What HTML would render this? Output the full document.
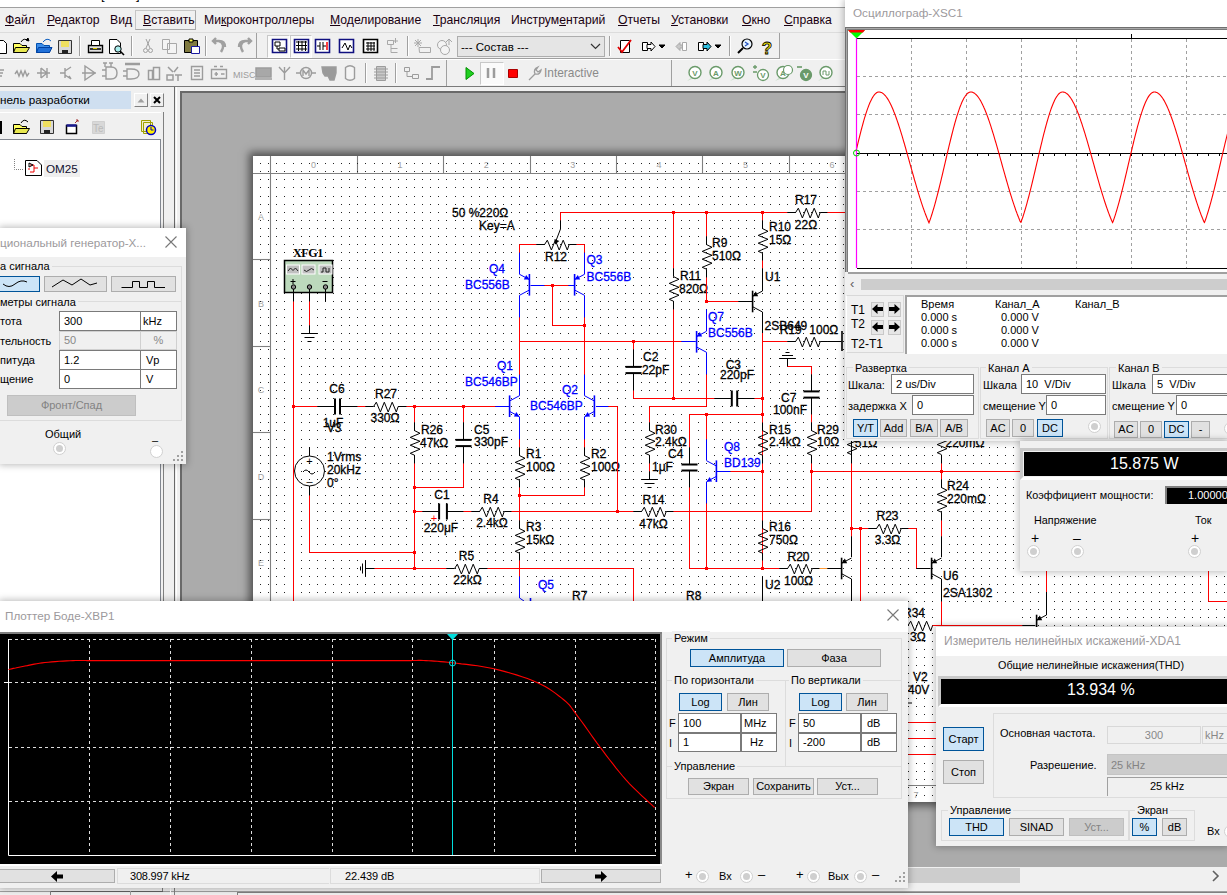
<!DOCTYPE html><html><head><meta charset="utf-8"><style>
*{margin:0;padding:0;box-sizing:border-box}
html,body{width:1227px;height:895px;overflow:hidden;background:#f0f0f0;position:relative;font-family:"Liberation Sans",sans-serif;font-size:12px;color:#000}
.t{position:absolute;white-space:nowrap;line-height:14px;font-size:11px}
.b{position:absolute}
svg{position:absolute;left:0;top:0;overflow:visible}
.btn{position:absolute;background:#e1e1e1;border:1px solid #adadad;text-align:center;white-space:nowrap;line-height:15px;font-size:11px}
.sel{background:#cce4f7;border-color:#005499}
.dis{background:#cccccc;border-color:#bfbfbf;color:#838383}
.inp{position:absolute;background:#fff;border:1px solid #7a7a7a;white-space:nowrap;line-height:16px;padding-left:4px;font-size:11px}
.grp{position:absolute;border:1px solid #dcdcdc}
.gl{position:absolute;background:#f0f0f0;padding:0 2px;line-height:13px;white-space:nowrap}
</style></head><body><div class="b" style="left:0px;top:0px;width:1227px;height:7px;background:#fff"></div>
<div class="t" style="left:101px;top:-12px;font-size:13px;color:#000">[</div><div class="t" style="left:136px;top:-12px;font-size:13px;color:#000">]</div>
<div class="b" style="left:0px;top:7px;width:1227px;height:1px;background:#a0a0a0"></div>
<div class="b" style="left:135px;top:10px;width:61px;height:20px;border:1px solid #c6c6c6;border-right-color:#a8a8a8;border-bottom-color:#a8a8a8;background:#f0f0f0"></div>
<div class="t" style="left:5px;top:13px;font-size:12.2px;line-height:15px;color:#1a0010;text-decoration-thickness:1px"><u>Ф</u>айл</div>
<div class="t" style="left:47px;top:13px;font-size:12.2px;line-height:15px;color:#1a0010;text-decoration-thickness:1px"><u>Р</u>едактор</div>
<div class="t" style="left:110px;top:13px;font-size:12.2px;line-height:15px;color:#1a0010;text-decoration-thickness:1px">Вид</div>
<div class="t" style="left:143px;top:13px;font-size:12.2px;line-height:15px;color:#1a0010;text-decoration-thickness:1px"><u>В</u>ставить</div>
<div class="t" style="left:204px;top:13px;font-size:12.2px;line-height:15px;color:#1a0010;text-decoration-thickness:1px">Ми<u>к</u>роконтроллеры</div>
<div class="t" style="left:330px;top:13px;font-size:12.2px;line-height:15px;color:#1a0010;text-decoration-thickness:1px"><u>М</u>оделирование</div>
<div class="t" style="left:433px;top:13px;font-size:12.2px;line-height:15px;color:#1a0010;text-decoration-thickness:1px"><u>Т</u>рансляция</div>
<div class="t" style="left:511px;top:13px;font-size:12.2px;line-height:15px;color:#1a0010;text-decoration-thickness:1px">Инструм<u>е</u>нтарий</div>
<div class="t" style="left:618px;top:13px;font-size:12.2px;line-height:15px;color:#1a0010;text-decoration-thickness:1px"><u>О</u>тчеты</div>
<div class="t" style="left:671px;top:13px;font-size:12.2px;line-height:15px;color:#1a0010;text-decoration-thickness:1px"><u>У</u>становки</div>
<div class="t" style="left:742px;top:13px;font-size:12.2px;line-height:15px;color:#1a0010;text-decoration-thickness:1px"><u>О</u>кно</div>
<div class="t" style="left:784px;top:13px;font-size:12.2px;line-height:15px;color:#1a0010;text-decoration-thickness:1px"><u>С</u>правка</div>
<div class="b" style="left:0px;top:32px;width:845px;height:1px;background:#dcdcdc"></div>
<div class="b" style="left:0px;top:33px;width:780px;height:26px;background:#f0f0f0;border-bottom:1px solid #a0a0a0;border-right:1px solid #a0a0a0"></div>
<div class="b" style="left:0px;top:59px;width:845px;height:1px;background:#fff"></div>
<div class="b" style="left:0px;top:60px;width:845px;height:27px;background:#f0f0f0;border-bottom:1px solid #7a7a7a"></div>
<div class="b" style="left:671px;top:60px;width:1px;height:26px;background:#a0a0a0"></div>
<div class="b" style="left:267px;top:35px;width:23px;height:23px;background:#fafafa;border:1px solid #c8c8c8;border-right-color:#fff;border-bottom-color:#fff"></div>
<div class="b" style="left:290px;top:35px;width:22px;height:23px;background:#fafafa;border:1px solid #c8c8c8;border-right-color:#fff;border-bottom-color:#fff"></div>
<div class="b" style="left:457px;top:36px;width:148px;height:21px;background:#e5e5e5;border:1px solid #adadad"></div>
<div class="t" style="left:461px;top:40px;font-size:11.5px;line-height:15px">--- Состав ---</div>
<div class="b" style="left:446px;top:60px;width:1px;height:26px;background:#a0a0a0"></div>
<div class="b" style="left:480px;top:62px;width:24px;height:23px;background:#fafafa;border:1px solid #c8c8c8;border-right-color:#fff;border-bottom-color:#fff"></div>
<div class="t" style="left:544px;top:66px;font-size:11.9px;line-height:15px;color:#8a8a8a">Interactive</div>
<svg width="1227" height="100"><path d="M79.5 36V56" stroke="#a0a0a0" fill="none" stroke-width="1"/><path d="M80.5 36V56" stroke="#fff" fill="none" stroke-width="1"/><path d="M131.5 36V56" stroke="#a0a0a0" fill="none" stroke-width="1"/><path d="M132.5 36V56" stroke="#fff" fill="none" stroke-width="1"/><path d="M205.5 36V56" stroke="#a0a0a0" fill="none" stroke-width="1"/><path d="M206.5 36V56" stroke="#fff" fill="none" stroke-width="1"/><path d="M407.5 36V56" stroke="#a0a0a0" fill="none" stroke-width="1"/><path d="M408.5 36V56" stroke="#fff" fill="none" stroke-width="1"/><path d="M609.5 36V56" stroke="#a0a0a0" fill="none" stroke-width="1"/><path d="M610.5 36V56" stroke="#fff" fill="none" stroke-width="1"/><path d="M729.5 36V56" stroke="#a0a0a0" fill="none" stroke-width="1"/><path d="M730.5 36V56" stroke="#fff" fill="none" stroke-width="1"/><path d="M256.5 33V59" stroke="#a0a0a0" fill="none" stroke-width="1"/><path d="M-2 40.5H3.5L6.5 43.5V53.5H-2" stroke="#000" fill="#fff" stroke-width="1"/><path d="M13.5 43.5H20L22 45.5H26.5V52.5H13.5Z" stroke="#000" fill="#ffff60" stroke-width="1"/><path d="M15.5 47.5H29.5L26.5 52.5H13.5Z" stroke="#000" fill="#e8e850" stroke-width="1"/><path d="M21 42Q24 37 28 41" stroke="#000" fill="none" stroke-width="1"/><path d="M26 40L29 41L28 38Z" stroke="#000" fill="#000" stroke-width="1"/><path d="M36.5 43.5H42L44 45.5H49.5V52.5H36.5Z" stroke="#0050b0" fill="#3c8ce8" stroke-width="1"/><path d="M38.5 47.5H52L49.5 52.5H36.5Z" stroke="#0040a0" fill="#2070d8" stroke-width="1"/><path d="M43 42Q47 37 51 41" stroke="#1060c0" fill="none" stroke-width="1"/><path d="M58.5 40.5H71.5V53.5H58.5Z" stroke="#333" fill="#d8d8d8" stroke-width="1"/><path d="M61 41H69V47H61Z" stroke="none" fill="#f0e060" stroke-width="1"/><path d="M62 50H68V53.5H62Z" stroke="none" fill="#222" stroke-width="1"/><path d="M88.5 45.5H102.5V52.5H88.5Z" stroke="#000" fill="#e0e0e0" stroke-width="1.4"/><path d="M91.5 40.5H99.5V45.5H91.5Z" stroke="#000" fill="#fff" stroke-width="1"/><path d="M90 49H101" stroke="#000" fill="none" stroke-width="1.5"/><path d="M93 48.5H97" stroke="#e0d000" fill="none" stroke-width="1"/><path d="M109.5 39.5H117L120.5 43V53.5H109.5Z" stroke="#000" fill="#fff" stroke-width="1"/><circle cx="118" cy="49" r="3.2" stroke="#000" fill="#aee" /><path d="M120 51L124 55" stroke="#000" fill="none" stroke-width="1.6"/><path d="M146 39L150 48M150 39L146 48" stroke="#a0a0a0" fill="none" stroke-width="1"/><circle cx="145.5" cy="50.5" r="2" stroke="#a0a0a0" fill="none"/><circle cx="150.5" cy="50.5" r="2" stroke="#a0a0a0" fill="none"/><path d="M162.5 39.5H169.5V49.5H162.5ZM167.5 43.5H176.5V53.5H167.5Z" stroke="#a8a8a8" fill="#f4f4f4" stroke-width="1"/><path d="M184.5 40.5H197.5V52.5H184.5Z" stroke="#000" fill="#807a40" stroke-width="1"/><path d="M189 39H193V42H189Z" stroke="#000" fill="#ffff50" stroke-width="1"/><path d="M191.5 46.5H199.5V53.5H191.5Z" stroke="#1a1aa0" fill="#fff" stroke-width="1"/><path d="M225 47Q225 41 219 41H214M216 38L213 41L216 44" stroke="#a0a0a0" fill="none" stroke-width="2.4"/><path d="M219 41Q226 44 221 52" stroke="#a0a0a0" fill="none" stroke-width="2.4"/><path d="M239 47Q239 41 245 41H250M248 38L251 41L248 44" stroke="#a0a0a0" fill="none" stroke-width="2.4"/><path d="M245 41Q238 44 243 52" stroke="#a0a0a0" fill="none" stroke-width="2.4"/><path d="M272.5 39.5H286.5V52.5H272.5Z" stroke="#101080" fill="#fff" stroke-width="1.6"/><path d="M294.5 39.5H308.5V52.5H294.5Z" stroke="#101080" fill="#fff" stroke-width="1.6"/><path d="M315.5 39.5H329.5V52.5H315.5Z" stroke="#101080" fill="#fff" stroke-width="1.6"/><path d="M339.5 39.5H353.5V52.5H339.5Z" stroke="#101080" fill="#fff" stroke-width="1.6"/><path d="M275 42H280V46H275ZM279 48H285V51H279ZM277 46V49H279" stroke="#000" fill="none" stroke-width="1"/><path d="M296 42H307M296 45.5H307M296 49H307M298.5 41V51M302 41V51M305.5 41V51" stroke="#000" fill="none" stroke-width="1"/><path d="M320 42V50M323 42V50M317 46H320M323 46H326" stroke="#000" fill="none" stroke-width="1"/><path d="M327 42V50" stroke="#f00" fill="none" stroke-width="1.5"/><path d="M342 48L345 43L348 50L350 45L352 48" stroke="#000" fill="none" stroke-width="1"/><path d="M363.5 39.5H377.5V52.5H363.5Z" stroke="#000" fill="#fff" stroke-width="1.6"/><path d="M366 43H375M366 46H375M366 49H375M368 42V51M371 42V51M374 42V51" stroke="#000" fill="none" stroke-width="1"/><path d="M387.5 40.5H393.5V44.5H387.5ZM391 44.5V52.5H397.5M391 48.5H397.5M395.5 38V43M393 41H398" stroke="#a8a8a8" fill="none" stroke-width="1"/><path d="M415 40L421 46M421 40L415 46M418 39V47M414 43H422M419 47.5H430.5V52.5H419.5Z" stroke="#a8a8a8" fill="none" stroke-width="1"/><circle cx="442" cy="45" r="4.5" stroke="#a8a8a8" fill="#f4f4f4"/><circle cx="445" cy="50" r="4.5" stroke="#a8a8a8" fill="#f4f4f4"/><path d="M449 39V45M446 42L449 39L452 42" stroke="#a8a8a8" fill="none" stroke-width="1"/><path d="M591 44L595.5 48.5L600 44" stroke="#333" fill="none" stroke-width="1.2"/><path d="M620.5 40.5H629.5V52.5H620.5Z" stroke="#000" fill="#fff" stroke-width="1"/><path d="M618 47L622 52L631 40" stroke="#e00000" fill="none" stroke-width="1.8"/><path d="M642.5 42.5H647.5V50.5H642.5Z" stroke="#000" fill="#fff" stroke-width="1"/><path d="M647 44.5H651V42L655 46.5L651 51V48.5H647Z" stroke="#000" fill="#fff" stroke-width="1"/><path d="M659 45H665L662 48Z" stroke="#000" fill="#000" stroke-width="1"/><path d="M698.5 42.5H703.5V50.5H698.5Z" stroke="#000" fill="#fff" stroke-width="1"/><path d="M703 44.5H707V42L711 46.5L707 51V48.5H703Z" stroke="#000" fill="#30c0e0" stroke-width="1"/><path d="M715 45H721L718 48Z" stroke="#000" fill="#000" stroke-width="1"/><path d="M676 46.5L680 42.5V45H685V48H680V50.5Z" stroke="#a8a8a8" fill="#c8c8c8" stroke-width="1"/><path d="M682.5 42.5H686.5V50.5H682.5Z" stroke="#a8a8a8" fill="#fff" stroke-width="1"/><circle cx="747" cy="44" r="5" stroke="#000" fill="#e8f4ff" stroke-width="1.2"/><path d="M743 48L738 53" stroke="#000" fill="none" stroke-width="2"/><path d="M745 42L748 44L745 46" stroke="#2050c0" fill="none" stroke-width="1.3"/><text x="767" y="54" font-size="17" font-weight="bold" fill="#f0e000" stroke="#000" stroke-width="0.8" text-anchor="middle" font-family="Liberation Sans">?</text><g stroke-width="1.4"><path d="M0 70H4M0 73H3M0 76H2" stroke="#9c9c9c" fill="none" stroke-width="1.4"/><path d="M15 74L17 71L19 76L21 71L23 76L25 71L27 76L29 73" stroke="#9c9c9c" fill="none" stroke-width="1.4"/><path d="M37 73H50M41 68V78M41 68L47 73L41 78M47 68V78" stroke="#9c9c9c" fill="none" stroke-width="1.4"/><path d="M60 73H65M65 68V78M65 71L71 67M65 75L71 79M68 77L71 79L69 76" stroke="#9c9c9c" fill="none" stroke-width="1.4"/><path d="M82 73H96M85 66V80L95 73Z" stroke="#9c9c9c" fill="#f0f0f0" stroke-width="1.4"/><path d="M102 70H106M102 76H106M106 67H111Q117 67 117 73Q117 79 111 79H106Z" stroke="#9c9c9c" fill="#f0f0f0" stroke-width="1.4"/><path d="M103 63H107M105 63V67M109 63H113M111 63V67" stroke="#9c9c9c" fill="none" stroke-width="1.4"/><path d="M123 71H127M123 76H127M127 69H131Q139 69 139 74Q139 79 131 79H127Z" stroke="#9c9c9c" fill="#f0f0f0" stroke-width="1.4"/><path d="M125 64H140" stroke="#9c9c9c" fill="none" stroke-width="2.5"/><path d="M148.5 70.5H152.5V79.5H148.5ZM153.5 67.5H159.5V79.5H153.5Z" stroke="#9c9c9c" fill="#f0f0f0" stroke-width="1.5"/><path d="M168 67L173 72M174 72L178 67M167 75H173V80H167ZM175 75H182M178 75V81" stroke="#9c9c9c" fill="#f0f0f0" stroke-width="1.5"/><path d="M191.5 66.5H202.5V79.5H191.5ZM194 70H200M194 73H200M194 76H200" stroke="#9c9c9c" fill="#f0f0f0" stroke-width="1.4"/><path d="M211.5 69.5H226.5V78.5H211.5ZM214 66.5H217M220 66.5H223M214.5 74H218M216.2 72V76M221 74H224.5" stroke="#9c9c9c" fill="#f0f0f0" stroke-width="1.4"/><text x="233" y="78" font-size="9" fill="#9c9c9c" font-family="Liberation Sans">MISC</text><path d="M256 68H271V77H256ZM255 79H272" stroke="#9c9c9c" fill="#a8a8a8" stroke-width="1.5"/><path d="M279 67L284.5 73L290 67M284.5 67V80" stroke="#9c9c9c" fill="none" stroke-width="1.4"/><circle cx="306" cy="73" r="5.5" stroke="#9c9c9c" fill="none"/><path d="M296 73H300.5M311.5 73H316M303 76V70L306 74L309 70V76" stroke="#9c9c9c" fill="none" stroke-width="1.4"/><path d="M322 67H336V73L334 80H330L328 76H325L323 73Z" stroke="#9c9c9c" fill="#9a9a9a" stroke-width="1.4"/><path d="M345.5 67.5Q350 64 354.5 67.5V78.5Q350 82 345.5 78.5Z" stroke="#9c9c9c" fill="#f4f4f4" stroke-width="1.4"/></g><path d="M365.5 63V83" stroke="#a0a0a0" fill="none" stroke-width="1"/><path d="M366.5 63V83" stroke="#fff" fill="none" stroke-width="1"/><path d="M376.5 66.5H385.5V80.5H376.5ZM374 69H388M374 72H388M374 75H388M374 78H388" stroke="#9c9c9c" fill="#c8c8c8" stroke-width="1"/><path d="M395.5 63V83" stroke="#a0a0a0" fill="none" stroke-width="1"/><path d="M396.5 63V83" stroke="#fff" fill="none" stroke-width="1"/><path d="M404.5 67.5H409.5V71.5H404.5ZM412.5 74.5H418.5V78.5H412.5ZM407 71.5V76.5H412.5" stroke="#9c9c9c" fill="none" stroke-width="1"/><path d="M426 79H432V67H440" stroke="#9c9c9c" fill="none" stroke-width="1.8"/><path d="M466 67.5V79.5L474 73.5Z" stroke="#009000" fill="#20d020" stroke-width="1"/><path d="M488 68V78M494 68V78" stroke="#9c9c9c" fill="none" stroke-width="2.5"/><path d="M508.5 69.5H517.5V77.5H508.5Z" stroke="#a00" fill="#f00" stroke-width="1"/><path d="M529 80L535 74M535 74Q533 69 538 67L536 70L538 72L541 70Q540 75 535 74" stroke="#9c9c9c" fill="#f0f0f0" stroke-width="1.3"/><path d="M687 81L692 77H697Z" fill="#c8e0c8"/><circle cx="695" cy="72.5" r="6" stroke="#6a9a6a" fill="#fff" stroke-width="1.4"/><text x="695" y="75.5" font-size="8" font-weight="bold" fill="#6a9a6a" text-anchor="middle" font-family="Liberation Sans">V</text><path d="M708 81L713 77H718Z" fill="#c8e0c8"/><circle cx="716" cy="72.5" r="6" stroke="#6a9a6a" fill="#fff" stroke-width="1.4"/><text x="716" y="75.5" font-size="8" font-weight="bold" fill="#6a9a6a" text-anchor="middle" font-family="Liberation Sans">A</text><path d="M730 81L735 77H740Z" fill="#c8e0c8"/><circle cx="738" cy="72.5" r="6" stroke="#6a9a6a" fill="#fff" stroke-width="1.4"/><text x="738" y="75.5" font-size="8" font-weight="bold" fill="#6a9a6a" text-anchor="middle" font-family="Liberation Sans">W</text><path d="M775 81L780 77H785Z" fill="#c8e0c8"/><circle cx="783" cy="72.5" r="6" stroke="#6a9a6a" fill="#fff" stroke-width="1.4"/><text x="783" y="75.5" font-size="8" font-weight="bold" fill="#6a9a6a" text-anchor="middle" font-family="Liberation Sans">A</text><path d="M818 81L823 77H828Z" fill="#c8e0c8"/><circle cx="826" cy="72.5" r="6" stroke="#6a9a6a" fill="#fff" stroke-width="1.4"/><path d="M823 75V71H826V75H829V71" stroke="#6a9a6a" fill="none" stroke-width="1"/><circle cx="763" cy="75" r="5.5" stroke="#6a9a6a" fill="#fff" stroke-width="1.3"/><text x="763" y="78" font-size="8" font-weight="bold" fill="#6a9a6a" text-anchor="middle" font-family="Liberation Sans">V</text><path d="M753 67H757M755 65V69M753 72H757" stroke="#6a9a6a" fill="none" stroke-width="1.3"/><circle cx="788" cy="70" r="4.5" stroke="#6a9a6a" fill="#fff" stroke-width="1.2"/><circle cx="806" cy="75" r="5.5" stroke="#6a9a6a" fill="#6a9a6a" stroke-width="1.3"/><text x="806" y="78" font-size="8" font-weight="bold" fill="#fff" text-anchor="middle" font-family="Liberation Sans">V</text><path d="M797 67H802" stroke="#6a9a6a" fill="none" stroke-width="1.6"/></svg>
<div class="b" style="left:0px;top:87px;width:180px;height:514px;background:#f0f0f0"></div>
<div class="b" style="left:0px;top:91px;width:131px;height:18px;background:#cfdff0"></div>
<div class="t" style="left:0px;top:92px;font-size:11.7px;line-height:15px">нель разработки</div>
<div class="b" style="left:134px;top:93px;width:14px;height:14px;background:#f0f0f0;border:1px solid #fff;border-right-color:#808080;border-bottom-color:#808080"></div>
<div class="b" style="left:150px;top:93px;width:14px;height:14px;background:#f0f0f0;border:1px solid #fff;border-right-color:#808080;border-bottom-color:#808080"></div>
<div class="b" style="left:0px;top:112px;width:164px;height:489px;border-right:1px solid #a0a0a0;border-top:1px solid #fff"></div>
<div class="b" style="left:161px;top:112px;width:3px;height:489px;background:#f0f0f0;border-right:1px solid #808080"></div>
<div class="b" style="left:0px;top:139px;width:161px;height:462px;background:#fff;border-top:1px solid #828790;border-right:1px solid #828790"></div>
<svg width="300" height="200"><path d="M137.5 102.5L141 98.5L144.5 102.5Z" fill="#a0a0a0"/><path d="M154 97L160 103M160 97L154 103" stroke="#000" stroke-width="2"/><path d="M0 121H2V134H0Z" fill="#000"/><path d="M13.5 124.5H20L22 126.5H26.5V133.5H13.5Z" stroke="#000" fill="#ffff60"/><path d="M15.5 128.5H29.5L26.5 133.5H13.5Z" stroke="#000" fill="#e8e850"/><path d="M21 123Q24 118 28 122" stroke="#000" fill="none"/><path d="M40.5 120.5H53.5V133.5H40.5Z" stroke="#333" fill="#d8d8d8"/><path d="M43 121H51V127H43Z" fill="#f0e060"/><path d="M44 130H50V133.5H44Z" fill="#222"/><path d="M66.5 125.5H76.5V133.5H66.5Z" stroke="#000" fill="#fff" stroke-width="1.5"/><path d="M66.5 125.5H76.5" stroke="#1a1a90" stroke-width="2.5"/><path d="M75 123L78 120M76 120H78V122" stroke="#a03030" fill="none"/><path d="M92.5 121.5H104.5V133.5H92.5Z" fill="#d8d8d8" stroke="#d0d0d0"/><text x="93" y="132" font-size="10" fill="#bbb" font-family="Liberation Sans">Te</text><path d="M141.5 120.5H150.5V131.5H141.5ZM143.5 122.5H152.5V133.5H143.5Z" stroke="#a0a000" fill="#f0f0d0"/><circle cx="151" cy="130" r="4.5" fill="#ffee00" stroke="#0000c0" stroke-width="1.5"/><path d="M151 127V130H153.5" stroke="#0000c0" fill="none"/><path d="M14.5 159V169.5H24" stroke="#808080" stroke-dasharray="1 1" fill="none"/><path d="M25.5 160.5H37L41.5 165V175.5H25.5Z" stroke="#000" fill="#fff"/><path d="M30 165H34V172H30M34 168H38M28 169H30" stroke="#e00" fill="none"/><path d="M29 163L33 165L29 167Z" stroke="#000" fill="none"/></svg>
<div class="b" style="left:44px;top:160px;width:36px;height:17px;background:#efefef"></div>
<div class="t" style="left:46px;top:161px;font-size:11.7px;line-height:15px;color:#101030">OM25</div>
<div class="b" style="left:164px;top:87px;width:16px;height:514px;background:#f0f0f0"></div>
<div class="b" style="left:174px;top:87px;width:1px;height:514px;background:#696969"></div>
<div class="b" style="left:176px;top:87px;width:1px;height:514px;background:#fff"></div>
<div class="b" style="left:0px;top:885px;width:1227px;height:10px;background:#f0f0f0"></div>
<div class="b" style="left:0px;top:891px;width:1227px;height:1px;background:#a0a0a0"></div>
<div class="b" style="left:0px;top:887px;width:163px;height:1px;background:#808080"></div>
<div class="b" style="left:162px;top:887px;width:1px;height:5px;background:#808080"></div>
<div class="b" style="left:50px;top:891px;width:113px;height:1px;background:#606060"></div>
<div class="b" style="left:50px;top:891px;width:1px;height:4px;background:#808080"></div>
<div class="b" style="left:130px;top:891px;width:1px;height:4px;background:#a0a0a0"></div>
<div class="b" style="left:170px;top:887px;width:1px;height:8px;background:#fff"></div>
<div class="b" style="left:174px;top:887px;width:1px;height:8px;background:#808080"></div>
<div class="b" style="left:237px;top:892px;width:990px;height:1px;background:#808080"></div>
<div class="b" style="left:237px;top:892px;width:1px;height:3px;background:#808080"></div>
<div class="b" style="left:180px;top:91px;width:1047px;height:777px;background:#ababab;border-left:2px solid #696969;border-top:2px solid #696969"></div>
<div class="b" style="left:253px;top:156px;width:974px;height:646px;background:#fff;box-shadow:0 0 8px 4px rgba(0,0,0,.52)"></div>
<div class="b" style="left:180px;top:867px;width:1047px;height:18px;background:#f0f0f0"></div>
<div class="b" style="left:180px;top:868px;width:840px;height:15px;background:#cdcdcd"></div>
<svg width="1227" height="895"><path d="M1213 871L1218 876L1213 881" stroke="#606060" stroke-width="1.6" fill="none"/></svg>
<svg width="1227" height="895" style="font-family:'Liberation Sans',sans-serif"><path d="M253 173.5H845M270.5 156V601M908 785.5H936" stroke="#808080" stroke-width="1.1"/><path d="M357.5 156V173" stroke="#808080" stroke-width="1.1"/><path d="M443.5 156V173" stroke="#808080" stroke-width="1.1"/><path d="M530.5 156V173" stroke="#808080" stroke-width="1.1"/><path d="M616.5 156V173" stroke="#808080" stroke-width="1.1"/><path d="M702.5 156V173" stroke="#808080" stroke-width="1.1"/><path d="M789.5 156V173" stroke="#808080" stroke-width="1.1"/><path d="M253 259.5H270" stroke="#808080" stroke-width="1.1"/><path d="M253 346.5H270" stroke="#808080" stroke-width="1.1"/><path d="M253 432.5H270" stroke="#808080" stroke-width="1.1"/><path d="M253 519.5H270" stroke="#808080" stroke-width="1.1"/><path d="M253 605.5H270" stroke="#808080" stroke-width="1.1"/><text x="313.5" y="167.5" font-size="9" fill="#a0a0a0" text-anchor="middle">0</text><text x="399.9" y="167.5" font-size="9" fill="#a0a0a0" text-anchor="middle">1</text><text x="486.3" y="167.5" font-size="9" fill="#a0a0a0" text-anchor="middle">2</text><text x="572.7" y="167.5" font-size="9" fill="#a0a0a0" text-anchor="middle">3</text><text x="659.1" y="167.5" font-size="9" fill="#a0a0a0" text-anchor="middle">4</text><text x="745.5" y="167.5" font-size="9" fill="#a0a0a0" text-anchor="middle">5</text><text x="831.9" y="167.5" font-size="9" fill="#a0a0a0" text-anchor="middle">6</text><text x="261" y="220.2" font-size="9" fill="#a0a0a0" text-anchor="middle">A</text><text x="261" y="306.6" font-size="9" fill="#a0a0a0" text-anchor="middle">B</text><text x="261" y="393.1" font-size="9" fill="#a0a0a0" text-anchor="middle">C</text><text x="261" y="479.6" font-size="9" fill="#a0a0a0" text-anchor="middle">D</text><text x="261" y="566.0" font-size="9" fill="#a0a0a0" text-anchor="middle">E</text><text x="916" y="797.5" font-size="9" fill="#a0a0a0" text-anchor="middle">7</text><path fill="#222" d="M260 163h1v1h-1zM268 163h1v1h-1zM276 163h1v1h-1zM284 163h1v1h-1zM293 163h1v1h-1zM301 163h1v1h-1zM309 163h1v1h-1zM317 163h1v1h-1zM325 163h1v1h-1zM333 163h1v1h-1zM341 163h1v1h-1zM349 163h1v1h-1zM357 163h1v1h-1zM365 163h1v1h-1zM374 163h1v1h-1zM382 163h1v1h-1zM390 163h1v1h-1zM398 163h1v1h-1zM406 163h1v1h-1zM414 163h1v1h-1zM422 163h1v1h-1zM430 163h1v1h-1zM438 163h1v1h-1zM446 163h1v1h-1zM455 163h1v1h-1zM463 163h1v1h-1zM471 163h1v1h-1zM479 163h1v1h-1zM487 163h1v1h-1zM495 163h1v1h-1zM503 163h1v1h-1zM511 163h1v1h-1zM519 163h1v1h-1zM527 163h1v1h-1zM536 163h1v1h-1zM544 163h1v1h-1zM552 163h1v1h-1zM560 163h1v1h-1zM568 163h1v1h-1zM576 163h1v1h-1zM584 163h1v1h-1zM592 163h1v1h-1zM600 163h1v1h-1zM608 163h1v1h-1zM617 163h1v1h-1zM625 163h1v1h-1zM633 163h1v1h-1zM641 163h1v1h-1zM649 163h1v1h-1zM657 163h1v1h-1zM665 163h1v1h-1zM673 163h1v1h-1zM681 163h1v1h-1zM689 163h1v1h-1zM698 163h1v1h-1zM706 163h1v1h-1zM714 163h1v1h-1zM722 163h1v1h-1zM730 163h1v1h-1zM738 163h1v1h-1zM746 163h1v1h-1zM754 163h1v1h-1zM762 163h1v1h-1zM770 163h1v1h-1zM779 163h1v1h-1zM787 163h1v1h-1zM795 163h1v1h-1zM803 163h1v1h-1zM811 163h1v1h-1zM819 163h1v1h-1zM827 163h1v1h-1zM835 163h1v1h-1zM843 163h1v1h-1zM260 171h1v1h-1zM268 171h1v1h-1zM276 171h1v1h-1zM284 171h1v1h-1zM293 171h1v1h-1zM301 171h1v1h-1zM309 171h1v1h-1zM317 171h1v1h-1zM325 171h1v1h-1zM333 171h1v1h-1zM341 171h1v1h-1zM349 171h1v1h-1zM357 171h1v1h-1zM365 171h1v1h-1zM374 171h1v1h-1zM382 171h1v1h-1zM390 171h1v1h-1zM398 171h1v1h-1zM406 171h1v1h-1zM414 171h1v1h-1zM422 171h1v1h-1zM430 171h1v1h-1zM438 171h1v1h-1zM446 171h1v1h-1zM455 171h1v1h-1zM463 171h1v1h-1zM471 171h1v1h-1zM479 171h1v1h-1zM487 171h1v1h-1zM495 171h1v1h-1zM503 171h1v1h-1zM511 171h1v1h-1zM519 171h1v1h-1zM527 171h1v1h-1zM536 171h1v1h-1zM544 171h1v1h-1zM552 171h1v1h-1zM560 171h1v1h-1zM568 171h1v1h-1zM576 171h1v1h-1zM584 171h1v1h-1zM592 171h1v1h-1zM600 171h1v1h-1zM608 171h1v1h-1zM617 171h1v1h-1zM625 171h1v1h-1zM633 171h1v1h-1zM641 171h1v1h-1zM649 171h1v1h-1zM657 171h1v1h-1zM665 171h1v1h-1zM673 171h1v1h-1zM681 171h1v1h-1zM689 171h1v1h-1zM698 171h1v1h-1zM706 171h1v1h-1zM714 171h1v1h-1zM722 171h1v1h-1zM730 171h1v1h-1zM738 171h1v1h-1zM746 171h1v1h-1zM754 171h1v1h-1zM762 171h1v1h-1zM770 171h1v1h-1zM779 171h1v1h-1zM787 171h1v1h-1zM795 171h1v1h-1zM803 171h1v1h-1zM811 171h1v1h-1zM819 171h1v1h-1zM827 171h1v1h-1zM835 171h1v1h-1zM843 171h1v1h-1zM260 179h1v1h-1zM268 179h1v1h-1zM276 179h1v1h-1zM284 179h1v1h-1zM293 179h1v1h-1zM301 179h1v1h-1zM309 179h1v1h-1zM317 179h1v1h-1zM325 179h1v1h-1zM333 179h1v1h-1zM341 179h1v1h-1zM349 179h1v1h-1zM357 179h1v1h-1zM365 179h1v1h-1zM374 179h1v1h-1zM382 179h1v1h-1zM390 179h1v1h-1zM398 179h1v1h-1zM406 179h1v1h-1zM414 179h1v1h-1zM422 179h1v1h-1zM430 179h1v1h-1zM438 179h1v1h-1zM446 179h1v1h-1zM455 179h1v1h-1zM463 179h1v1h-1zM471 179h1v1h-1zM479 179h1v1h-1zM487 179h1v1h-1zM495 179h1v1h-1zM503 179h1v1h-1zM511 179h1v1h-1zM519 179h1v1h-1zM527 179h1v1h-1zM536 179h1v1h-1zM544 179h1v1h-1zM552 179h1v1h-1zM560 179h1v1h-1zM568 179h1v1h-1zM576 179h1v1h-1zM584 179h1v1h-1zM592 179h1v1h-1zM600 179h1v1h-1zM608 179h1v1h-1zM617 179h1v1h-1zM625 179h1v1h-1zM633 179h1v1h-1zM641 179h1v1h-1zM649 179h1v1h-1zM657 179h1v1h-1zM665 179h1v1h-1zM673 179h1v1h-1zM681 179h1v1h-1zM689 179h1v1h-1zM698 179h1v1h-1zM706 179h1v1h-1zM714 179h1v1h-1zM722 179h1v1h-1zM730 179h1v1h-1zM738 179h1v1h-1zM746 179h1v1h-1zM754 179h1v1h-1zM762 179h1v1h-1zM770 179h1v1h-1zM779 179h1v1h-1zM787 179h1v1h-1zM795 179h1v1h-1zM803 179h1v1h-1zM811 179h1v1h-1zM819 179h1v1h-1zM827 179h1v1h-1zM835 179h1v1h-1zM843 179h1v1h-1zM260 187h1v1h-1zM268 187h1v1h-1zM276 187h1v1h-1zM284 187h1v1h-1zM293 187h1v1h-1zM301 187h1v1h-1zM309 187h1v1h-1zM317 187h1v1h-1zM325 187h1v1h-1zM333 187h1v1h-1zM341 187h1v1h-1zM349 187h1v1h-1zM357 187h1v1h-1zM365 187h1v1h-1zM374 187h1v1h-1zM382 187h1v1h-1zM390 187h1v1h-1zM398 187h1v1h-1zM406 187h1v1h-1zM414 187h1v1h-1zM422 187h1v1h-1zM430 187h1v1h-1zM438 187h1v1h-1zM446 187h1v1h-1zM455 187h1v1h-1zM463 187h1v1h-1zM471 187h1v1h-1zM479 187h1v1h-1zM487 187h1v1h-1zM495 187h1v1h-1zM503 187h1v1h-1zM511 187h1v1h-1zM519 187h1v1h-1zM527 187h1v1h-1zM536 187h1v1h-1zM544 187h1v1h-1zM552 187h1v1h-1zM560 187h1v1h-1zM568 187h1v1h-1zM576 187h1v1h-1zM584 187h1v1h-1zM592 187h1v1h-1zM600 187h1v1h-1zM608 187h1v1h-1zM617 187h1v1h-1zM625 187h1v1h-1zM633 187h1v1h-1zM641 187h1v1h-1zM649 187h1v1h-1zM657 187h1v1h-1zM665 187h1v1h-1zM673 187h1v1h-1zM681 187h1v1h-1zM689 187h1v1h-1zM698 187h1v1h-1zM706 187h1v1h-1zM714 187h1v1h-1zM722 187h1v1h-1zM730 187h1v1h-1zM738 187h1v1h-1zM746 187h1v1h-1zM754 187h1v1h-1zM762 187h1v1h-1zM770 187h1v1h-1zM779 187h1v1h-1zM787 187h1v1h-1zM795 187h1v1h-1zM803 187h1v1h-1zM811 187h1v1h-1zM819 187h1v1h-1zM827 187h1v1h-1zM835 187h1v1h-1zM843 187h1v1h-1zM260 196h1v1h-1zM268 196h1v1h-1zM276 196h1v1h-1zM284 196h1v1h-1zM293 196h1v1h-1zM301 196h1v1h-1zM309 196h1v1h-1zM317 196h1v1h-1zM325 196h1v1h-1zM333 196h1v1h-1zM341 196h1v1h-1zM349 196h1v1h-1zM357 196h1v1h-1zM365 196h1v1h-1zM374 196h1v1h-1zM382 196h1v1h-1zM390 196h1v1h-1zM398 196h1v1h-1zM406 196h1v1h-1zM414 196h1v1h-1zM422 196h1v1h-1zM430 196h1v1h-1zM438 196h1v1h-1zM446 196h1v1h-1zM455 196h1v1h-1zM463 196h1v1h-1zM471 196h1v1h-1zM479 196h1v1h-1zM487 196h1v1h-1zM495 196h1v1h-1zM503 196h1v1h-1zM511 196h1v1h-1zM519 196h1v1h-1zM527 196h1v1h-1zM536 196h1v1h-1zM544 196h1v1h-1zM552 196h1v1h-1zM560 196h1v1h-1zM568 196h1v1h-1zM576 196h1v1h-1zM584 196h1v1h-1zM592 196h1v1h-1zM600 196h1v1h-1zM608 196h1v1h-1zM617 196h1v1h-1zM625 196h1v1h-1zM633 196h1v1h-1zM641 196h1v1h-1zM649 196h1v1h-1zM657 196h1v1h-1zM665 196h1v1h-1zM673 196h1v1h-1zM681 196h1v1h-1zM689 196h1v1h-1zM698 196h1v1h-1zM706 196h1v1h-1zM714 196h1v1h-1zM722 196h1v1h-1zM730 196h1v1h-1zM738 196h1v1h-1zM746 196h1v1h-1zM754 196h1v1h-1zM762 196h1v1h-1zM770 196h1v1h-1zM779 196h1v1h-1zM787 196h1v1h-1zM795 196h1v1h-1zM803 196h1v1h-1zM811 196h1v1h-1zM819 196h1v1h-1zM827 196h1v1h-1zM835 196h1v1h-1zM843 196h1v1h-1zM260 204h1v1h-1zM268 204h1v1h-1zM276 204h1v1h-1zM284 204h1v1h-1zM293 204h1v1h-1zM301 204h1v1h-1zM309 204h1v1h-1zM317 204h1v1h-1zM325 204h1v1h-1zM333 204h1v1h-1zM341 204h1v1h-1zM349 204h1v1h-1zM357 204h1v1h-1zM365 204h1v1h-1zM374 204h1v1h-1zM382 204h1v1h-1zM390 204h1v1h-1zM398 204h1v1h-1zM406 204h1v1h-1zM414 204h1v1h-1zM422 204h1v1h-1zM430 204h1v1h-1zM438 204h1v1h-1zM446 204h1v1h-1zM455 204h1v1h-1zM463 204h1v1h-1zM471 204h1v1h-1zM479 204h1v1h-1zM487 204h1v1h-1zM495 204h1v1h-1zM503 204h1v1h-1zM511 204h1v1h-1zM519 204h1v1h-1zM527 204h1v1h-1zM536 204h1v1h-1zM544 204h1v1h-1zM552 204h1v1h-1zM560 204h1v1h-1zM568 204h1v1h-1zM576 204h1v1h-1zM584 204h1v1h-1zM592 204h1v1h-1zM600 204h1v1h-1zM608 204h1v1h-1zM617 204h1v1h-1zM625 204h1v1h-1zM633 204h1v1h-1zM641 204h1v1h-1zM649 204h1v1h-1zM657 204h1v1h-1zM665 204h1v1h-1zM673 204h1v1h-1zM681 204h1v1h-1zM689 204h1v1h-1zM698 204h1v1h-1zM706 204h1v1h-1zM714 204h1v1h-1zM722 204h1v1h-1zM730 204h1v1h-1zM738 204h1v1h-1zM746 204h1v1h-1zM754 204h1v1h-1zM762 204h1v1h-1zM770 204h1v1h-1zM779 204h1v1h-1zM787 204h1v1h-1zM795 204h1v1h-1zM803 204h1v1h-1zM811 204h1v1h-1zM819 204h1v1h-1zM827 204h1v1h-1zM835 204h1v1h-1zM843 204h1v1h-1zM260 212h1v1h-1zM268 212h1v1h-1zM276 212h1v1h-1zM284 212h1v1h-1zM293 212h1v1h-1zM301 212h1v1h-1zM309 212h1v1h-1zM317 212h1v1h-1zM325 212h1v1h-1zM333 212h1v1h-1zM341 212h1v1h-1zM349 212h1v1h-1zM357 212h1v1h-1zM365 212h1v1h-1zM374 212h1v1h-1zM382 212h1v1h-1zM390 212h1v1h-1zM398 212h1v1h-1zM406 212h1v1h-1zM414 212h1v1h-1zM422 212h1v1h-1zM430 212h1v1h-1zM438 212h1v1h-1zM446 212h1v1h-1zM455 212h1v1h-1zM463 212h1v1h-1zM471 212h1v1h-1zM479 212h1v1h-1zM487 212h1v1h-1zM495 212h1v1h-1zM503 212h1v1h-1zM511 212h1v1h-1zM519 212h1v1h-1zM527 212h1v1h-1zM536 212h1v1h-1zM544 212h1v1h-1zM552 212h1v1h-1zM560 212h1v1h-1zM568 212h1v1h-1zM576 212h1v1h-1zM584 212h1v1h-1zM592 212h1v1h-1zM600 212h1v1h-1zM608 212h1v1h-1zM617 212h1v1h-1zM625 212h1v1h-1zM633 212h1v1h-1zM641 212h1v1h-1zM649 212h1v1h-1zM657 212h1v1h-1zM665 212h1v1h-1zM673 212h1v1h-1zM681 212h1v1h-1zM689 212h1v1h-1zM698 212h1v1h-1zM706 212h1v1h-1zM714 212h1v1h-1zM722 212h1v1h-1zM730 212h1v1h-1zM738 212h1v1h-1zM746 212h1v1h-1zM754 212h1v1h-1zM762 212h1v1h-1zM770 212h1v1h-1zM779 212h1v1h-1zM787 212h1v1h-1zM795 212h1v1h-1zM803 212h1v1h-1zM811 212h1v1h-1zM819 212h1v1h-1zM827 212h1v1h-1zM835 212h1v1h-1zM843 212h1v1h-1zM260 220h1v1h-1zM268 220h1v1h-1zM276 220h1v1h-1zM284 220h1v1h-1zM293 220h1v1h-1zM301 220h1v1h-1zM309 220h1v1h-1zM317 220h1v1h-1zM325 220h1v1h-1zM333 220h1v1h-1zM341 220h1v1h-1zM349 220h1v1h-1zM357 220h1v1h-1zM365 220h1v1h-1zM374 220h1v1h-1zM382 220h1v1h-1zM390 220h1v1h-1zM398 220h1v1h-1zM406 220h1v1h-1zM414 220h1v1h-1zM422 220h1v1h-1zM430 220h1v1h-1zM438 220h1v1h-1zM446 220h1v1h-1zM455 220h1v1h-1zM463 220h1v1h-1zM471 220h1v1h-1zM479 220h1v1h-1zM487 220h1v1h-1zM495 220h1v1h-1zM503 220h1v1h-1zM511 220h1v1h-1zM519 220h1v1h-1zM527 220h1v1h-1zM536 220h1v1h-1zM544 220h1v1h-1zM552 220h1v1h-1zM560 220h1v1h-1zM568 220h1v1h-1zM576 220h1v1h-1zM584 220h1v1h-1zM592 220h1v1h-1zM600 220h1v1h-1zM608 220h1v1h-1zM617 220h1v1h-1zM625 220h1v1h-1zM633 220h1v1h-1zM641 220h1v1h-1zM649 220h1v1h-1zM657 220h1v1h-1zM665 220h1v1h-1zM673 220h1v1h-1zM681 220h1v1h-1zM689 220h1v1h-1zM698 220h1v1h-1zM706 220h1v1h-1zM714 220h1v1h-1zM722 220h1v1h-1zM730 220h1v1h-1zM738 220h1v1h-1zM746 220h1v1h-1zM754 220h1v1h-1zM762 220h1v1h-1zM770 220h1v1h-1zM779 220h1v1h-1zM787 220h1v1h-1zM795 220h1v1h-1zM803 220h1v1h-1zM811 220h1v1h-1zM819 220h1v1h-1zM827 220h1v1h-1zM835 220h1v1h-1zM843 220h1v1h-1zM260 228h1v1h-1zM268 228h1v1h-1zM276 228h1v1h-1zM284 228h1v1h-1zM293 228h1v1h-1zM301 228h1v1h-1zM309 228h1v1h-1zM317 228h1v1h-1zM325 228h1v1h-1zM333 228h1v1h-1zM341 228h1v1h-1zM349 228h1v1h-1zM357 228h1v1h-1zM365 228h1v1h-1zM374 228h1v1h-1zM382 228h1v1h-1zM390 228h1v1h-1zM398 228h1v1h-1zM406 228h1v1h-1zM414 228h1v1h-1zM422 228h1v1h-1zM430 228h1v1h-1zM438 228h1v1h-1zM446 228h1v1h-1zM455 228h1v1h-1zM463 228h1v1h-1zM471 228h1v1h-1zM479 228h1v1h-1zM487 228h1v1h-1zM495 228h1v1h-1zM503 228h1v1h-1zM511 228h1v1h-1zM519 228h1v1h-1zM527 228h1v1h-1zM536 228h1v1h-1zM544 228h1v1h-1zM552 228h1v1h-1zM560 228h1v1h-1zM568 228h1v1h-1zM576 228h1v1h-1zM584 228h1v1h-1zM592 228h1v1h-1zM600 228h1v1h-1zM608 228h1v1h-1zM617 228h1v1h-1zM625 228h1v1h-1zM633 228h1v1h-1zM641 228h1v1h-1zM649 228h1v1h-1zM657 228h1v1h-1zM665 228h1v1h-1zM673 228h1v1h-1zM681 228h1v1h-1zM689 228h1v1h-1zM698 228h1v1h-1zM706 228h1v1h-1zM714 228h1v1h-1zM722 228h1v1h-1zM730 228h1v1h-1zM738 228h1v1h-1zM746 228h1v1h-1zM754 228h1v1h-1zM762 228h1v1h-1zM770 228h1v1h-1zM779 228h1v1h-1zM787 228h1v1h-1zM795 228h1v1h-1zM803 228h1v1h-1zM811 228h1v1h-1zM819 228h1v1h-1zM827 228h1v1h-1zM835 228h1v1h-1zM843 228h1v1h-1zM260 236h1v1h-1zM268 236h1v1h-1zM276 236h1v1h-1zM284 236h1v1h-1zM293 236h1v1h-1zM301 236h1v1h-1zM309 236h1v1h-1zM317 236h1v1h-1zM325 236h1v1h-1zM333 236h1v1h-1zM341 236h1v1h-1zM349 236h1v1h-1zM357 236h1v1h-1zM365 236h1v1h-1zM374 236h1v1h-1zM382 236h1v1h-1zM390 236h1v1h-1zM398 236h1v1h-1zM406 236h1v1h-1zM414 236h1v1h-1zM422 236h1v1h-1zM430 236h1v1h-1zM438 236h1v1h-1zM446 236h1v1h-1zM455 236h1v1h-1zM463 236h1v1h-1zM471 236h1v1h-1zM479 236h1v1h-1zM487 236h1v1h-1zM495 236h1v1h-1zM503 236h1v1h-1zM511 236h1v1h-1zM519 236h1v1h-1zM527 236h1v1h-1zM536 236h1v1h-1zM544 236h1v1h-1zM552 236h1v1h-1zM560 236h1v1h-1zM568 236h1v1h-1zM576 236h1v1h-1zM584 236h1v1h-1zM592 236h1v1h-1zM600 236h1v1h-1zM608 236h1v1h-1zM617 236h1v1h-1zM625 236h1v1h-1zM633 236h1v1h-1zM641 236h1v1h-1zM649 236h1v1h-1zM657 236h1v1h-1zM665 236h1v1h-1zM673 236h1v1h-1zM681 236h1v1h-1zM689 236h1v1h-1zM698 236h1v1h-1zM706 236h1v1h-1zM714 236h1v1h-1zM722 236h1v1h-1zM730 236h1v1h-1zM738 236h1v1h-1zM746 236h1v1h-1zM754 236h1v1h-1zM762 236h1v1h-1zM770 236h1v1h-1zM779 236h1v1h-1zM787 236h1v1h-1zM795 236h1v1h-1zM803 236h1v1h-1zM811 236h1v1h-1zM819 236h1v1h-1zM827 236h1v1h-1zM835 236h1v1h-1zM843 236h1v1h-1zM260 244h1v1h-1zM268 244h1v1h-1zM276 244h1v1h-1zM284 244h1v1h-1zM293 244h1v1h-1zM301 244h1v1h-1zM309 244h1v1h-1zM317 244h1v1h-1zM325 244h1v1h-1zM333 244h1v1h-1zM341 244h1v1h-1zM349 244h1v1h-1zM357 244h1v1h-1zM365 244h1v1h-1zM374 244h1v1h-1zM382 244h1v1h-1zM390 244h1v1h-1zM398 244h1v1h-1zM406 244h1v1h-1zM414 244h1v1h-1zM422 244h1v1h-1zM430 244h1v1h-1zM438 244h1v1h-1zM446 244h1v1h-1zM455 244h1v1h-1zM463 244h1v1h-1zM471 244h1v1h-1zM479 244h1v1h-1zM487 244h1v1h-1zM495 244h1v1h-1zM503 244h1v1h-1zM511 244h1v1h-1zM519 244h1v1h-1zM527 244h1v1h-1zM536 244h1v1h-1zM544 244h1v1h-1zM552 244h1v1h-1zM560 244h1v1h-1zM568 244h1v1h-1zM576 244h1v1h-1zM584 244h1v1h-1zM592 244h1v1h-1zM600 244h1v1h-1zM608 244h1v1h-1zM617 244h1v1h-1zM625 244h1v1h-1zM633 244h1v1h-1zM641 244h1v1h-1zM649 244h1v1h-1zM657 244h1v1h-1zM665 244h1v1h-1zM673 244h1v1h-1zM681 244h1v1h-1zM689 244h1v1h-1zM698 244h1v1h-1zM706 244h1v1h-1zM714 244h1v1h-1zM722 244h1v1h-1zM730 244h1v1h-1zM738 244h1v1h-1zM746 244h1v1h-1zM754 244h1v1h-1zM762 244h1v1h-1zM770 244h1v1h-1zM779 244h1v1h-1zM787 244h1v1h-1zM795 244h1v1h-1zM803 244h1v1h-1zM811 244h1v1h-1zM819 244h1v1h-1zM827 244h1v1h-1zM835 244h1v1h-1zM843 244h1v1h-1zM260 252h1v1h-1zM268 252h1v1h-1zM276 252h1v1h-1zM284 252h1v1h-1zM293 252h1v1h-1zM301 252h1v1h-1zM309 252h1v1h-1zM317 252h1v1h-1zM325 252h1v1h-1zM333 252h1v1h-1zM341 252h1v1h-1zM349 252h1v1h-1zM357 252h1v1h-1zM365 252h1v1h-1zM374 252h1v1h-1zM382 252h1v1h-1zM390 252h1v1h-1zM398 252h1v1h-1zM406 252h1v1h-1zM414 252h1v1h-1zM422 252h1v1h-1zM430 252h1v1h-1zM438 252h1v1h-1zM446 252h1v1h-1zM455 252h1v1h-1zM463 252h1v1h-1zM471 252h1v1h-1zM479 252h1v1h-1zM487 252h1v1h-1zM495 252h1v1h-1zM503 252h1v1h-1zM511 252h1v1h-1zM519 252h1v1h-1zM527 252h1v1h-1zM536 252h1v1h-1zM544 252h1v1h-1zM552 252h1v1h-1zM560 252h1v1h-1zM568 252h1v1h-1zM576 252h1v1h-1zM584 252h1v1h-1zM592 252h1v1h-1zM600 252h1v1h-1zM608 252h1v1h-1zM617 252h1v1h-1zM625 252h1v1h-1zM633 252h1v1h-1zM641 252h1v1h-1zM649 252h1v1h-1zM657 252h1v1h-1zM665 252h1v1h-1zM673 252h1v1h-1zM681 252h1v1h-1zM689 252h1v1h-1zM698 252h1v1h-1zM706 252h1v1h-1zM714 252h1v1h-1zM722 252h1v1h-1zM730 252h1v1h-1zM738 252h1v1h-1zM746 252h1v1h-1zM754 252h1v1h-1zM762 252h1v1h-1zM770 252h1v1h-1zM779 252h1v1h-1zM787 252h1v1h-1zM795 252h1v1h-1zM803 252h1v1h-1zM811 252h1v1h-1zM819 252h1v1h-1zM827 252h1v1h-1zM835 252h1v1h-1zM843 252h1v1h-1zM260 260h1v1h-1zM268 260h1v1h-1zM276 260h1v1h-1zM284 260h1v1h-1zM293 260h1v1h-1zM301 260h1v1h-1zM309 260h1v1h-1zM317 260h1v1h-1zM325 260h1v1h-1zM333 260h1v1h-1zM341 260h1v1h-1zM349 260h1v1h-1zM357 260h1v1h-1zM365 260h1v1h-1zM374 260h1v1h-1zM382 260h1v1h-1zM390 260h1v1h-1zM398 260h1v1h-1zM406 260h1v1h-1zM414 260h1v1h-1zM422 260h1v1h-1zM430 260h1v1h-1zM438 260h1v1h-1zM446 260h1v1h-1zM455 260h1v1h-1zM463 260h1v1h-1zM471 260h1v1h-1zM479 260h1v1h-1zM487 260h1v1h-1zM495 260h1v1h-1zM503 260h1v1h-1zM511 260h1v1h-1zM519 260h1v1h-1zM527 260h1v1h-1zM536 260h1v1h-1zM544 260h1v1h-1zM552 260h1v1h-1zM560 260h1v1h-1zM568 260h1v1h-1zM576 260h1v1h-1zM584 260h1v1h-1zM592 260h1v1h-1zM600 260h1v1h-1zM608 260h1v1h-1zM617 260h1v1h-1zM625 260h1v1h-1zM633 260h1v1h-1zM641 260h1v1h-1zM649 260h1v1h-1zM657 260h1v1h-1zM665 260h1v1h-1zM673 260h1v1h-1zM681 260h1v1h-1zM689 260h1v1h-1zM698 260h1v1h-1zM706 260h1v1h-1zM714 260h1v1h-1zM722 260h1v1h-1zM730 260h1v1h-1zM738 260h1v1h-1zM746 260h1v1h-1zM754 260h1v1h-1zM762 260h1v1h-1zM770 260h1v1h-1zM779 260h1v1h-1zM787 260h1v1h-1zM795 260h1v1h-1zM803 260h1v1h-1zM811 260h1v1h-1zM819 260h1v1h-1zM827 260h1v1h-1zM835 260h1v1h-1zM843 260h1v1h-1zM260 268h1v1h-1zM268 268h1v1h-1zM276 268h1v1h-1zM284 268h1v1h-1zM293 268h1v1h-1zM301 268h1v1h-1zM309 268h1v1h-1zM317 268h1v1h-1zM325 268h1v1h-1zM333 268h1v1h-1zM341 268h1v1h-1zM349 268h1v1h-1zM357 268h1v1h-1zM365 268h1v1h-1zM374 268h1v1h-1zM382 268h1v1h-1zM390 268h1v1h-1zM398 268h1v1h-1zM406 268h1v1h-1zM414 268h1v1h-1zM422 268h1v1h-1zM430 268h1v1h-1zM438 268h1v1h-1zM446 268h1v1h-1zM455 268h1v1h-1zM463 268h1v1h-1zM471 268h1v1h-1zM479 268h1v1h-1zM487 268h1v1h-1zM495 268h1v1h-1zM503 268h1v1h-1zM511 268h1v1h-1zM519 268h1v1h-1zM527 268h1v1h-1zM536 268h1v1h-1zM544 268h1v1h-1zM552 268h1v1h-1zM560 268h1v1h-1zM568 268h1v1h-1zM576 268h1v1h-1zM584 268h1v1h-1zM592 268h1v1h-1zM600 268h1v1h-1zM608 268h1v1h-1zM617 268h1v1h-1zM625 268h1v1h-1zM633 268h1v1h-1zM641 268h1v1h-1zM649 268h1v1h-1zM657 268h1v1h-1zM665 268h1v1h-1zM673 268h1v1h-1zM681 268h1v1h-1zM689 268h1v1h-1zM698 268h1v1h-1zM706 268h1v1h-1zM714 268h1v1h-1zM722 268h1v1h-1zM730 268h1v1h-1zM738 268h1v1h-1zM746 268h1v1h-1zM754 268h1v1h-1zM762 268h1v1h-1zM770 268h1v1h-1zM779 268h1v1h-1zM787 268h1v1h-1zM795 268h1v1h-1zM803 268h1v1h-1zM811 268h1v1h-1zM819 268h1v1h-1zM827 268h1v1h-1zM835 268h1v1h-1zM843 268h1v1h-1zM260 277h1v1h-1zM268 277h1v1h-1zM276 277h1v1h-1zM284 277h1v1h-1zM293 277h1v1h-1zM301 277h1v1h-1zM309 277h1v1h-1zM317 277h1v1h-1zM325 277h1v1h-1zM333 277h1v1h-1zM341 277h1v1h-1zM349 277h1v1h-1zM357 277h1v1h-1zM365 277h1v1h-1zM374 277h1v1h-1zM382 277h1v1h-1zM390 277h1v1h-1zM398 277h1v1h-1zM406 277h1v1h-1zM414 277h1v1h-1zM422 277h1v1h-1zM430 277h1v1h-1zM438 277h1v1h-1zM446 277h1v1h-1zM455 277h1v1h-1zM463 277h1v1h-1zM471 277h1v1h-1zM479 277h1v1h-1zM487 277h1v1h-1zM495 277h1v1h-1zM503 277h1v1h-1zM511 277h1v1h-1zM519 277h1v1h-1zM527 277h1v1h-1zM536 277h1v1h-1zM544 277h1v1h-1zM552 277h1v1h-1zM560 277h1v1h-1zM568 277h1v1h-1zM576 277h1v1h-1zM584 277h1v1h-1zM592 277h1v1h-1zM600 277h1v1h-1zM608 277h1v1h-1zM617 277h1v1h-1zM625 277h1v1h-1zM633 277h1v1h-1zM641 277h1v1h-1zM649 277h1v1h-1zM657 277h1v1h-1zM665 277h1v1h-1zM673 277h1v1h-1zM681 277h1v1h-1zM689 277h1v1h-1zM698 277h1v1h-1zM706 277h1v1h-1zM714 277h1v1h-1zM722 277h1v1h-1zM730 277h1v1h-1zM738 277h1v1h-1zM746 277h1v1h-1zM754 277h1v1h-1zM762 277h1v1h-1zM770 277h1v1h-1zM779 277h1v1h-1zM787 277h1v1h-1zM795 277h1v1h-1zM803 277h1v1h-1zM811 277h1v1h-1zM819 277h1v1h-1zM827 277h1v1h-1zM835 277h1v1h-1zM843 277h1v1h-1zM260 285h1v1h-1zM268 285h1v1h-1zM276 285h1v1h-1zM284 285h1v1h-1zM293 285h1v1h-1zM301 285h1v1h-1zM309 285h1v1h-1zM317 285h1v1h-1zM325 285h1v1h-1zM333 285h1v1h-1zM341 285h1v1h-1zM349 285h1v1h-1zM357 285h1v1h-1zM365 285h1v1h-1zM374 285h1v1h-1zM382 285h1v1h-1zM390 285h1v1h-1zM398 285h1v1h-1zM406 285h1v1h-1zM414 285h1v1h-1zM422 285h1v1h-1zM430 285h1v1h-1zM438 285h1v1h-1zM446 285h1v1h-1zM455 285h1v1h-1zM463 285h1v1h-1zM471 285h1v1h-1zM479 285h1v1h-1zM487 285h1v1h-1zM495 285h1v1h-1zM503 285h1v1h-1zM511 285h1v1h-1zM519 285h1v1h-1zM527 285h1v1h-1zM536 285h1v1h-1zM544 285h1v1h-1zM552 285h1v1h-1zM560 285h1v1h-1zM568 285h1v1h-1zM576 285h1v1h-1zM584 285h1v1h-1zM592 285h1v1h-1zM600 285h1v1h-1zM608 285h1v1h-1zM617 285h1v1h-1zM625 285h1v1h-1zM633 285h1v1h-1zM641 285h1v1h-1zM649 285h1v1h-1zM657 285h1v1h-1zM665 285h1v1h-1zM673 285h1v1h-1zM681 285h1v1h-1zM689 285h1v1h-1zM698 285h1v1h-1zM706 285h1v1h-1zM714 285h1v1h-1zM722 285h1v1h-1zM730 285h1v1h-1zM738 285h1v1h-1zM746 285h1v1h-1zM754 285h1v1h-1zM762 285h1v1h-1zM770 285h1v1h-1zM779 285h1v1h-1zM787 285h1v1h-1zM795 285h1v1h-1zM803 285h1v1h-1zM811 285h1v1h-1zM819 285h1v1h-1zM827 285h1v1h-1zM835 285h1v1h-1zM843 285h1v1h-1zM260 293h1v1h-1zM268 293h1v1h-1zM276 293h1v1h-1zM284 293h1v1h-1zM293 293h1v1h-1zM301 293h1v1h-1zM309 293h1v1h-1zM317 293h1v1h-1zM325 293h1v1h-1zM333 293h1v1h-1zM341 293h1v1h-1zM349 293h1v1h-1zM357 293h1v1h-1zM365 293h1v1h-1zM374 293h1v1h-1zM382 293h1v1h-1zM390 293h1v1h-1zM398 293h1v1h-1zM406 293h1v1h-1zM414 293h1v1h-1zM422 293h1v1h-1zM430 293h1v1h-1zM438 293h1v1h-1zM446 293h1v1h-1zM455 293h1v1h-1zM463 293h1v1h-1zM471 293h1v1h-1zM479 293h1v1h-1zM487 293h1v1h-1zM495 293h1v1h-1zM503 293h1v1h-1zM511 293h1v1h-1zM519 293h1v1h-1zM527 293h1v1h-1zM536 293h1v1h-1zM544 293h1v1h-1zM552 293h1v1h-1zM560 293h1v1h-1zM568 293h1v1h-1zM576 293h1v1h-1zM584 293h1v1h-1zM592 293h1v1h-1zM600 293h1v1h-1zM608 293h1v1h-1zM617 293h1v1h-1zM625 293h1v1h-1zM633 293h1v1h-1zM641 293h1v1h-1zM649 293h1v1h-1zM657 293h1v1h-1zM665 293h1v1h-1zM673 293h1v1h-1zM681 293h1v1h-1zM689 293h1v1h-1zM698 293h1v1h-1zM706 293h1v1h-1zM714 293h1v1h-1zM722 293h1v1h-1zM730 293h1v1h-1zM738 293h1v1h-1zM746 293h1v1h-1zM754 293h1v1h-1zM762 293h1v1h-1zM770 293h1v1h-1zM779 293h1v1h-1zM787 293h1v1h-1zM795 293h1v1h-1zM803 293h1v1h-1zM811 293h1v1h-1zM819 293h1v1h-1zM827 293h1v1h-1zM835 293h1v1h-1zM843 293h1v1h-1zM260 301h1v1h-1zM268 301h1v1h-1zM276 301h1v1h-1zM284 301h1v1h-1zM293 301h1v1h-1zM301 301h1v1h-1zM309 301h1v1h-1zM317 301h1v1h-1zM325 301h1v1h-1zM333 301h1v1h-1zM341 301h1v1h-1zM349 301h1v1h-1zM357 301h1v1h-1zM365 301h1v1h-1zM374 301h1v1h-1zM382 301h1v1h-1zM390 301h1v1h-1zM398 301h1v1h-1zM406 301h1v1h-1zM414 301h1v1h-1zM422 301h1v1h-1zM430 301h1v1h-1zM438 301h1v1h-1zM446 301h1v1h-1zM455 301h1v1h-1zM463 301h1v1h-1zM471 301h1v1h-1zM479 301h1v1h-1zM487 301h1v1h-1zM495 301h1v1h-1zM503 301h1v1h-1zM511 301h1v1h-1zM519 301h1v1h-1zM527 301h1v1h-1zM536 301h1v1h-1zM544 301h1v1h-1zM552 301h1v1h-1zM560 301h1v1h-1zM568 301h1v1h-1zM576 301h1v1h-1zM584 301h1v1h-1zM592 301h1v1h-1zM600 301h1v1h-1zM608 301h1v1h-1zM617 301h1v1h-1zM625 301h1v1h-1zM633 301h1v1h-1zM641 301h1v1h-1zM649 301h1v1h-1zM657 301h1v1h-1zM665 301h1v1h-1zM673 301h1v1h-1zM681 301h1v1h-1zM689 301h1v1h-1zM698 301h1v1h-1zM706 301h1v1h-1zM714 301h1v1h-1zM722 301h1v1h-1zM730 301h1v1h-1zM738 301h1v1h-1zM746 301h1v1h-1zM754 301h1v1h-1zM762 301h1v1h-1zM770 301h1v1h-1zM779 301h1v1h-1zM787 301h1v1h-1zM795 301h1v1h-1zM803 301h1v1h-1zM811 301h1v1h-1zM819 301h1v1h-1zM827 301h1v1h-1zM835 301h1v1h-1zM843 301h1v1h-1zM260 309h1v1h-1zM268 309h1v1h-1zM276 309h1v1h-1zM284 309h1v1h-1zM293 309h1v1h-1zM301 309h1v1h-1zM309 309h1v1h-1zM317 309h1v1h-1zM325 309h1v1h-1zM333 309h1v1h-1zM341 309h1v1h-1zM349 309h1v1h-1zM357 309h1v1h-1zM365 309h1v1h-1zM374 309h1v1h-1zM382 309h1v1h-1zM390 309h1v1h-1zM398 309h1v1h-1zM406 309h1v1h-1zM414 309h1v1h-1zM422 309h1v1h-1zM430 309h1v1h-1zM438 309h1v1h-1zM446 309h1v1h-1zM455 309h1v1h-1zM463 309h1v1h-1zM471 309h1v1h-1zM479 309h1v1h-1zM487 309h1v1h-1zM495 309h1v1h-1zM503 309h1v1h-1zM511 309h1v1h-1zM519 309h1v1h-1zM527 309h1v1h-1zM536 309h1v1h-1zM544 309h1v1h-1zM552 309h1v1h-1zM560 309h1v1h-1zM568 309h1v1h-1zM576 309h1v1h-1zM584 309h1v1h-1zM592 309h1v1h-1zM600 309h1v1h-1zM608 309h1v1h-1zM617 309h1v1h-1zM625 309h1v1h-1zM633 309h1v1h-1zM641 309h1v1h-1zM649 309h1v1h-1zM657 309h1v1h-1zM665 309h1v1h-1zM673 309h1v1h-1zM681 309h1v1h-1zM689 309h1v1h-1zM698 309h1v1h-1zM706 309h1v1h-1zM714 309h1v1h-1zM722 309h1v1h-1zM730 309h1v1h-1zM738 309h1v1h-1zM746 309h1v1h-1zM754 309h1v1h-1zM762 309h1v1h-1zM770 309h1v1h-1zM779 309h1v1h-1zM787 309h1v1h-1zM795 309h1v1h-1zM803 309h1v1h-1zM811 309h1v1h-1zM819 309h1v1h-1zM827 309h1v1h-1zM835 309h1v1h-1zM843 309h1v1h-1zM260 317h1v1h-1zM268 317h1v1h-1zM276 317h1v1h-1zM284 317h1v1h-1zM293 317h1v1h-1zM301 317h1v1h-1zM309 317h1v1h-1zM317 317h1v1h-1zM325 317h1v1h-1zM333 317h1v1h-1zM341 317h1v1h-1zM349 317h1v1h-1zM357 317h1v1h-1zM365 317h1v1h-1zM374 317h1v1h-1zM382 317h1v1h-1zM390 317h1v1h-1zM398 317h1v1h-1zM406 317h1v1h-1zM414 317h1v1h-1zM422 317h1v1h-1zM430 317h1v1h-1zM438 317h1v1h-1zM446 317h1v1h-1zM455 317h1v1h-1zM463 317h1v1h-1zM471 317h1v1h-1zM479 317h1v1h-1zM487 317h1v1h-1zM495 317h1v1h-1zM503 317h1v1h-1zM511 317h1v1h-1zM519 317h1v1h-1zM527 317h1v1h-1zM536 317h1v1h-1zM544 317h1v1h-1zM552 317h1v1h-1zM560 317h1v1h-1zM568 317h1v1h-1zM576 317h1v1h-1zM584 317h1v1h-1zM592 317h1v1h-1zM600 317h1v1h-1zM608 317h1v1h-1zM617 317h1v1h-1zM625 317h1v1h-1zM633 317h1v1h-1zM641 317h1v1h-1zM649 317h1v1h-1zM657 317h1v1h-1zM665 317h1v1h-1zM673 317h1v1h-1zM681 317h1v1h-1zM689 317h1v1h-1zM698 317h1v1h-1zM706 317h1v1h-1zM714 317h1v1h-1zM722 317h1v1h-1zM730 317h1v1h-1zM738 317h1v1h-1zM746 317h1v1h-1zM754 317h1v1h-1zM762 317h1v1h-1zM770 317h1v1h-1zM779 317h1v1h-1zM787 317h1v1h-1zM795 317h1v1h-1zM803 317h1v1h-1zM811 317h1v1h-1zM819 317h1v1h-1zM827 317h1v1h-1zM835 317h1v1h-1zM843 317h1v1h-1zM260 325h1v1h-1zM268 325h1v1h-1zM276 325h1v1h-1zM284 325h1v1h-1zM293 325h1v1h-1zM301 325h1v1h-1zM309 325h1v1h-1zM317 325h1v1h-1zM325 325h1v1h-1zM333 325h1v1h-1zM341 325h1v1h-1zM349 325h1v1h-1zM357 325h1v1h-1zM365 325h1v1h-1zM374 325h1v1h-1zM382 325h1v1h-1zM390 325h1v1h-1zM398 325h1v1h-1zM406 325h1v1h-1zM414 325h1v1h-1zM422 325h1v1h-1zM430 325h1v1h-1zM438 325h1v1h-1zM446 325h1v1h-1zM455 325h1v1h-1zM463 325h1v1h-1zM471 325h1v1h-1zM479 325h1v1h-1zM487 325h1v1h-1zM495 325h1v1h-1zM503 325h1v1h-1zM511 325h1v1h-1zM519 325h1v1h-1zM527 325h1v1h-1zM536 325h1v1h-1zM544 325h1v1h-1zM552 325h1v1h-1zM560 325h1v1h-1zM568 325h1v1h-1zM576 325h1v1h-1zM584 325h1v1h-1zM592 325h1v1h-1zM600 325h1v1h-1zM608 325h1v1h-1zM617 325h1v1h-1zM625 325h1v1h-1zM633 325h1v1h-1zM641 325h1v1h-1zM649 325h1v1h-1zM657 325h1v1h-1zM665 325h1v1h-1zM673 325h1v1h-1zM681 325h1v1h-1zM689 325h1v1h-1zM698 325h1v1h-1zM706 325h1v1h-1zM714 325h1v1h-1zM722 325h1v1h-1zM730 325h1v1h-1zM738 325h1v1h-1zM746 325h1v1h-1zM754 325h1v1h-1zM762 325h1v1h-1zM770 325h1v1h-1zM779 325h1v1h-1zM787 325h1v1h-1zM795 325h1v1h-1zM803 325h1v1h-1zM811 325h1v1h-1zM819 325h1v1h-1zM827 325h1v1h-1zM835 325h1v1h-1zM843 325h1v1h-1zM260 333h1v1h-1zM268 333h1v1h-1zM276 333h1v1h-1zM284 333h1v1h-1zM293 333h1v1h-1zM301 333h1v1h-1zM309 333h1v1h-1zM317 333h1v1h-1zM325 333h1v1h-1zM333 333h1v1h-1zM341 333h1v1h-1zM349 333h1v1h-1zM357 333h1v1h-1zM365 333h1v1h-1zM374 333h1v1h-1zM382 333h1v1h-1zM390 333h1v1h-1zM398 333h1v1h-1zM406 333h1v1h-1zM414 333h1v1h-1zM422 333h1v1h-1zM430 333h1v1h-1zM438 333h1v1h-1zM446 333h1v1h-1zM455 333h1v1h-1zM463 333h1v1h-1zM471 333h1v1h-1zM479 333h1v1h-1zM487 333h1v1h-1zM495 333h1v1h-1zM503 333h1v1h-1zM511 333h1v1h-1zM519 333h1v1h-1zM527 333h1v1h-1zM536 333h1v1h-1zM544 333h1v1h-1zM552 333h1v1h-1zM560 333h1v1h-1zM568 333h1v1h-1zM576 333h1v1h-1zM584 333h1v1h-1zM592 333h1v1h-1zM600 333h1v1h-1zM608 333h1v1h-1zM617 333h1v1h-1zM625 333h1v1h-1zM633 333h1v1h-1zM641 333h1v1h-1zM649 333h1v1h-1zM657 333h1v1h-1zM665 333h1v1h-1zM673 333h1v1h-1zM681 333h1v1h-1zM689 333h1v1h-1zM698 333h1v1h-1zM706 333h1v1h-1zM714 333h1v1h-1zM722 333h1v1h-1zM730 333h1v1h-1zM738 333h1v1h-1zM746 333h1v1h-1zM754 333h1v1h-1zM762 333h1v1h-1zM770 333h1v1h-1zM779 333h1v1h-1zM787 333h1v1h-1zM795 333h1v1h-1zM803 333h1v1h-1zM811 333h1v1h-1zM819 333h1v1h-1zM827 333h1v1h-1zM835 333h1v1h-1zM843 333h1v1h-1zM260 341h1v1h-1zM268 341h1v1h-1zM276 341h1v1h-1zM284 341h1v1h-1zM293 341h1v1h-1zM301 341h1v1h-1zM309 341h1v1h-1zM317 341h1v1h-1zM325 341h1v1h-1zM333 341h1v1h-1zM341 341h1v1h-1zM349 341h1v1h-1zM357 341h1v1h-1zM365 341h1v1h-1zM374 341h1v1h-1zM382 341h1v1h-1zM390 341h1v1h-1zM398 341h1v1h-1zM406 341h1v1h-1zM414 341h1v1h-1zM422 341h1v1h-1zM430 341h1v1h-1zM438 341h1v1h-1zM446 341h1v1h-1zM455 341h1v1h-1zM463 341h1v1h-1zM471 341h1v1h-1zM479 341h1v1h-1zM487 341h1v1h-1zM495 341h1v1h-1zM503 341h1v1h-1zM511 341h1v1h-1zM519 341h1v1h-1zM527 341h1v1h-1zM536 341h1v1h-1zM544 341h1v1h-1zM552 341h1v1h-1zM560 341h1v1h-1zM568 341h1v1h-1zM576 341h1v1h-1zM584 341h1v1h-1zM592 341h1v1h-1zM600 341h1v1h-1zM608 341h1v1h-1zM617 341h1v1h-1zM625 341h1v1h-1zM633 341h1v1h-1zM641 341h1v1h-1zM649 341h1v1h-1zM657 341h1v1h-1zM665 341h1v1h-1zM673 341h1v1h-1zM681 341h1v1h-1zM689 341h1v1h-1zM698 341h1v1h-1zM706 341h1v1h-1zM714 341h1v1h-1zM722 341h1v1h-1zM730 341h1v1h-1zM738 341h1v1h-1zM746 341h1v1h-1zM754 341h1v1h-1zM762 341h1v1h-1zM770 341h1v1h-1zM779 341h1v1h-1zM787 341h1v1h-1zM795 341h1v1h-1zM803 341h1v1h-1zM811 341h1v1h-1zM819 341h1v1h-1zM827 341h1v1h-1zM835 341h1v1h-1zM843 341h1v1h-1zM260 349h1v1h-1zM268 349h1v1h-1zM276 349h1v1h-1zM284 349h1v1h-1zM293 349h1v1h-1zM301 349h1v1h-1zM309 349h1v1h-1zM317 349h1v1h-1zM325 349h1v1h-1zM333 349h1v1h-1zM341 349h1v1h-1zM349 349h1v1h-1zM357 349h1v1h-1zM365 349h1v1h-1zM374 349h1v1h-1zM382 349h1v1h-1zM390 349h1v1h-1zM398 349h1v1h-1zM406 349h1v1h-1zM414 349h1v1h-1zM422 349h1v1h-1zM430 349h1v1h-1zM438 349h1v1h-1zM446 349h1v1h-1zM455 349h1v1h-1zM463 349h1v1h-1zM471 349h1v1h-1zM479 349h1v1h-1zM487 349h1v1h-1zM495 349h1v1h-1zM503 349h1v1h-1zM511 349h1v1h-1zM519 349h1v1h-1zM527 349h1v1h-1zM536 349h1v1h-1zM544 349h1v1h-1zM552 349h1v1h-1zM560 349h1v1h-1zM568 349h1v1h-1zM576 349h1v1h-1zM584 349h1v1h-1zM592 349h1v1h-1zM600 349h1v1h-1zM608 349h1v1h-1zM617 349h1v1h-1zM625 349h1v1h-1zM633 349h1v1h-1zM641 349h1v1h-1zM649 349h1v1h-1zM657 349h1v1h-1zM665 349h1v1h-1zM673 349h1v1h-1zM681 349h1v1h-1zM689 349h1v1h-1zM698 349h1v1h-1zM706 349h1v1h-1zM714 349h1v1h-1zM722 349h1v1h-1zM730 349h1v1h-1zM738 349h1v1h-1zM746 349h1v1h-1zM754 349h1v1h-1zM762 349h1v1h-1zM770 349h1v1h-1zM779 349h1v1h-1zM787 349h1v1h-1zM795 349h1v1h-1zM803 349h1v1h-1zM811 349h1v1h-1zM819 349h1v1h-1zM827 349h1v1h-1zM835 349h1v1h-1zM843 349h1v1h-1zM260 358h1v1h-1zM268 358h1v1h-1zM276 358h1v1h-1zM284 358h1v1h-1zM293 358h1v1h-1zM301 358h1v1h-1zM309 358h1v1h-1zM317 358h1v1h-1zM325 358h1v1h-1zM333 358h1v1h-1zM341 358h1v1h-1zM349 358h1v1h-1zM357 358h1v1h-1zM365 358h1v1h-1zM374 358h1v1h-1zM382 358h1v1h-1zM390 358h1v1h-1zM398 358h1v1h-1zM406 358h1v1h-1zM414 358h1v1h-1zM422 358h1v1h-1zM430 358h1v1h-1zM438 358h1v1h-1zM446 358h1v1h-1zM455 358h1v1h-1zM463 358h1v1h-1zM471 358h1v1h-1zM479 358h1v1h-1zM487 358h1v1h-1zM495 358h1v1h-1zM503 358h1v1h-1zM511 358h1v1h-1zM519 358h1v1h-1zM527 358h1v1h-1zM536 358h1v1h-1zM544 358h1v1h-1zM552 358h1v1h-1zM560 358h1v1h-1zM568 358h1v1h-1zM576 358h1v1h-1zM584 358h1v1h-1zM592 358h1v1h-1zM600 358h1v1h-1zM608 358h1v1h-1zM617 358h1v1h-1zM625 358h1v1h-1zM633 358h1v1h-1zM641 358h1v1h-1zM649 358h1v1h-1zM657 358h1v1h-1zM665 358h1v1h-1zM673 358h1v1h-1zM681 358h1v1h-1zM689 358h1v1h-1zM698 358h1v1h-1zM706 358h1v1h-1zM714 358h1v1h-1zM722 358h1v1h-1zM730 358h1v1h-1zM738 358h1v1h-1zM746 358h1v1h-1zM754 358h1v1h-1zM762 358h1v1h-1zM770 358h1v1h-1zM779 358h1v1h-1zM787 358h1v1h-1zM795 358h1v1h-1zM803 358h1v1h-1zM811 358h1v1h-1zM819 358h1v1h-1zM827 358h1v1h-1zM835 358h1v1h-1zM843 358h1v1h-1zM260 366h1v1h-1zM268 366h1v1h-1zM276 366h1v1h-1zM284 366h1v1h-1zM293 366h1v1h-1zM301 366h1v1h-1zM309 366h1v1h-1zM317 366h1v1h-1zM325 366h1v1h-1zM333 366h1v1h-1zM341 366h1v1h-1zM349 366h1v1h-1zM357 366h1v1h-1zM365 366h1v1h-1zM374 366h1v1h-1zM382 366h1v1h-1zM390 366h1v1h-1zM398 366h1v1h-1zM406 366h1v1h-1zM414 366h1v1h-1zM422 366h1v1h-1zM430 366h1v1h-1zM438 366h1v1h-1zM446 366h1v1h-1zM455 366h1v1h-1zM463 366h1v1h-1zM471 366h1v1h-1zM479 366h1v1h-1zM487 366h1v1h-1zM495 366h1v1h-1zM503 366h1v1h-1zM511 366h1v1h-1zM519 366h1v1h-1zM527 366h1v1h-1zM536 366h1v1h-1zM544 366h1v1h-1zM552 366h1v1h-1zM560 366h1v1h-1zM568 366h1v1h-1zM576 366h1v1h-1zM584 366h1v1h-1zM592 366h1v1h-1zM600 366h1v1h-1zM608 366h1v1h-1zM617 366h1v1h-1zM625 366h1v1h-1zM633 366h1v1h-1zM641 366h1v1h-1zM649 366h1v1h-1zM657 366h1v1h-1zM665 366h1v1h-1zM673 366h1v1h-1zM681 366h1v1h-1zM689 366h1v1h-1zM698 366h1v1h-1zM706 366h1v1h-1zM714 366h1v1h-1zM722 366h1v1h-1zM730 366h1v1h-1zM738 366h1v1h-1zM746 366h1v1h-1zM754 366h1v1h-1zM762 366h1v1h-1zM770 366h1v1h-1zM779 366h1v1h-1zM787 366h1v1h-1zM795 366h1v1h-1zM803 366h1v1h-1zM811 366h1v1h-1zM819 366h1v1h-1zM827 366h1v1h-1zM835 366h1v1h-1zM843 366h1v1h-1zM260 374h1v1h-1zM268 374h1v1h-1zM276 374h1v1h-1zM284 374h1v1h-1zM293 374h1v1h-1zM301 374h1v1h-1zM309 374h1v1h-1zM317 374h1v1h-1zM325 374h1v1h-1zM333 374h1v1h-1zM341 374h1v1h-1zM349 374h1v1h-1zM357 374h1v1h-1zM365 374h1v1h-1zM374 374h1v1h-1zM382 374h1v1h-1zM390 374h1v1h-1zM398 374h1v1h-1zM406 374h1v1h-1zM414 374h1v1h-1zM422 374h1v1h-1zM430 374h1v1h-1zM438 374h1v1h-1zM446 374h1v1h-1zM455 374h1v1h-1zM463 374h1v1h-1zM471 374h1v1h-1zM479 374h1v1h-1zM487 374h1v1h-1zM495 374h1v1h-1zM503 374h1v1h-1zM511 374h1v1h-1zM519 374h1v1h-1zM527 374h1v1h-1zM536 374h1v1h-1zM544 374h1v1h-1zM552 374h1v1h-1zM560 374h1v1h-1zM568 374h1v1h-1zM576 374h1v1h-1zM584 374h1v1h-1zM592 374h1v1h-1zM600 374h1v1h-1zM608 374h1v1h-1zM617 374h1v1h-1zM625 374h1v1h-1zM633 374h1v1h-1zM641 374h1v1h-1zM649 374h1v1h-1zM657 374h1v1h-1zM665 374h1v1h-1zM673 374h1v1h-1zM681 374h1v1h-1zM689 374h1v1h-1zM698 374h1v1h-1zM706 374h1v1h-1zM714 374h1v1h-1zM722 374h1v1h-1zM730 374h1v1h-1zM738 374h1v1h-1zM746 374h1v1h-1zM754 374h1v1h-1zM762 374h1v1h-1zM770 374h1v1h-1zM779 374h1v1h-1zM787 374h1v1h-1zM795 374h1v1h-1zM803 374h1v1h-1zM811 374h1v1h-1zM819 374h1v1h-1zM827 374h1v1h-1zM835 374h1v1h-1zM843 374h1v1h-1zM260 382h1v1h-1zM268 382h1v1h-1zM276 382h1v1h-1zM284 382h1v1h-1zM293 382h1v1h-1zM301 382h1v1h-1zM309 382h1v1h-1zM317 382h1v1h-1zM325 382h1v1h-1zM333 382h1v1h-1zM341 382h1v1h-1zM349 382h1v1h-1zM357 382h1v1h-1zM365 382h1v1h-1zM374 382h1v1h-1zM382 382h1v1h-1zM390 382h1v1h-1zM398 382h1v1h-1zM406 382h1v1h-1zM414 382h1v1h-1zM422 382h1v1h-1zM430 382h1v1h-1zM438 382h1v1h-1zM446 382h1v1h-1zM455 382h1v1h-1zM463 382h1v1h-1zM471 382h1v1h-1zM479 382h1v1h-1zM487 382h1v1h-1zM495 382h1v1h-1zM503 382h1v1h-1zM511 382h1v1h-1zM519 382h1v1h-1zM527 382h1v1h-1zM536 382h1v1h-1zM544 382h1v1h-1zM552 382h1v1h-1zM560 382h1v1h-1zM568 382h1v1h-1zM576 382h1v1h-1zM584 382h1v1h-1zM592 382h1v1h-1zM600 382h1v1h-1zM608 382h1v1h-1zM617 382h1v1h-1zM625 382h1v1h-1zM633 382h1v1h-1zM641 382h1v1h-1zM649 382h1v1h-1zM657 382h1v1h-1zM665 382h1v1h-1zM673 382h1v1h-1zM681 382h1v1h-1zM689 382h1v1h-1zM698 382h1v1h-1zM706 382h1v1h-1zM714 382h1v1h-1zM722 382h1v1h-1zM730 382h1v1h-1zM738 382h1v1h-1zM746 382h1v1h-1zM754 382h1v1h-1zM762 382h1v1h-1zM770 382h1v1h-1zM779 382h1v1h-1zM787 382h1v1h-1zM795 382h1v1h-1zM803 382h1v1h-1zM811 382h1v1h-1zM819 382h1v1h-1zM827 382h1v1h-1zM835 382h1v1h-1zM843 382h1v1h-1zM260 390h1v1h-1zM268 390h1v1h-1zM276 390h1v1h-1zM284 390h1v1h-1zM293 390h1v1h-1zM301 390h1v1h-1zM309 390h1v1h-1zM317 390h1v1h-1zM325 390h1v1h-1zM333 390h1v1h-1zM341 390h1v1h-1zM349 390h1v1h-1zM357 390h1v1h-1zM365 390h1v1h-1zM374 390h1v1h-1zM382 390h1v1h-1zM390 390h1v1h-1zM398 390h1v1h-1zM406 390h1v1h-1zM414 390h1v1h-1zM422 390h1v1h-1zM430 390h1v1h-1zM438 390h1v1h-1zM446 390h1v1h-1zM455 390h1v1h-1zM463 390h1v1h-1zM471 390h1v1h-1zM479 390h1v1h-1zM487 390h1v1h-1zM495 390h1v1h-1zM503 390h1v1h-1zM511 390h1v1h-1zM519 390h1v1h-1zM527 390h1v1h-1zM536 390h1v1h-1zM544 390h1v1h-1zM552 390h1v1h-1zM560 390h1v1h-1zM568 390h1v1h-1zM576 390h1v1h-1zM584 390h1v1h-1zM592 390h1v1h-1zM600 390h1v1h-1zM608 390h1v1h-1zM617 390h1v1h-1zM625 390h1v1h-1zM633 390h1v1h-1zM641 390h1v1h-1zM649 390h1v1h-1zM657 390h1v1h-1zM665 390h1v1h-1zM673 390h1v1h-1zM681 390h1v1h-1zM689 390h1v1h-1zM698 390h1v1h-1zM706 390h1v1h-1zM714 390h1v1h-1zM722 390h1v1h-1zM730 390h1v1h-1zM738 390h1v1h-1zM746 390h1v1h-1zM754 390h1v1h-1zM762 390h1v1h-1zM770 390h1v1h-1zM779 390h1v1h-1zM787 390h1v1h-1zM795 390h1v1h-1zM803 390h1v1h-1zM811 390h1v1h-1zM819 390h1v1h-1zM827 390h1v1h-1zM835 390h1v1h-1zM843 390h1v1h-1zM260 398h1v1h-1zM268 398h1v1h-1zM276 398h1v1h-1zM284 398h1v1h-1zM293 398h1v1h-1zM301 398h1v1h-1zM309 398h1v1h-1zM317 398h1v1h-1zM325 398h1v1h-1zM333 398h1v1h-1zM341 398h1v1h-1zM349 398h1v1h-1zM357 398h1v1h-1zM365 398h1v1h-1zM374 398h1v1h-1zM382 398h1v1h-1zM390 398h1v1h-1zM398 398h1v1h-1zM406 398h1v1h-1zM414 398h1v1h-1zM422 398h1v1h-1zM430 398h1v1h-1zM438 398h1v1h-1zM446 398h1v1h-1zM455 398h1v1h-1zM463 398h1v1h-1zM471 398h1v1h-1zM479 398h1v1h-1zM487 398h1v1h-1zM495 398h1v1h-1zM503 398h1v1h-1zM511 398h1v1h-1zM519 398h1v1h-1zM527 398h1v1h-1zM536 398h1v1h-1zM544 398h1v1h-1zM552 398h1v1h-1zM560 398h1v1h-1zM568 398h1v1h-1zM576 398h1v1h-1zM584 398h1v1h-1zM592 398h1v1h-1zM600 398h1v1h-1zM608 398h1v1h-1zM617 398h1v1h-1zM625 398h1v1h-1zM633 398h1v1h-1zM641 398h1v1h-1zM649 398h1v1h-1zM657 398h1v1h-1zM665 398h1v1h-1zM673 398h1v1h-1zM681 398h1v1h-1zM689 398h1v1h-1zM698 398h1v1h-1zM706 398h1v1h-1zM714 398h1v1h-1zM722 398h1v1h-1zM730 398h1v1h-1zM738 398h1v1h-1zM746 398h1v1h-1zM754 398h1v1h-1zM762 398h1v1h-1zM770 398h1v1h-1zM779 398h1v1h-1zM787 398h1v1h-1zM795 398h1v1h-1zM803 398h1v1h-1zM811 398h1v1h-1zM819 398h1v1h-1zM827 398h1v1h-1zM835 398h1v1h-1zM843 398h1v1h-1zM260 406h1v1h-1zM268 406h1v1h-1zM276 406h1v1h-1zM284 406h1v1h-1zM293 406h1v1h-1zM301 406h1v1h-1zM309 406h1v1h-1zM317 406h1v1h-1zM325 406h1v1h-1zM333 406h1v1h-1zM341 406h1v1h-1zM349 406h1v1h-1zM357 406h1v1h-1zM365 406h1v1h-1zM374 406h1v1h-1zM382 406h1v1h-1zM390 406h1v1h-1zM398 406h1v1h-1zM406 406h1v1h-1zM414 406h1v1h-1zM422 406h1v1h-1zM430 406h1v1h-1zM438 406h1v1h-1zM446 406h1v1h-1zM455 406h1v1h-1zM463 406h1v1h-1zM471 406h1v1h-1zM479 406h1v1h-1zM487 406h1v1h-1zM495 406h1v1h-1zM503 406h1v1h-1zM511 406h1v1h-1zM519 406h1v1h-1zM527 406h1v1h-1zM536 406h1v1h-1zM544 406h1v1h-1zM552 406h1v1h-1zM560 406h1v1h-1zM568 406h1v1h-1zM576 406h1v1h-1zM584 406h1v1h-1zM592 406h1v1h-1zM600 406h1v1h-1zM608 406h1v1h-1zM617 406h1v1h-1zM625 406h1v1h-1zM633 406h1v1h-1zM641 406h1v1h-1zM649 406h1v1h-1zM657 406h1v1h-1zM665 406h1v1h-1zM673 406h1v1h-1zM681 406h1v1h-1zM689 406h1v1h-1zM698 406h1v1h-1zM706 406h1v1h-1zM714 406h1v1h-1zM722 406h1v1h-1zM730 406h1v1h-1zM738 406h1v1h-1zM746 406h1v1h-1zM754 406h1v1h-1zM762 406h1v1h-1zM770 406h1v1h-1zM779 406h1v1h-1zM787 406h1v1h-1zM795 406h1v1h-1zM803 406h1v1h-1zM811 406h1v1h-1zM819 406h1v1h-1zM827 406h1v1h-1zM835 406h1v1h-1zM843 406h1v1h-1zM260 414h1v1h-1zM268 414h1v1h-1zM276 414h1v1h-1zM284 414h1v1h-1zM293 414h1v1h-1zM301 414h1v1h-1zM309 414h1v1h-1zM317 414h1v1h-1zM325 414h1v1h-1zM333 414h1v1h-1zM341 414h1v1h-1zM349 414h1v1h-1zM357 414h1v1h-1zM365 414h1v1h-1zM374 414h1v1h-1zM382 414h1v1h-1zM390 414h1v1h-1zM398 414h1v1h-1zM406 414h1v1h-1zM414 414h1v1h-1zM422 414h1v1h-1zM430 414h1v1h-1zM438 414h1v1h-1zM446 414h1v1h-1zM455 414h1v1h-1zM463 414h1v1h-1zM471 414h1v1h-1zM479 414h1v1h-1zM487 414h1v1h-1zM495 414h1v1h-1zM503 414h1v1h-1zM511 414h1v1h-1zM519 414h1v1h-1zM527 414h1v1h-1zM536 414h1v1h-1zM544 414h1v1h-1zM552 414h1v1h-1zM560 414h1v1h-1zM568 414h1v1h-1zM576 414h1v1h-1zM584 414h1v1h-1zM592 414h1v1h-1zM600 414h1v1h-1zM608 414h1v1h-1zM617 414h1v1h-1zM625 414h1v1h-1zM633 414h1v1h-1zM641 414h1v1h-1zM649 414h1v1h-1zM657 414h1v1h-1zM665 414h1v1h-1zM673 414h1v1h-1zM681 414h1v1h-1zM689 414h1v1h-1zM698 414h1v1h-1zM706 414h1v1h-1zM714 414h1v1h-1zM722 414h1v1h-1zM730 414h1v1h-1zM738 414h1v1h-1zM746 414h1v1h-1zM754 414h1v1h-1zM762 414h1v1h-1zM770 414h1v1h-1zM779 414h1v1h-1zM787 414h1v1h-1zM795 414h1v1h-1zM803 414h1v1h-1zM811 414h1v1h-1zM819 414h1v1h-1zM827 414h1v1h-1zM835 414h1v1h-1zM843 414h1v1h-1zM260 422h1v1h-1zM268 422h1v1h-1zM276 422h1v1h-1zM284 422h1v1h-1zM293 422h1v1h-1zM301 422h1v1h-1zM309 422h1v1h-1zM317 422h1v1h-1zM325 422h1v1h-1zM333 422h1v1h-1zM341 422h1v1h-1zM349 422h1v1h-1zM357 422h1v1h-1zM365 422h1v1h-1zM374 422h1v1h-1zM382 422h1v1h-1zM390 422h1v1h-1zM398 422h1v1h-1zM406 422h1v1h-1zM414 422h1v1h-1zM422 422h1v1h-1zM430 422h1v1h-1zM438 422h1v1h-1zM446 422h1v1h-1zM455 422h1v1h-1zM463 422h1v1h-1zM471 422h1v1h-1zM479 422h1v1h-1zM487 422h1v1h-1zM495 422h1v1h-1zM503 422h1v1h-1zM511 422h1v1h-1zM519 422h1v1h-1zM527 422h1v1h-1zM536 422h1v1h-1zM544 422h1v1h-1zM552 422h1v1h-1zM560 422h1v1h-1zM568 422h1v1h-1zM576 422h1v1h-1zM584 422h1v1h-1zM592 422h1v1h-1zM600 422h1v1h-1zM608 422h1v1h-1zM617 422h1v1h-1zM625 422h1v1h-1zM633 422h1v1h-1zM641 422h1v1h-1zM649 422h1v1h-1zM657 422h1v1h-1zM665 422h1v1h-1zM673 422h1v1h-1zM681 422h1v1h-1zM689 422h1v1h-1zM698 422h1v1h-1zM706 422h1v1h-1zM714 422h1v1h-1zM722 422h1v1h-1zM730 422h1v1h-1zM738 422h1v1h-1zM746 422h1v1h-1zM754 422h1v1h-1zM762 422h1v1h-1zM770 422h1v1h-1zM779 422h1v1h-1zM787 422h1v1h-1zM795 422h1v1h-1zM803 422h1v1h-1zM811 422h1v1h-1zM819 422h1v1h-1zM827 422h1v1h-1zM835 422h1v1h-1zM843 422h1v1h-1zM260 430h1v1h-1zM268 430h1v1h-1zM276 430h1v1h-1zM284 430h1v1h-1zM293 430h1v1h-1zM301 430h1v1h-1zM309 430h1v1h-1zM317 430h1v1h-1zM325 430h1v1h-1zM333 430h1v1h-1zM341 430h1v1h-1zM349 430h1v1h-1zM357 430h1v1h-1zM365 430h1v1h-1zM374 430h1v1h-1zM382 430h1v1h-1zM390 430h1v1h-1zM398 430h1v1h-1zM406 430h1v1h-1zM414 430h1v1h-1zM422 430h1v1h-1zM430 430h1v1h-1zM438 430h1v1h-1zM446 430h1v1h-1zM455 430h1v1h-1zM463 430h1v1h-1zM471 430h1v1h-1zM479 430h1v1h-1zM487 430h1v1h-1zM495 430h1v1h-1zM503 430h1v1h-1zM511 430h1v1h-1zM519 430h1v1h-1zM527 430h1v1h-1zM536 430h1v1h-1zM544 430h1v1h-1zM552 430h1v1h-1zM560 430h1v1h-1zM568 430h1v1h-1zM576 430h1v1h-1zM584 430h1v1h-1zM592 430h1v1h-1zM600 430h1v1h-1zM608 430h1v1h-1zM617 430h1v1h-1zM625 430h1v1h-1zM633 430h1v1h-1zM641 430h1v1h-1zM649 430h1v1h-1zM657 430h1v1h-1zM665 430h1v1h-1zM673 430h1v1h-1zM681 430h1v1h-1zM689 430h1v1h-1zM698 430h1v1h-1zM706 430h1v1h-1zM714 430h1v1h-1zM722 430h1v1h-1zM730 430h1v1h-1zM738 430h1v1h-1zM746 430h1v1h-1zM754 430h1v1h-1zM762 430h1v1h-1zM770 430h1v1h-1zM779 430h1v1h-1zM787 430h1v1h-1zM795 430h1v1h-1zM803 430h1v1h-1zM811 430h1v1h-1zM819 430h1v1h-1zM827 430h1v1h-1zM835 430h1v1h-1zM843 430h1v1h-1zM260 439h1v1h-1zM268 439h1v1h-1zM276 439h1v1h-1zM284 439h1v1h-1zM293 439h1v1h-1zM301 439h1v1h-1zM309 439h1v1h-1zM317 439h1v1h-1zM325 439h1v1h-1zM333 439h1v1h-1zM341 439h1v1h-1zM349 439h1v1h-1zM357 439h1v1h-1zM365 439h1v1h-1zM374 439h1v1h-1zM382 439h1v1h-1zM390 439h1v1h-1zM398 439h1v1h-1zM406 439h1v1h-1zM414 439h1v1h-1zM422 439h1v1h-1zM430 439h1v1h-1zM438 439h1v1h-1zM446 439h1v1h-1zM455 439h1v1h-1zM463 439h1v1h-1zM471 439h1v1h-1zM479 439h1v1h-1zM487 439h1v1h-1zM495 439h1v1h-1zM503 439h1v1h-1zM511 439h1v1h-1zM519 439h1v1h-1zM527 439h1v1h-1zM536 439h1v1h-1zM544 439h1v1h-1zM552 439h1v1h-1zM560 439h1v1h-1zM568 439h1v1h-1zM576 439h1v1h-1zM584 439h1v1h-1zM592 439h1v1h-1zM600 439h1v1h-1zM608 439h1v1h-1zM617 439h1v1h-1zM625 439h1v1h-1zM633 439h1v1h-1zM641 439h1v1h-1zM649 439h1v1h-1zM657 439h1v1h-1zM665 439h1v1h-1zM673 439h1v1h-1zM681 439h1v1h-1zM689 439h1v1h-1zM698 439h1v1h-1zM706 439h1v1h-1zM714 439h1v1h-1zM722 439h1v1h-1zM730 439h1v1h-1zM738 439h1v1h-1zM746 439h1v1h-1zM754 439h1v1h-1zM762 439h1v1h-1zM770 439h1v1h-1zM779 439h1v1h-1zM787 439h1v1h-1zM795 439h1v1h-1zM803 439h1v1h-1zM811 439h1v1h-1zM819 439h1v1h-1zM827 439h1v1h-1zM835 439h1v1h-1zM843 439h1v1h-1zM260 447h1v1h-1zM268 447h1v1h-1zM276 447h1v1h-1zM284 447h1v1h-1zM293 447h1v1h-1zM301 447h1v1h-1zM309 447h1v1h-1zM317 447h1v1h-1zM325 447h1v1h-1zM333 447h1v1h-1zM341 447h1v1h-1zM349 447h1v1h-1zM357 447h1v1h-1zM365 447h1v1h-1zM374 447h1v1h-1zM382 447h1v1h-1zM390 447h1v1h-1zM398 447h1v1h-1zM406 447h1v1h-1zM414 447h1v1h-1zM422 447h1v1h-1zM430 447h1v1h-1zM438 447h1v1h-1zM446 447h1v1h-1zM455 447h1v1h-1zM463 447h1v1h-1zM471 447h1v1h-1zM479 447h1v1h-1zM487 447h1v1h-1zM495 447h1v1h-1zM503 447h1v1h-1zM511 447h1v1h-1zM519 447h1v1h-1zM527 447h1v1h-1zM536 447h1v1h-1zM544 447h1v1h-1zM552 447h1v1h-1zM560 447h1v1h-1zM568 447h1v1h-1zM576 447h1v1h-1zM584 447h1v1h-1zM592 447h1v1h-1zM600 447h1v1h-1zM608 447h1v1h-1zM617 447h1v1h-1zM625 447h1v1h-1zM633 447h1v1h-1zM641 447h1v1h-1zM649 447h1v1h-1zM657 447h1v1h-1zM665 447h1v1h-1zM673 447h1v1h-1zM681 447h1v1h-1zM689 447h1v1h-1zM698 447h1v1h-1zM706 447h1v1h-1zM714 447h1v1h-1zM722 447h1v1h-1zM730 447h1v1h-1zM738 447h1v1h-1zM746 447h1v1h-1zM754 447h1v1h-1zM762 447h1v1h-1zM770 447h1v1h-1zM779 447h1v1h-1zM787 447h1v1h-1zM795 447h1v1h-1zM803 447h1v1h-1zM811 447h1v1h-1zM819 447h1v1h-1zM827 447h1v1h-1zM835 447h1v1h-1zM843 447h1v1h-1zM260 455h1v1h-1zM268 455h1v1h-1zM276 455h1v1h-1zM284 455h1v1h-1zM293 455h1v1h-1zM301 455h1v1h-1zM309 455h1v1h-1zM317 455h1v1h-1zM325 455h1v1h-1zM333 455h1v1h-1zM341 455h1v1h-1zM349 455h1v1h-1zM357 455h1v1h-1zM365 455h1v1h-1zM374 455h1v1h-1zM382 455h1v1h-1zM390 455h1v1h-1zM398 455h1v1h-1zM406 455h1v1h-1zM414 455h1v1h-1zM422 455h1v1h-1zM430 455h1v1h-1zM438 455h1v1h-1zM446 455h1v1h-1zM455 455h1v1h-1zM463 455h1v1h-1zM471 455h1v1h-1zM479 455h1v1h-1zM487 455h1v1h-1zM495 455h1v1h-1zM503 455h1v1h-1zM511 455h1v1h-1zM519 455h1v1h-1zM527 455h1v1h-1zM536 455h1v1h-1zM544 455h1v1h-1zM552 455h1v1h-1zM560 455h1v1h-1zM568 455h1v1h-1zM576 455h1v1h-1zM584 455h1v1h-1zM592 455h1v1h-1zM600 455h1v1h-1zM608 455h1v1h-1zM617 455h1v1h-1zM625 455h1v1h-1zM633 455h1v1h-1zM641 455h1v1h-1zM649 455h1v1h-1zM657 455h1v1h-1zM665 455h1v1h-1zM673 455h1v1h-1zM681 455h1v1h-1zM689 455h1v1h-1zM698 455h1v1h-1zM706 455h1v1h-1zM714 455h1v1h-1zM722 455h1v1h-1zM730 455h1v1h-1zM738 455h1v1h-1zM746 455h1v1h-1zM754 455h1v1h-1zM762 455h1v1h-1zM770 455h1v1h-1zM779 455h1v1h-1zM787 455h1v1h-1zM795 455h1v1h-1zM803 455h1v1h-1zM811 455h1v1h-1zM819 455h1v1h-1zM827 455h1v1h-1zM835 455h1v1h-1zM843 455h1v1h-1zM260 463h1v1h-1zM268 463h1v1h-1zM276 463h1v1h-1zM284 463h1v1h-1zM293 463h1v1h-1zM301 463h1v1h-1zM309 463h1v1h-1zM317 463h1v1h-1zM325 463h1v1h-1zM333 463h1v1h-1zM341 463h1v1h-1zM349 463h1v1h-1zM357 463h1v1h-1zM365 463h1v1h-1zM374 463h1v1h-1zM382 463h1v1h-1zM390 463h1v1h-1zM398 463h1v1h-1zM406 463h1v1h-1zM414 463h1v1h-1zM422 463h1v1h-1zM430 463h1v1h-1zM438 463h1v1h-1zM446 463h1v1h-1zM455 463h1v1h-1zM463 463h1v1h-1zM471 463h1v1h-1zM479 463h1v1h-1zM487 463h1v1h-1zM495 463h1v1h-1zM503 463h1v1h-1zM511 463h1v1h-1zM519 463h1v1h-1zM527 463h1v1h-1zM536 463h1v1h-1zM544 463h1v1h-1zM552 463h1v1h-1zM560 463h1v1h-1zM568 463h1v1h-1zM576 463h1v1h-1zM584 463h1v1h-1zM592 463h1v1h-1zM600 463h1v1h-1zM608 463h1v1h-1zM617 463h1v1h-1zM625 463h1v1h-1zM633 463h1v1h-1zM641 463h1v1h-1zM649 463h1v1h-1zM657 463h1v1h-1zM665 463h1v1h-1zM673 463h1v1h-1zM681 463h1v1h-1zM689 463h1v1h-1zM698 463h1v1h-1zM706 463h1v1h-1zM714 463h1v1h-1zM722 463h1v1h-1zM730 463h1v1h-1zM738 463h1v1h-1zM746 463h1v1h-1zM754 463h1v1h-1zM762 463h1v1h-1zM770 463h1v1h-1zM779 463h1v1h-1zM787 463h1v1h-1zM795 463h1v1h-1zM803 463h1v1h-1zM811 463h1v1h-1zM819 463h1v1h-1zM827 463h1v1h-1zM835 463h1v1h-1zM843 463h1v1h-1zM260 471h1v1h-1zM268 471h1v1h-1zM276 471h1v1h-1zM284 471h1v1h-1zM293 471h1v1h-1zM301 471h1v1h-1zM309 471h1v1h-1zM317 471h1v1h-1zM325 471h1v1h-1zM333 471h1v1h-1zM341 471h1v1h-1zM349 471h1v1h-1zM357 471h1v1h-1zM365 471h1v1h-1zM374 471h1v1h-1zM382 471h1v1h-1zM390 471h1v1h-1zM398 471h1v1h-1zM406 471h1v1h-1zM414 471h1v1h-1zM422 471h1v1h-1zM430 471h1v1h-1zM438 471h1v1h-1zM446 471h1v1h-1zM455 471h1v1h-1zM463 471h1v1h-1zM471 471h1v1h-1zM479 471h1v1h-1zM487 471h1v1h-1zM495 471h1v1h-1zM503 471h1v1h-1zM511 471h1v1h-1zM519 471h1v1h-1zM527 471h1v1h-1zM536 471h1v1h-1zM544 471h1v1h-1zM552 471h1v1h-1zM560 471h1v1h-1zM568 471h1v1h-1zM576 471h1v1h-1zM584 471h1v1h-1zM592 471h1v1h-1zM600 471h1v1h-1zM608 471h1v1h-1zM617 471h1v1h-1zM625 471h1v1h-1zM633 471h1v1h-1zM641 471h1v1h-1zM649 471h1v1h-1zM657 471h1v1h-1zM665 471h1v1h-1zM673 471h1v1h-1zM681 471h1v1h-1zM689 471h1v1h-1zM698 471h1v1h-1zM706 471h1v1h-1zM714 471h1v1h-1zM722 471h1v1h-1zM730 471h1v1h-1zM738 471h1v1h-1zM746 471h1v1h-1zM754 471h1v1h-1zM762 471h1v1h-1zM770 471h1v1h-1zM779 471h1v1h-1zM787 471h1v1h-1zM795 471h1v1h-1zM803 471h1v1h-1zM811 471h1v1h-1zM819 471h1v1h-1zM827 471h1v1h-1zM835 471h1v1h-1zM843 471h1v1h-1zM260 479h1v1h-1zM268 479h1v1h-1zM276 479h1v1h-1zM284 479h1v1h-1zM293 479h1v1h-1zM301 479h1v1h-1zM309 479h1v1h-1zM317 479h1v1h-1zM325 479h1v1h-1zM333 479h1v1h-1zM341 479h1v1h-1zM349 479h1v1h-1zM357 479h1v1h-1zM365 479h1v1h-1zM374 479h1v1h-1zM382 479h1v1h-1zM390 479h1v1h-1zM398 479h1v1h-1zM406 479h1v1h-1zM414 479h1v1h-1zM422 479h1v1h-1zM430 479h1v1h-1zM438 479h1v1h-1zM446 479h1v1h-1zM455 479h1v1h-1zM463 479h1v1h-1zM471 479h1v1h-1zM479 479h1v1h-1zM487 479h1v1h-1zM495 479h1v1h-1zM503 479h1v1h-1zM511 479h1v1h-1zM519 479h1v1h-1zM527 479h1v1h-1zM536 479h1v1h-1zM544 479h1v1h-1zM552 479h1v1h-1zM560 479h1v1h-1zM568 479h1v1h-1zM576 479h1v1h-1zM584 479h1v1h-1zM592 479h1v1h-1zM600 479h1v1h-1zM608 479h1v1h-1zM617 479h1v1h-1zM625 479h1v1h-1zM633 479h1v1h-1zM641 479h1v1h-1zM649 479h1v1h-1zM657 479h1v1h-1zM665 479h1v1h-1zM673 479h1v1h-1zM681 479h1v1h-1zM689 479h1v1h-1zM698 479h1v1h-1zM706 479h1v1h-1zM714 479h1v1h-1zM722 479h1v1h-1zM730 479h1v1h-1zM738 479h1v1h-1zM746 479h1v1h-1zM754 479h1v1h-1zM762 479h1v1h-1zM770 479h1v1h-1zM779 479h1v1h-1zM787 479h1v1h-1zM795 479h1v1h-1zM803 479h1v1h-1zM811 479h1v1h-1zM819 479h1v1h-1zM827 479h1v1h-1zM835 479h1v1h-1zM843 479h1v1h-1zM260 487h1v1h-1zM268 487h1v1h-1zM276 487h1v1h-1zM284 487h1v1h-1zM293 487h1v1h-1zM301 487h1v1h-1zM309 487h1v1h-1zM317 487h1v1h-1zM325 487h1v1h-1zM333 487h1v1h-1zM341 487h1v1h-1zM349 487h1v1h-1zM357 487h1v1h-1zM365 487h1v1h-1zM374 487h1v1h-1zM382 487h1v1h-1zM390 487h1v1h-1zM398 487h1v1h-1zM406 487h1v1h-1zM414 487h1v1h-1zM422 487h1v1h-1zM430 487h1v1h-1zM438 487h1v1h-1zM446 487h1v1h-1zM455 487h1v1h-1zM463 487h1v1h-1zM471 487h1v1h-1zM479 487h1v1h-1zM487 487h1v1h-1zM495 487h1v1h-1zM503 487h1v1h-1zM511 487h1v1h-1zM519 487h1v1h-1zM527 487h1v1h-1zM536 487h1v1h-1zM544 487h1v1h-1zM552 487h1v1h-1zM560 487h1v1h-1zM568 487h1v1h-1zM576 487h1v1h-1zM584 487h1v1h-1zM592 487h1v1h-1zM600 487h1v1h-1zM608 487h1v1h-1zM617 487h1v1h-1zM625 487h1v1h-1zM633 487h1v1h-1zM641 487h1v1h-1zM649 487h1v1h-1zM657 487h1v1h-1zM665 487h1v1h-1zM673 487h1v1h-1zM681 487h1v1h-1zM689 487h1v1h-1zM698 487h1v1h-1zM706 487h1v1h-1zM714 487h1v1h-1zM722 487h1v1h-1zM730 487h1v1h-1zM738 487h1v1h-1zM746 487h1v1h-1zM754 487h1v1h-1zM762 487h1v1h-1zM770 487h1v1h-1zM779 487h1v1h-1zM787 487h1v1h-1zM795 487h1v1h-1zM803 487h1v1h-1zM811 487h1v1h-1zM819 487h1v1h-1zM827 487h1v1h-1zM835 487h1v1h-1zM843 487h1v1h-1zM260 495h1v1h-1zM268 495h1v1h-1zM276 495h1v1h-1zM284 495h1v1h-1zM293 495h1v1h-1zM301 495h1v1h-1zM309 495h1v1h-1zM317 495h1v1h-1zM325 495h1v1h-1zM333 495h1v1h-1zM341 495h1v1h-1zM349 495h1v1h-1zM357 495h1v1h-1zM365 495h1v1h-1zM374 495h1v1h-1zM382 495h1v1h-1zM390 495h1v1h-1zM398 495h1v1h-1zM406 495h1v1h-1zM414 495h1v1h-1zM422 495h1v1h-1zM430 495h1v1h-1zM438 495h1v1h-1zM446 495h1v1h-1zM455 495h1v1h-1zM463 495h1v1h-1zM471 495h1v1h-1zM479 495h1v1h-1zM487 495h1v1h-1zM495 495h1v1h-1zM503 495h1v1h-1zM511 495h1v1h-1zM519 495h1v1h-1zM527 495h1v1h-1zM536 495h1v1h-1zM544 495h1v1h-1zM552 495h1v1h-1zM560 495h1v1h-1zM568 495h1v1h-1zM576 495h1v1h-1zM584 495h1v1h-1zM592 495h1v1h-1zM600 495h1v1h-1zM608 495h1v1h-1zM617 495h1v1h-1zM625 495h1v1h-1zM633 495h1v1h-1zM641 495h1v1h-1zM649 495h1v1h-1zM657 495h1v1h-1zM665 495h1v1h-1zM673 495h1v1h-1zM681 495h1v1h-1zM689 495h1v1h-1zM698 495h1v1h-1zM706 495h1v1h-1zM714 495h1v1h-1zM722 495h1v1h-1zM730 495h1v1h-1zM738 495h1v1h-1zM746 495h1v1h-1zM754 495h1v1h-1zM762 495h1v1h-1zM770 495h1v1h-1zM779 495h1v1h-1zM787 495h1v1h-1zM795 495h1v1h-1zM803 495h1v1h-1zM811 495h1v1h-1zM819 495h1v1h-1zM827 495h1v1h-1zM835 495h1v1h-1zM843 495h1v1h-1zM260 503h1v1h-1zM268 503h1v1h-1zM276 503h1v1h-1zM284 503h1v1h-1zM293 503h1v1h-1zM301 503h1v1h-1zM309 503h1v1h-1zM317 503h1v1h-1zM325 503h1v1h-1zM333 503h1v1h-1zM341 503h1v1h-1zM349 503h1v1h-1zM357 503h1v1h-1zM365 503h1v1h-1zM374 503h1v1h-1zM382 503h1v1h-1zM390 503h1v1h-1zM398 503h1v1h-1zM406 503h1v1h-1zM414 503h1v1h-1zM422 503h1v1h-1zM430 503h1v1h-1zM438 503h1v1h-1zM446 503h1v1h-1zM455 503h1v1h-1zM463 503h1v1h-1zM471 503h1v1h-1zM479 503h1v1h-1zM487 503h1v1h-1zM495 503h1v1h-1zM503 503h1v1h-1zM511 503h1v1h-1zM519 503h1v1h-1zM527 503h1v1h-1zM536 503h1v1h-1zM544 503h1v1h-1zM552 503h1v1h-1zM560 503h1v1h-1zM568 503h1v1h-1zM576 503h1v1h-1zM584 503h1v1h-1zM592 503h1v1h-1zM600 503h1v1h-1zM608 503h1v1h-1zM617 503h1v1h-1zM625 503h1v1h-1zM633 503h1v1h-1zM641 503h1v1h-1zM649 503h1v1h-1zM657 503h1v1h-1zM665 503h1v1h-1zM673 503h1v1h-1zM681 503h1v1h-1zM689 503h1v1h-1zM698 503h1v1h-1zM706 503h1v1h-1zM714 503h1v1h-1zM722 503h1v1h-1zM730 503h1v1h-1zM738 503h1v1h-1zM746 503h1v1h-1zM754 503h1v1h-1zM762 503h1v1h-1zM770 503h1v1h-1zM779 503h1v1h-1zM787 503h1v1h-1zM795 503h1v1h-1zM803 503h1v1h-1zM811 503h1v1h-1zM819 503h1v1h-1zM827 503h1v1h-1zM835 503h1v1h-1zM843 503h1v1h-1zM260 511h1v1h-1zM268 511h1v1h-1zM276 511h1v1h-1zM284 511h1v1h-1zM293 511h1v1h-1zM301 511h1v1h-1zM309 511h1v1h-1zM317 511h1v1h-1zM325 511h1v1h-1zM333 511h1v1h-1zM341 511h1v1h-1zM349 511h1v1h-1zM357 511h1v1h-1zM365 511h1v1h-1zM374 511h1v1h-1zM382 511h1v1h-1zM390 511h1v1h-1zM398 511h1v1h-1zM406 511h1v1h-1zM414 511h1v1h-1zM422 511h1v1h-1zM430 511h1v1h-1zM438 511h1v1h-1zM446 511h1v1h-1zM455 511h1v1h-1zM463 511h1v1h-1zM471 511h1v1h-1zM479 511h1v1h-1zM487 511h1v1h-1zM495 511h1v1h-1zM503 511h1v1h-1zM511 511h1v1h-1zM519 511h1v1h-1zM527 511h1v1h-1zM536 511h1v1h-1zM544 511h1v1h-1zM552 511h1v1h-1zM560 511h1v1h-1zM568 511h1v1h-1zM576 511h1v1h-1zM584 511h1v1h-1zM592 511h1v1h-1zM600 511h1v1h-1zM608 511h1v1h-1zM617 511h1v1h-1zM625 511h1v1h-1zM633 511h1v1h-1zM641 511h1v1h-1zM649 511h1v1h-1zM657 511h1v1h-1zM665 511h1v1h-1zM673 511h1v1h-1zM681 511h1v1h-1zM689 511h1v1h-1zM698 511h1v1h-1zM706 511h1v1h-1zM714 511h1v1h-1zM722 511h1v1h-1zM730 511h1v1h-1zM738 511h1v1h-1zM746 511h1v1h-1zM754 511h1v1h-1zM762 511h1v1h-1zM770 511h1v1h-1zM779 511h1v1h-1zM787 511h1v1h-1zM795 511h1v1h-1zM803 511h1v1h-1zM811 511h1v1h-1zM819 511h1v1h-1zM827 511h1v1h-1zM835 511h1v1h-1zM843 511h1v1h-1zM260 520h1v1h-1zM268 520h1v1h-1zM276 520h1v1h-1zM284 520h1v1h-1zM293 520h1v1h-1zM301 520h1v1h-1zM309 520h1v1h-1zM317 520h1v1h-1zM325 520h1v1h-1zM333 520h1v1h-1zM341 520h1v1h-1zM349 520h1v1h-1zM357 520h1v1h-1zM365 520h1v1h-1zM374 520h1v1h-1zM382 520h1v1h-1zM390 520h1v1h-1zM398 520h1v1h-1zM406 520h1v1h-1zM414 520h1v1h-1zM422 520h1v1h-1zM430 520h1v1h-1zM438 520h1v1h-1zM446 520h1v1h-1zM455 520h1v1h-1zM463 520h1v1h-1zM471 520h1v1h-1zM479 520h1v1h-1zM487 520h1v1h-1zM495 520h1v1h-1zM503 520h1v1h-1zM511 520h1v1h-1zM519 520h1v1h-1zM527 520h1v1h-1zM536 520h1v1h-1zM544 520h1v1h-1zM552 520h1v1h-1zM560 520h1v1h-1zM568 520h1v1h-1zM576 520h1v1h-1zM584 520h1v1h-1zM592 520h1v1h-1zM600 520h1v1h-1zM608 520h1v1h-1zM617 520h1v1h-1zM625 520h1v1h-1zM633 520h1v1h-1zM641 520h1v1h-1zM649 520h1v1h-1zM657 520h1v1h-1zM665 520h1v1h-1zM673 520h1v1h-1zM681 520h1v1h-1zM689 520h1v1h-1zM698 520h1v1h-1zM706 520h1v1h-1zM714 520h1v1h-1zM722 520h1v1h-1zM730 520h1v1h-1zM738 520h1v1h-1zM746 520h1v1h-1zM754 520h1v1h-1zM762 520h1v1h-1zM770 520h1v1h-1zM779 520h1v1h-1zM787 520h1v1h-1zM795 520h1v1h-1zM803 520h1v1h-1zM811 520h1v1h-1zM819 520h1v1h-1zM827 520h1v1h-1zM835 520h1v1h-1zM843 520h1v1h-1zM260 528h1v1h-1zM268 528h1v1h-1zM276 528h1v1h-1zM284 528h1v1h-1zM293 528h1v1h-1zM301 528h1v1h-1zM309 528h1v1h-1zM317 528h1v1h-1zM325 528h1v1h-1zM333 528h1v1h-1zM341 528h1v1h-1zM349 528h1v1h-1zM357 528h1v1h-1zM365 528h1v1h-1zM374 528h1v1h-1zM382 528h1v1h-1zM390 528h1v1h-1zM398 528h1v1h-1zM406 528h1v1h-1zM414 528h1v1h-1zM422 528h1v1h-1zM430 528h1v1h-1zM438 528h1v1h-1zM446 528h1v1h-1zM455 528h1v1h-1zM463 528h1v1h-1zM471 528h1v1h-1zM479 528h1v1h-1zM487 528h1v1h-1zM495 528h1v1h-1zM503 528h1v1h-1zM511 528h1v1h-1zM519 528h1v1h-1zM527 528h1v1h-1zM536 528h1v1h-1zM544 528h1v1h-1zM552 528h1v1h-1zM560 528h1v1h-1zM568 528h1v1h-1zM576 528h1v1h-1zM584 528h1v1h-1zM592 528h1v1h-1zM600 528h1v1h-1zM608 528h1v1h-1zM617 528h1v1h-1zM625 528h1v1h-1zM633 528h1v1h-1zM641 528h1v1h-1zM649 528h1v1h-1zM657 528h1v1h-1zM665 528h1v1h-1zM673 528h1v1h-1zM681 528h1v1h-1zM689 528h1v1h-1zM698 528h1v1h-1zM706 528h1v1h-1zM714 528h1v1h-1zM722 528h1v1h-1zM730 528h1v1h-1zM738 528h1v1h-1zM746 528h1v1h-1zM754 528h1v1h-1zM762 528h1v1h-1zM770 528h1v1h-1zM779 528h1v1h-1zM787 528h1v1h-1zM795 528h1v1h-1zM803 528h1v1h-1zM811 528h1v1h-1zM819 528h1v1h-1zM827 528h1v1h-1zM835 528h1v1h-1zM843 528h1v1h-1zM260 536h1v1h-1zM268 536h1v1h-1zM276 536h1v1h-1zM284 536h1v1h-1zM293 536h1v1h-1zM301 536h1v1h-1zM309 536h1v1h-1zM317 536h1v1h-1zM325 536h1v1h-1zM333 536h1v1h-1zM341 536h1v1h-1zM349 536h1v1h-1zM357 536h1v1h-1zM365 536h1v1h-1zM374 536h1v1h-1zM382 536h1v1h-1zM390 536h1v1h-1zM398 536h1v1h-1zM406 536h1v1h-1zM414 536h1v1h-1zM422 536h1v1h-1zM430 536h1v1h-1zM438 536h1v1h-1zM446 536h1v1h-1zM455 536h1v1h-1zM463 536h1v1h-1zM471 536h1v1h-1zM479 536h1v1h-1zM487 536h1v1h-1zM495 536h1v1h-1zM503 536h1v1h-1zM511 536h1v1h-1zM519 536h1v1h-1zM527 536h1v1h-1zM536 536h1v1h-1zM544 536h1v1h-1zM552 536h1v1h-1zM560 536h1v1h-1zM568 536h1v1h-1zM576 536h1v1h-1zM584 536h1v1h-1zM592 536h1v1h-1zM600 536h1v1h-1zM608 536h1v1h-1zM617 536h1v1h-1zM625 536h1v1h-1zM633 536h1v1h-1zM641 536h1v1h-1zM649 536h1v1h-1zM657 536h1v1h-1zM665 536h1v1h-1zM673 536h1v1h-1zM681 536h1v1h-1zM689 536h1v1h-1zM698 536h1v1h-1zM706 536h1v1h-1zM714 536h1v1h-1zM722 536h1v1h-1zM730 536h1v1h-1zM738 536h1v1h-1zM746 536h1v1h-1zM754 536h1v1h-1zM762 536h1v1h-1zM770 536h1v1h-1zM779 536h1v1h-1zM787 536h1v1h-1zM795 536h1v1h-1zM803 536h1v1h-1zM811 536h1v1h-1zM819 536h1v1h-1zM827 536h1v1h-1zM835 536h1v1h-1zM843 536h1v1h-1zM260 544h1v1h-1zM268 544h1v1h-1zM276 544h1v1h-1zM284 544h1v1h-1zM293 544h1v1h-1zM301 544h1v1h-1zM309 544h1v1h-1zM317 544h1v1h-1zM325 544h1v1h-1zM333 544h1v1h-1zM341 544h1v1h-1zM349 544h1v1h-1zM357 544h1v1h-1zM365 544h1v1h-1zM374 544h1v1h-1zM382 544h1v1h-1zM390 544h1v1h-1zM398 544h1v1h-1zM406 544h1v1h-1zM414 544h1v1h-1zM422 544h1v1h-1zM430 544h1v1h-1zM438 544h1v1h-1zM446 544h1v1h-1zM455 544h1v1h-1zM463 544h1v1h-1zM471 544h1v1h-1zM479 544h1v1h-1zM487 544h1v1h-1zM495 544h1v1h-1zM503 544h1v1h-1zM511 544h1v1h-1zM519 544h1v1h-1zM527 544h1v1h-1zM536 544h1v1h-1zM544 544h1v1h-1zM552 544h1v1h-1zM560 544h1v1h-1zM568 544h1v1h-1zM576 544h1v1h-1zM584 544h1v1h-1zM592 544h1v1h-1zM600 544h1v1h-1zM608 544h1v1h-1zM617 544h1v1h-1zM625 544h1v1h-1zM633 544h1v1h-1zM641 544h1v1h-1zM649 544h1v1h-1zM657 544h1v1h-1zM665 544h1v1h-1zM673 544h1v1h-1zM681 544h1v1h-1zM689 544h1v1h-1zM698 544h1v1h-1zM706 544h1v1h-1zM714 544h1v1h-1zM722 544h1v1h-1zM730 544h1v1h-1zM738 544h1v1h-1zM746 544h1v1h-1zM754 544h1v1h-1zM762 544h1v1h-1zM770 544h1v1h-1zM779 544h1v1h-1zM787 544h1v1h-1zM795 544h1v1h-1zM803 544h1v1h-1zM811 544h1v1h-1zM819 544h1v1h-1zM827 544h1v1h-1zM835 544h1v1h-1zM843 544h1v1h-1zM260 552h1v1h-1zM268 552h1v1h-1zM276 552h1v1h-1zM284 552h1v1h-1zM293 552h1v1h-1zM301 552h1v1h-1zM309 552h1v1h-1zM317 552h1v1h-1zM325 552h1v1h-1zM333 552h1v1h-1zM341 552h1v1h-1zM349 552h1v1h-1zM357 552h1v1h-1zM365 552h1v1h-1zM374 552h1v1h-1zM382 552h1v1h-1zM390 552h1v1h-1zM398 552h1v1h-1zM406 552h1v1h-1zM414 552h1v1h-1zM422 552h1v1h-1zM430 552h1v1h-1zM438 552h1v1h-1zM446 552h1v1h-1zM455 552h1v1h-1zM463 552h1v1h-1zM471 552h1v1h-1zM479 552h1v1h-1zM487 552h1v1h-1zM495 552h1v1h-1zM503 552h1v1h-1zM511 552h1v1h-1zM519 552h1v1h-1zM527 552h1v1h-1zM536 552h1v1h-1zM544 552h1v1h-1zM552 552h1v1h-1zM560 552h1v1h-1zM568 552h1v1h-1zM576 552h1v1h-1zM584 552h1v1h-1zM592 552h1v1h-1zM600 552h1v1h-1zM608 552h1v1h-1zM617 552h1v1h-1zM625 552h1v1h-1zM633 552h1v1h-1zM641 552h1v1h-1zM649 552h1v1h-1zM657 552h1v1h-1zM665 552h1v1h-1zM673 552h1v1h-1zM681 552h1v1h-1zM689 552h1v1h-1zM698 552h1v1h-1zM706 552h1v1h-1zM714 552h1v1h-1zM722 552h1v1h-1zM730 552h1v1h-1zM738 552h1v1h-1zM746 552h1v1h-1zM754 552h1v1h-1zM762 552h1v1h-1zM770 552h1v1h-1zM779 552h1v1h-1zM787 552h1v1h-1zM795 552h1v1h-1zM803 552h1v1h-1zM811 552h1v1h-1zM819 552h1v1h-1zM827 552h1v1h-1zM835 552h1v1h-1zM843 552h1v1h-1zM260 560h1v1h-1zM268 560h1v1h-1zM276 560h1v1h-1zM284 560h1v1h-1zM293 560h1v1h-1zM301 560h1v1h-1zM309 560h1v1h-1zM317 560h1v1h-1zM325 560h1v1h-1zM333 560h1v1h-1zM341 560h1v1h-1zM349 560h1v1h-1zM357 560h1v1h-1zM365 560h1v1h-1zM374 560h1v1h-1zM382 560h1v1h-1zM390 560h1v1h-1zM398 560h1v1h-1zM406 560h1v1h-1zM414 560h1v1h-1zM422 560h1v1h-1zM430 560h1v1h-1zM438 560h1v1h-1zM446 560h1v1h-1zM455 560h1v1h-1zM463 560h1v1h-1zM471 560h1v1h-1zM479 560h1v1h-1zM487 560h1v1h-1zM495 560h1v1h-1zM503 560h1v1h-1zM511 560h1v1h-1zM519 560h1v1h-1zM527 560h1v1h-1zM536 560h1v1h-1zM544 560h1v1h-1zM552 560h1v1h-1zM560 560h1v1h-1zM568 560h1v1h-1zM576 560h1v1h-1zM584 560h1v1h-1zM592 560h1v1h-1zM600 560h1v1h-1zM608 560h1v1h-1zM617 560h1v1h-1zM625 560h1v1h-1zM633 560h1v1h-1zM641 560h1v1h-1zM649 560h1v1h-1zM657 560h1v1h-1zM665 560h1v1h-1zM673 560h1v1h-1zM681 560h1v1h-1zM689 560h1v1h-1zM698 560h1v1h-1zM706 560h1v1h-1zM714 560h1v1h-1zM722 560h1v1h-1zM730 560h1v1h-1zM738 560h1v1h-1zM746 560h1v1h-1zM754 560h1v1h-1zM762 560h1v1h-1zM770 560h1v1h-1zM779 560h1v1h-1zM787 560h1v1h-1zM795 560h1v1h-1zM803 560h1v1h-1zM811 560h1v1h-1zM819 560h1v1h-1zM827 560h1v1h-1zM835 560h1v1h-1zM843 560h1v1h-1zM260 568h1v1h-1zM268 568h1v1h-1zM276 568h1v1h-1zM284 568h1v1h-1zM293 568h1v1h-1zM301 568h1v1h-1zM309 568h1v1h-1zM317 568h1v1h-1zM325 568h1v1h-1zM333 568h1v1h-1zM341 568h1v1h-1zM349 568h1v1h-1zM357 568h1v1h-1zM365 568h1v1h-1zM374 568h1v1h-1zM382 568h1v1h-1zM390 568h1v1h-1zM398 568h1v1h-1zM406 568h1v1h-1zM414 568h1v1h-1zM422 568h1v1h-1zM430 568h1v1h-1zM438 568h1v1h-1zM446 568h1v1h-1zM455 568h1v1h-1zM463 568h1v1h-1zM471 568h1v1h-1zM479 568h1v1h-1zM487 568h1v1h-1zM495 568h1v1h-1zM503 568h1v1h-1zM511 568h1v1h-1zM519 568h1v1h-1zM527 568h1v1h-1zM536 568h1v1h-1zM544 568h1v1h-1zM552 568h1v1h-1zM560 568h1v1h-1zM568 568h1v1h-1zM576 568h1v1h-1zM584 568h1v1h-1zM592 568h1v1h-1zM600 568h1v1h-1zM608 568h1v1h-1zM617 568h1v1h-1zM625 568h1v1h-1zM633 568h1v1h-1zM641 568h1v1h-1zM649 568h1v1h-1zM657 568h1v1h-1zM665 568h1v1h-1zM673 568h1v1h-1zM681 568h1v1h-1zM689 568h1v1h-1zM698 568h1v1h-1zM706 568h1v1h-1zM714 568h1v1h-1zM722 568h1v1h-1zM730 568h1v1h-1zM738 568h1v1h-1zM746 568h1v1h-1zM754 568h1v1h-1zM762 568h1v1h-1zM770 568h1v1h-1zM779 568h1v1h-1zM787 568h1v1h-1zM795 568h1v1h-1zM803 568h1v1h-1zM811 568h1v1h-1zM819 568h1v1h-1zM827 568h1v1h-1zM835 568h1v1h-1zM843 568h1v1h-1zM260 576h1v1h-1zM268 576h1v1h-1zM276 576h1v1h-1zM284 576h1v1h-1zM293 576h1v1h-1zM301 576h1v1h-1zM309 576h1v1h-1zM317 576h1v1h-1zM325 576h1v1h-1zM333 576h1v1h-1zM341 576h1v1h-1zM349 576h1v1h-1zM357 576h1v1h-1zM365 576h1v1h-1zM374 576h1v1h-1zM382 576h1v1h-1zM390 576h1v1h-1zM398 576h1v1h-1zM406 576h1v1h-1zM414 576h1v1h-1zM422 576h1v1h-1zM430 576h1v1h-1zM438 576h1v1h-1zM446 576h1v1h-1zM455 576h1v1h-1zM463 576h1v1h-1zM471 576h1v1h-1zM479 576h1v1h-1zM487 576h1v1h-1zM495 576h1v1h-1zM503 576h1v1h-1zM511 576h1v1h-1zM519 576h1v1h-1zM527 576h1v1h-1zM536 576h1v1h-1zM544 576h1v1h-1zM552 576h1v1h-1zM560 576h1v1h-1zM568 576h1v1h-1zM576 576h1v1h-1zM584 576h1v1h-1zM592 576h1v1h-1zM600 576h1v1h-1zM608 576h1v1h-1zM617 576h1v1h-1zM625 576h1v1h-1zM633 576h1v1h-1zM641 576h1v1h-1zM649 576h1v1h-1zM657 576h1v1h-1zM665 576h1v1h-1zM673 576h1v1h-1zM681 576h1v1h-1zM689 576h1v1h-1zM698 576h1v1h-1zM706 576h1v1h-1zM714 576h1v1h-1zM722 576h1v1h-1zM730 576h1v1h-1zM738 576h1v1h-1zM746 576h1v1h-1zM754 576h1v1h-1zM762 576h1v1h-1zM770 576h1v1h-1zM779 576h1v1h-1zM787 576h1v1h-1zM795 576h1v1h-1zM803 576h1v1h-1zM811 576h1v1h-1zM819 576h1v1h-1zM827 576h1v1h-1zM835 576h1v1h-1zM843 576h1v1h-1zM260 584h1v1h-1zM268 584h1v1h-1zM276 584h1v1h-1zM284 584h1v1h-1zM293 584h1v1h-1zM301 584h1v1h-1zM309 584h1v1h-1zM317 584h1v1h-1zM325 584h1v1h-1zM333 584h1v1h-1zM341 584h1v1h-1zM349 584h1v1h-1zM357 584h1v1h-1zM365 584h1v1h-1zM374 584h1v1h-1zM382 584h1v1h-1zM390 584h1v1h-1zM398 584h1v1h-1zM406 584h1v1h-1zM414 584h1v1h-1zM422 584h1v1h-1zM430 584h1v1h-1zM438 584h1v1h-1zM446 584h1v1h-1zM455 584h1v1h-1zM463 584h1v1h-1zM471 584h1v1h-1zM479 584h1v1h-1zM487 584h1v1h-1zM495 584h1v1h-1zM503 584h1v1h-1zM511 584h1v1h-1zM519 584h1v1h-1zM527 584h1v1h-1zM536 584h1v1h-1zM544 584h1v1h-1zM552 584h1v1h-1zM560 584h1v1h-1zM568 584h1v1h-1zM576 584h1v1h-1zM584 584h1v1h-1zM592 584h1v1h-1zM600 584h1v1h-1zM608 584h1v1h-1zM617 584h1v1h-1zM625 584h1v1h-1zM633 584h1v1h-1zM641 584h1v1h-1zM649 584h1v1h-1zM657 584h1v1h-1zM665 584h1v1h-1zM673 584h1v1h-1zM681 584h1v1h-1zM689 584h1v1h-1zM698 584h1v1h-1zM706 584h1v1h-1zM714 584h1v1h-1zM722 584h1v1h-1zM730 584h1v1h-1zM738 584h1v1h-1zM746 584h1v1h-1zM754 584h1v1h-1zM762 584h1v1h-1zM770 584h1v1h-1zM779 584h1v1h-1zM787 584h1v1h-1zM795 584h1v1h-1zM803 584h1v1h-1zM811 584h1v1h-1zM819 584h1v1h-1zM827 584h1v1h-1zM835 584h1v1h-1zM843 584h1v1h-1zM260 592h1v1h-1zM268 592h1v1h-1zM276 592h1v1h-1zM284 592h1v1h-1zM293 592h1v1h-1zM301 592h1v1h-1zM309 592h1v1h-1zM317 592h1v1h-1zM325 592h1v1h-1zM333 592h1v1h-1zM341 592h1v1h-1zM349 592h1v1h-1zM357 592h1v1h-1zM365 592h1v1h-1zM374 592h1v1h-1zM382 592h1v1h-1zM390 592h1v1h-1zM398 592h1v1h-1zM406 592h1v1h-1zM414 592h1v1h-1zM422 592h1v1h-1zM430 592h1v1h-1zM438 592h1v1h-1zM446 592h1v1h-1zM455 592h1v1h-1zM463 592h1v1h-1zM471 592h1v1h-1zM479 592h1v1h-1zM487 592h1v1h-1zM495 592h1v1h-1zM503 592h1v1h-1zM511 592h1v1h-1zM519 592h1v1h-1zM527 592h1v1h-1zM536 592h1v1h-1zM544 592h1v1h-1zM552 592h1v1h-1zM560 592h1v1h-1zM568 592h1v1h-1zM576 592h1v1h-1zM584 592h1v1h-1zM592 592h1v1h-1zM600 592h1v1h-1zM608 592h1v1h-1zM617 592h1v1h-1zM625 592h1v1h-1zM633 592h1v1h-1zM641 592h1v1h-1zM649 592h1v1h-1zM657 592h1v1h-1zM665 592h1v1h-1zM673 592h1v1h-1zM681 592h1v1h-1zM689 592h1v1h-1zM698 592h1v1h-1zM706 592h1v1h-1zM714 592h1v1h-1zM722 592h1v1h-1zM730 592h1v1h-1zM738 592h1v1h-1zM746 592h1v1h-1zM754 592h1v1h-1zM762 592h1v1h-1zM770 592h1v1h-1zM779 592h1v1h-1zM787 592h1v1h-1zM795 592h1v1h-1zM803 592h1v1h-1zM811 592h1v1h-1zM819 592h1v1h-1zM827 592h1v1h-1zM835 592h1v1h-1zM843 592h1v1h-1zM260 601h1v1h-1zM268 601h1v1h-1zM276 601h1v1h-1zM284 601h1v1h-1zM293 601h1v1h-1zM301 601h1v1h-1zM309 601h1v1h-1zM317 601h1v1h-1zM325 601h1v1h-1zM333 601h1v1h-1zM341 601h1v1h-1zM349 601h1v1h-1zM357 601h1v1h-1zM365 601h1v1h-1zM374 601h1v1h-1zM382 601h1v1h-1zM390 601h1v1h-1zM398 601h1v1h-1zM406 601h1v1h-1zM414 601h1v1h-1zM422 601h1v1h-1zM430 601h1v1h-1zM438 601h1v1h-1zM446 601h1v1h-1zM455 601h1v1h-1zM463 601h1v1h-1zM471 601h1v1h-1zM479 601h1v1h-1zM487 601h1v1h-1zM495 601h1v1h-1zM503 601h1v1h-1zM511 601h1v1h-1zM519 601h1v1h-1zM527 601h1v1h-1zM536 601h1v1h-1zM544 601h1v1h-1zM552 601h1v1h-1zM560 601h1v1h-1zM568 601h1v1h-1zM576 601h1v1h-1zM584 601h1v1h-1zM592 601h1v1h-1zM600 601h1v1h-1zM608 601h1v1h-1zM617 601h1v1h-1zM625 601h1v1h-1zM633 601h1v1h-1zM641 601h1v1h-1zM649 601h1v1h-1zM657 601h1v1h-1zM665 601h1v1h-1zM673 601h1v1h-1zM681 601h1v1h-1zM689 601h1v1h-1zM698 601h1v1h-1zM706 601h1v1h-1zM714 601h1v1h-1zM722 601h1v1h-1zM730 601h1v1h-1zM738 601h1v1h-1zM746 601h1v1h-1zM754 601h1v1h-1zM762 601h1v1h-1zM770 601h1v1h-1zM779 601h1v1h-1zM787 601h1v1h-1zM795 601h1v1h-1zM803 601h1v1h-1zM811 601h1v1h-1zM819 601h1v1h-1zM827 601h1v1h-1zM835 601h1v1h-1zM843 601h1v1h-1zM851 447h1v1h-1zM860 447h1v1h-1zM868 447h1v1h-1zM876 447h1v1h-1zM884 447h1v1h-1zM892 447h1v1h-1zM900 447h1v1h-1zM908 447h1v1h-1zM916 447h1v1h-1zM924 447h1v1h-1zM932 447h1v1h-1zM941 447h1v1h-1zM949 447h1v1h-1zM957 447h1v1h-1zM965 447h1v1h-1zM973 447h1v1h-1zM981 447h1v1h-1zM989 447h1v1h-1zM997 447h1v1h-1zM1005 447h1v1h-1zM1013 447h1v1h-1zM851 455h1v1h-1zM860 455h1v1h-1zM868 455h1v1h-1zM876 455h1v1h-1zM884 455h1v1h-1zM892 455h1v1h-1zM900 455h1v1h-1zM908 455h1v1h-1zM916 455h1v1h-1zM924 455h1v1h-1zM932 455h1v1h-1zM941 455h1v1h-1zM949 455h1v1h-1zM957 455h1v1h-1zM965 455h1v1h-1zM973 455h1v1h-1zM981 455h1v1h-1zM989 455h1v1h-1zM997 455h1v1h-1zM1005 455h1v1h-1zM1013 455h1v1h-1zM851 463h1v1h-1zM860 463h1v1h-1zM868 463h1v1h-1zM876 463h1v1h-1zM884 463h1v1h-1zM892 463h1v1h-1zM900 463h1v1h-1zM908 463h1v1h-1zM916 463h1v1h-1zM924 463h1v1h-1zM932 463h1v1h-1zM941 463h1v1h-1zM949 463h1v1h-1zM957 463h1v1h-1zM965 463h1v1h-1zM973 463h1v1h-1zM981 463h1v1h-1zM989 463h1v1h-1zM997 463h1v1h-1zM1005 463h1v1h-1zM1013 463h1v1h-1zM851 471h1v1h-1zM860 471h1v1h-1zM868 471h1v1h-1zM876 471h1v1h-1zM884 471h1v1h-1zM892 471h1v1h-1zM900 471h1v1h-1zM908 471h1v1h-1zM916 471h1v1h-1zM924 471h1v1h-1zM932 471h1v1h-1zM941 471h1v1h-1zM949 471h1v1h-1zM957 471h1v1h-1zM965 471h1v1h-1zM973 471h1v1h-1zM981 471h1v1h-1zM989 471h1v1h-1zM997 471h1v1h-1zM1005 471h1v1h-1zM1013 471h1v1h-1zM851 479h1v1h-1zM860 479h1v1h-1zM868 479h1v1h-1zM876 479h1v1h-1zM884 479h1v1h-1zM892 479h1v1h-1zM900 479h1v1h-1zM908 479h1v1h-1zM916 479h1v1h-1zM924 479h1v1h-1zM932 479h1v1h-1zM941 479h1v1h-1zM949 479h1v1h-1zM957 479h1v1h-1zM965 479h1v1h-1zM973 479h1v1h-1zM981 479h1v1h-1zM989 479h1v1h-1zM997 479h1v1h-1zM1005 479h1v1h-1zM1013 479h1v1h-1zM851 487h1v1h-1zM860 487h1v1h-1zM868 487h1v1h-1zM876 487h1v1h-1zM884 487h1v1h-1zM892 487h1v1h-1zM900 487h1v1h-1zM908 487h1v1h-1zM916 487h1v1h-1zM924 487h1v1h-1zM932 487h1v1h-1zM941 487h1v1h-1zM949 487h1v1h-1zM957 487h1v1h-1zM965 487h1v1h-1zM973 487h1v1h-1zM981 487h1v1h-1zM989 487h1v1h-1zM997 487h1v1h-1zM1005 487h1v1h-1zM1013 487h1v1h-1zM851 495h1v1h-1zM860 495h1v1h-1zM868 495h1v1h-1zM876 495h1v1h-1zM884 495h1v1h-1zM892 495h1v1h-1zM900 495h1v1h-1zM908 495h1v1h-1zM916 495h1v1h-1zM924 495h1v1h-1zM932 495h1v1h-1zM941 495h1v1h-1zM949 495h1v1h-1zM957 495h1v1h-1zM965 495h1v1h-1zM973 495h1v1h-1zM981 495h1v1h-1zM989 495h1v1h-1zM997 495h1v1h-1zM1005 495h1v1h-1zM1013 495h1v1h-1zM851 503h1v1h-1zM860 503h1v1h-1zM868 503h1v1h-1zM876 503h1v1h-1zM884 503h1v1h-1zM892 503h1v1h-1zM900 503h1v1h-1zM908 503h1v1h-1zM916 503h1v1h-1zM924 503h1v1h-1zM932 503h1v1h-1zM941 503h1v1h-1zM949 503h1v1h-1zM957 503h1v1h-1zM965 503h1v1h-1zM973 503h1v1h-1zM981 503h1v1h-1zM989 503h1v1h-1zM997 503h1v1h-1zM1005 503h1v1h-1zM1013 503h1v1h-1zM851 511h1v1h-1zM860 511h1v1h-1zM868 511h1v1h-1zM876 511h1v1h-1zM884 511h1v1h-1zM892 511h1v1h-1zM900 511h1v1h-1zM908 511h1v1h-1zM916 511h1v1h-1zM924 511h1v1h-1zM932 511h1v1h-1zM941 511h1v1h-1zM949 511h1v1h-1zM957 511h1v1h-1zM965 511h1v1h-1zM973 511h1v1h-1zM981 511h1v1h-1zM989 511h1v1h-1zM997 511h1v1h-1zM1005 511h1v1h-1zM1013 511h1v1h-1zM851 520h1v1h-1zM860 520h1v1h-1zM868 520h1v1h-1zM876 520h1v1h-1zM884 520h1v1h-1zM892 520h1v1h-1zM900 520h1v1h-1zM908 520h1v1h-1zM916 520h1v1h-1zM924 520h1v1h-1zM932 520h1v1h-1zM941 520h1v1h-1zM949 520h1v1h-1zM957 520h1v1h-1zM965 520h1v1h-1zM973 520h1v1h-1zM981 520h1v1h-1zM989 520h1v1h-1zM997 520h1v1h-1zM1005 520h1v1h-1zM1013 520h1v1h-1zM851 528h1v1h-1zM860 528h1v1h-1zM868 528h1v1h-1zM876 528h1v1h-1zM884 528h1v1h-1zM892 528h1v1h-1zM900 528h1v1h-1zM908 528h1v1h-1zM916 528h1v1h-1zM924 528h1v1h-1zM932 528h1v1h-1zM941 528h1v1h-1zM949 528h1v1h-1zM957 528h1v1h-1zM965 528h1v1h-1zM973 528h1v1h-1zM981 528h1v1h-1zM989 528h1v1h-1zM997 528h1v1h-1zM1005 528h1v1h-1zM1013 528h1v1h-1zM851 536h1v1h-1zM860 536h1v1h-1zM868 536h1v1h-1zM876 536h1v1h-1zM884 536h1v1h-1zM892 536h1v1h-1zM900 536h1v1h-1zM908 536h1v1h-1zM916 536h1v1h-1zM924 536h1v1h-1zM932 536h1v1h-1zM941 536h1v1h-1zM949 536h1v1h-1zM957 536h1v1h-1zM965 536h1v1h-1zM973 536h1v1h-1zM981 536h1v1h-1zM989 536h1v1h-1zM997 536h1v1h-1zM1005 536h1v1h-1zM1013 536h1v1h-1zM851 544h1v1h-1zM860 544h1v1h-1zM868 544h1v1h-1zM876 544h1v1h-1zM884 544h1v1h-1zM892 544h1v1h-1zM900 544h1v1h-1zM908 544h1v1h-1zM916 544h1v1h-1zM924 544h1v1h-1zM932 544h1v1h-1zM941 544h1v1h-1zM949 544h1v1h-1zM957 544h1v1h-1zM965 544h1v1h-1zM973 544h1v1h-1zM981 544h1v1h-1zM989 544h1v1h-1zM997 544h1v1h-1zM1005 544h1v1h-1zM1013 544h1v1h-1zM851 552h1v1h-1zM860 552h1v1h-1zM868 552h1v1h-1zM876 552h1v1h-1zM884 552h1v1h-1zM892 552h1v1h-1zM900 552h1v1h-1zM908 552h1v1h-1zM916 552h1v1h-1zM924 552h1v1h-1zM932 552h1v1h-1zM941 552h1v1h-1zM949 552h1v1h-1zM957 552h1v1h-1zM965 552h1v1h-1zM973 552h1v1h-1zM981 552h1v1h-1zM989 552h1v1h-1zM997 552h1v1h-1zM1005 552h1v1h-1zM1013 552h1v1h-1zM851 560h1v1h-1zM860 560h1v1h-1zM868 560h1v1h-1zM876 560h1v1h-1zM884 560h1v1h-1zM892 560h1v1h-1zM900 560h1v1h-1zM908 560h1v1h-1zM916 560h1v1h-1zM924 560h1v1h-1zM932 560h1v1h-1zM941 560h1v1h-1zM949 560h1v1h-1zM957 560h1v1h-1zM965 560h1v1h-1zM973 560h1v1h-1zM981 560h1v1h-1zM989 560h1v1h-1zM997 560h1v1h-1zM1005 560h1v1h-1zM1013 560h1v1h-1zM851 568h1v1h-1zM860 568h1v1h-1zM868 568h1v1h-1zM876 568h1v1h-1zM884 568h1v1h-1zM892 568h1v1h-1zM900 568h1v1h-1zM908 568h1v1h-1zM916 568h1v1h-1zM924 568h1v1h-1zM932 568h1v1h-1zM941 568h1v1h-1zM949 568h1v1h-1zM957 568h1v1h-1zM965 568h1v1h-1zM973 568h1v1h-1zM981 568h1v1h-1zM989 568h1v1h-1zM997 568h1v1h-1zM1005 568h1v1h-1zM1013 568h1v1h-1zM851 576h1v1h-1zM860 576h1v1h-1zM868 576h1v1h-1zM876 576h1v1h-1zM884 576h1v1h-1zM892 576h1v1h-1zM900 576h1v1h-1zM908 576h1v1h-1zM916 576h1v1h-1zM924 576h1v1h-1zM932 576h1v1h-1zM941 576h1v1h-1zM949 576h1v1h-1zM957 576h1v1h-1zM965 576h1v1h-1zM973 576h1v1h-1zM981 576h1v1h-1zM989 576h1v1h-1zM997 576h1v1h-1zM1005 576h1v1h-1zM1013 576h1v1h-1zM851 584h1v1h-1zM860 584h1v1h-1zM868 584h1v1h-1zM876 584h1v1h-1zM884 584h1v1h-1zM892 584h1v1h-1zM900 584h1v1h-1zM908 584h1v1h-1zM916 584h1v1h-1zM924 584h1v1h-1zM932 584h1v1h-1zM941 584h1v1h-1zM949 584h1v1h-1zM957 584h1v1h-1zM965 584h1v1h-1zM973 584h1v1h-1zM981 584h1v1h-1zM989 584h1v1h-1zM997 584h1v1h-1zM1005 584h1v1h-1zM1013 584h1v1h-1zM851 592h1v1h-1zM860 592h1v1h-1zM868 592h1v1h-1zM876 592h1v1h-1zM884 592h1v1h-1zM892 592h1v1h-1zM900 592h1v1h-1zM908 592h1v1h-1zM916 592h1v1h-1zM924 592h1v1h-1zM932 592h1v1h-1zM941 592h1v1h-1zM949 592h1v1h-1zM957 592h1v1h-1zM965 592h1v1h-1zM973 592h1v1h-1zM981 592h1v1h-1zM989 592h1v1h-1zM997 592h1v1h-1zM1005 592h1v1h-1zM1013 592h1v1h-1zM851 601h1v1h-1zM860 601h1v1h-1zM868 601h1v1h-1zM876 601h1v1h-1zM884 601h1v1h-1zM892 601h1v1h-1zM900 601h1v1h-1zM908 601h1v1h-1zM916 601h1v1h-1zM924 601h1v1h-1zM932 601h1v1h-1zM941 601h1v1h-1zM949 601h1v1h-1zM957 601h1v1h-1zM965 601h1v1h-1zM973 601h1v1h-1zM981 601h1v1h-1zM989 601h1v1h-1zM997 601h1v1h-1zM1005 601h1v1h-1zM1013 601h1v1h-1zM908 609h1v1h-1zM916 609h1v1h-1zM924 609h1v1h-1zM932 609h1v1h-1zM908 617h1v1h-1zM916 617h1v1h-1zM924 617h1v1h-1zM932 617h1v1h-1zM908 625h1v1h-1zM916 625h1v1h-1zM924 625h1v1h-1zM932 625h1v1h-1zM908 633h1v1h-1zM916 633h1v1h-1zM924 633h1v1h-1zM932 633h1v1h-1zM908 641h1v1h-1zM916 641h1v1h-1zM924 641h1v1h-1zM932 641h1v1h-1zM908 649h1v1h-1zM916 649h1v1h-1zM924 649h1v1h-1zM932 649h1v1h-1zM908 657h1v1h-1zM916 657h1v1h-1zM924 657h1v1h-1zM932 657h1v1h-1zM908 665h1v1h-1zM916 665h1v1h-1zM924 665h1v1h-1zM932 665h1v1h-1zM908 673h1v1h-1zM916 673h1v1h-1zM924 673h1v1h-1zM932 673h1v1h-1zM908 682h1v1h-1zM916 682h1v1h-1zM924 682h1v1h-1zM932 682h1v1h-1zM908 690h1v1h-1zM916 690h1v1h-1zM924 690h1v1h-1zM932 690h1v1h-1zM908 698h1v1h-1zM916 698h1v1h-1zM924 698h1v1h-1zM932 698h1v1h-1zM908 706h1v1h-1zM916 706h1v1h-1zM924 706h1v1h-1zM932 706h1v1h-1zM908 714h1v1h-1zM916 714h1v1h-1zM924 714h1v1h-1zM932 714h1v1h-1zM908 722h1v1h-1zM916 722h1v1h-1zM924 722h1v1h-1zM932 722h1v1h-1zM908 730h1v1h-1zM916 730h1v1h-1zM924 730h1v1h-1zM932 730h1v1h-1zM908 738h1v1h-1zM916 738h1v1h-1zM924 738h1v1h-1zM932 738h1v1h-1zM908 746h1v1h-1zM916 746h1v1h-1zM924 746h1v1h-1zM932 746h1v1h-1zM908 754h1v1h-1zM916 754h1v1h-1zM924 754h1v1h-1zM932 754h1v1h-1zM908 763h1v1h-1zM916 763h1v1h-1zM924 763h1v1h-1zM932 763h1v1h-1zM908 771h1v1h-1zM916 771h1v1h-1zM924 771h1v1h-1zM932 771h1v1h-1zM908 779h1v1h-1zM916 779h1v1h-1zM924 779h1v1h-1zM932 779h1v1h-1zM908 787h1v1h-1zM916 787h1v1h-1zM924 787h1v1h-1zM932 787h1v1h-1zM908 795h1v1h-1zM916 795h1v1h-1zM924 795h1v1h-1zM932 795h1v1h-1zM1022 576h1v1h-1zM1030 576h1v1h-1zM1038 576h1v1h-1zM1046 576h1v1h-1zM1054 576h1v1h-1zM1062 576h1v1h-1zM1070 576h1v1h-1zM1078 576h1v1h-1zM1086 576h1v1h-1zM1094 576h1v1h-1zM1103 576h1v1h-1zM1111 576h1v1h-1zM1119 576h1v1h-1zM1127 576h1v1h-1zM1135 576h1v1h-1zM1143 576h1v1h-1zM1151 576h1v1h-1zM1159 576h1v1h-1zM1167 576h1v1h-1zM1175 576h1v1h-1zM1184 576h1v1h-1zM1192 576h1v1h-1zM1200 576h1v1h-1zM1208 576h1v1h-1zM1216 576h1v1h-1zM1224 576h1v1h-1zM1022 584h1v1h-1zM1030 584h1v1h-1zM1038 584h1v1h-1zM1046 584h1v1h-1zM1054 584h1v1h-1zM1062 584h1v1h-1zM1070 584h1v1h-1zM1078 584h1v1h-1zM1086 584h1v1h-1zM1094 584h1v1h-1zM1103 584h1v1h-1zM1111 584h1v1h-1zM1119 584h1v1h-1zM1127 584h1v1h-1zM1135 584h1v1h-1zM1143 584h1v1h-1zM1151 584h1v1h-1zM1159 584h1v1h-1zM1167 584h1v1h-1zM1175 584h1v1h-1zM1184 584h1v1h-1zM1192 584h1v1h-1zM1200 584h1v1h-1zM1208 584h1v1h-1zM1216 584h1v1h-1zM1224 584h1v1h-1zM1022 592h1v1h-1zM1030 592h1v1h-1zM1038 592h1v1h-1zM1046 592h1v1h-1zM1054 592h1v1h-1zM1062 592h1v1h-1zM1070 592h1v1h-1zM1078 592h1v1h-1zM1086 592h1v1h-1zM1094 592h1v1h-1zM1103 592h1v1h-1zM1111 592h1v1h-1zM1119 592h1v1h-1zM1127 592h1v1h-1zM1135 592h1v1h-1zM1143 592h1v1h-1zM1151 592h1v1h-1zM1159 592h1v1h-1zM1167 592h1v1h-1zM1175 592h1v1h-1zM1184 592h1v1h-1zM1192 592h1v1h-1zM1200 592h1v1h-1zM1208 592h1v1h-1zM1216 592h1v1h-1zM1224 592h1v1h-1zM1022 601h1v1h-1zM1030 601h1v1h-1zM1038 601h1v1h-1zM1046 601h1v1h-1zM1054 601h1v1h-1zM1062 601h1v1h-1zM1070 601h1v1h-1zM1078 601h1v1h-1zM1086 601h1v1h-1zM1094 601h1v1h-1zM1103 601h1v1h-1zM1111 601h1v1h-1zM1119 601h1v1h-1zM1127 601h1v1h-1zM1135 601h1v1h-1zM1143 601h1v1h-1zM1151 601h1v1h-1zM1159 601h1v1h-1zM1167 601h1v1h-1zM1175 601h1v1h-1zM1184 601h1v1h-1zM1192 601h1v1h-1zM1200 601h1v1h-1zM1208 601h1v1h-1zM1216 601h1v1h-1zM1224 601h1v1h-1zM1022 609h1v1h-1zM1030 609h1v1h-1zM1038 609h1v1h-1zM1046 609h1v1h-1zM1054 609h1v1h-1zM1062 609h1v1h-1zM1070 609h1v1h-1zM1078 609h1v1h-1zM1086 609h1v1h-1zM1094 609h1v1h-1zM1103 609h1v1h-1zM1111 609h1v1h-1zM1119 609h1v1h-1zM1127 609h1v1h-1zM1135 609h1v1h-1zM1143 609h1v1h-1zM1151 609h1v1h-1zM1159 609h1v1h-1zM1167 609h1v1h-1zM1175 609h1v1h-1zM1184 609h1v1h-1zM1192 609h1v1h-1zM1200 609h1v1h-1zM1208 609h1v1h-1zM1216 609h1v1h-1zM1224 609h1v1h-1zM1022 617h1v1h-1zM1030 617h1v1h-1zM1038 617h1v1h-1zM1046 617h1v1h-1zM1054 617h1v1h-1zM1062 617h1v1h-1zM1070 617h1v1h-1zM1078 617h1v1h-1zM1086 617h1v1h-1zM1094 617h1v1h-1zM1103 617h1v1h-1zM1111 617h1v1h-1zM1119 617h1v1h-1zM1127 617h1v1h-1zM1135 617h1v1h-1zM1143 617h1v1h-1zM1151 617h1v1h-1zM1159 617h1v1h-1zM1167 617h1v1h-1zM1175 617h1v1h-1zM1184 617h1v1h-1zM1192 617h1v1h-1zM1200 617h1v1h-1zM1208 617h1v1h-1zM1216 617h1v1h-1zM1224 617h1v1h-1zM1022 625h1v1h-1zM1030 625h1v1h-1zM1038 625h1v1h-1zM1046 625h1v1h-1zM1054 625h1v1h-1zM1062 625h1v1h-1zM1070 625h1v1h-1zM1078 625h1v1h-1zM1086 625h1v1h-1zM1094 625h1v1h-1zM1103 625h1v1h-1zM1111 625h1v1h-1zM1119 625h1v1h-1zM1127 625h1v1h-1zM1135 625h1v1h-1zM1143 625h1v1h-1zM1151 625h1v1h-1zM1159 625h1v1h-1zM1167 625h1v1h-1zM1175 625h1v1h-1zM1184 625h1v1h-1zM1192 625h1v1h-1zM1200 625h1v1h-1zM1208 625h1v1h-1zM1216 625h1v1h-1zM1224 625h1v1h-1z"/><rect x="284.5" y="260.5" width="48" height="32" fill="#bcd9bc" stroke="#000" stroke-width="1.5"/><rect x="286.5" y="265" width="13" height="9" fill="#c0c0c0" stroke="#fff"/><rect x="302" y="265" width="13" height="9" fill="#c0c0c0" stroke="#fff"/><rect x="319" y="265" width="13" height="9" fill="#c0c0c0" stroke="#fff"/><circle cx="293.5" cy="287" r="2.2" fill="#888" stroke="#000"/><path d="M293.5 289.0L293.5 301.5" stroke="#000" stroke-width="1"/><circle cx="309.5" cy="287" r="2.2" fill="#888" stroke="#000"/><path d="M309.5 289.0L309.5 301.5" stroke="#000" stroke-width="1"/><circle cx="325.5" cy="287" r="2.2" fill="#888" stroke="#000"/><path d="M325.5 289.0L325.5 301.5" stroke="#000" stroke-width="1"/><text x="308" y="256.5" font-size="12" font-family="Liberation Serif" font-weight="bold" text-anchor="middle" letter-spacing="-0.3">XFG1</text><path d="M288 271L290.5 268L293 270.5L295.5 268L298 271M304 270Q306.5 273 309 270T314 270M321 272H323V268H326V272H329V268" stroke="#222" fill="none"/><path d="M290.5 281.5H295.5M293 279V284M322.5 281.5H327.5" stroke="#000"/><path d="M293.5 301.5 L293.5 609.5" stroke="#f00" stroke-width="1" fill="none"/><path d="M309.5 301.5 L309.5 325.5" stroke="#f00" stroke-width="1" fill="none"/><path d="M309.5 325.5L309.5 333.0" stroke="#000" stroke-width="1"/><path d="M301.5 333.5L317.5 333.5" stroke="#000" stroke-width="1"/><path d="M304.5 337.5L314.5 337.5" stroke="#000" stroke-width="1"/><path d="M307.5 341.5L311.5 341.5" stroke="#000" stroke-width="1"/><path d="M292 405h3v3h-3z" fill="#f00"/><path d="M293.5 406.5 L317.5 406.5" stroke="#f00" stroke-width="1" fill="none"/><path d="M317.5 406.5L335.0 406.5" stroke="#000" stroke-width="1"/><path d="M340.0 406.5L357.5 406.5" stroke="#000" stroke-width="1"/><path d="M335.0 398.5L335.0 414.5" stroke="#000" stroke-width="2"/><path d="M340.0 398.5L340.0 414.5" stroke="#000" stroke-width="2"/><path d="M357.5 406.5 L365.5 406.5" stroke="#f00" stroke-width="1" fill="none"/><path d="M365.5 406.5L373.6 406.5" stroke="#000" stroke-width="1"/><path d="M373.6 406.5 L376.3 402.2 L380.4 412.0 L384.3 402.2 L388.2 412.0 L392.2 402.2 L396.3 412.0 L398.2 406.5" stroke="#000" stroke-width="1" fill="none"/><path d="M398.2 406.5L406.5 406.5" stroke="#000" stroke-width="1"/><path d="M406.5 406.5 L495.5 406.5" stroke="#f00" stroke-width="1" fill="none"/><path d="M495.5 406.5L509.7 406.5" stroke="#00f" stroke-width="1"/><path d="M413 405h3v3h-3z" fill="#f00"/><path d="M462 405h3v3h-3z" fill="#f00"/><text x="337.0" y="393.3" fill="#000" stroke="#000" stroke-width="0.28" font-size="12" text-anchor="middle">C6</text><text x="386.0" y="397.8" fill="#000" stroke="#000" stroke-width="0.28" font-size="12" text-anchor="middle">R27</text><text x="385.0" y="422.3" fill="#000" stroke="#000" stroke-width="0.28" font-size="12" text-anchor="middle">330Ω</text><text x="333.0" y="427.3" fill="#000" stroke="#000" stroke-width="0.28" font-size="12" text-anchor="middle">1uF</text><text x="334.0" y="432.3" fill="#000" stroke="#000" stroke-width="0.28" font-size="12" text-anchor="middle">V3</text><path d="M414.5 406.5 L414.5 422.5" stroke="#f00" stroke-width="1" fill="none"/><path d="M414.5 422.5L414.5 430.6" stroke="#000" stroke-width="1"/><path d="M414.5 430.6 L420.0 433.3 L410.2 437.4 L420.0 441.3 L410.2 445.2 L420.0 449.2 L410.2 453.3 L414.5 455.2" stroke="#000" stroke-width="1" fill="none"/><path d="M414.5 455.2L414.5 463.5" stroke="#000" stroke-width="1"/><path d="M414.5 463.5 L414.5 568.5" stroke="#f00" stroke-width="1" fill="none"/><path d="M413 486h3v3h-3z" fill="#f00"/><path d="M413 510h3v3h-3z" fill="#f00"/><path d="M413 551h3v3h-3z" fill="#f00"/><path d="M413 567h3v3h-3z" fill="#f00"/><text x="421.0" y="433.7" fill="#000" stroke="#000" stroke-width="0.28" font-size="12" text-anchor="start">R26</text><text x="420.0" y="446.8" fill="#000" stroke="#000" stroke-width="0.28" font-size="12" text-anchor="start">47kΩ</text><path d="M463.5 406.5 L463.5 422.5" stroke="#f00" stroke-width="1" fill="none"/><path d="M463.5 422.5L463.5 439.9" stroke="#000" stroke-width="1"/><path d="M463.5 446.1L463.5 463.5" stroke="#000" stroke-width="1"/><path d="M455.5 439.9L471.5 439.9" stroke="#000" stroke-width="2"/><path d="M455.5 446.1L471.5 446.1" stroke="#000" stroke-width="2"/><path d="M463.5 463.5 L463.5 487.5" stroke="#f00" stroke-width="1" fill="none"/><path d="M414.5 487.5 L463.5 487.5" stroke="#f00" stroke-width="1" fill="none"/><text x="474.0" y="433.5" fill="#000" stroke="#000" stroke-width="0.28" font-size="12" text-anchor="start">C5</text><text x="474.0" y="446.1" fill="#000" stroke="#000" stroke-width="0.28" font-size="12" text-anchor="start">330pF</text><path d="M414.5 511.5 L422.5 511.5" stroke="#f00" stroke-width="1" fill="none"/><path d="M422.5 511.5L439.1 511.5" stroke="#000" stroke-width="1"/><path d="M446.9 511.5L463.5 511.5" stroke="#000" stroke-width="1"/><path d="M439.1 503.5L439.1 519.5" stroke="#000" stroke-width="2"/><path d="M446.9 503.5L446.9 519.5" stroke="#000" stroke-width="2"/><path d="M463.5 511.5 L471.5 511.5" stroke="#f00" stroke-width="1" fill="none"/><path d="M471.5 511.5L479.6 511.5" stroke="#000" stroke-width="1"/><path d="M479.6 511.5 L482.3 507.2 L486.4 517.0 L490.3 507.2 L494.2 517.0 L498.2 507.2 L502.3 517.0 L504.2 511.5" stroke="#000" stroke-width="1" fill="none"/><path d="M504.2 511.5L511.5 511.5" stroke="#000" stroke-width="1"/><path d="M511.5 511.5 L633.5 511.5" stroke="#f00" stroke-width="1" fill="none"/><path d="M633.5 511.5L641.6 511.5" stroke="#000" stroke-width="1"/><path d="M641.6 511.5 L644.3 507.2 L648.4 517.0 L652.3 507.2 L656.2 517.0 L660.2 507.2 L664.3 517.0 L666.2 511.5" stroke="#000" stroke-width="1" fill="none"/><path d="M666.2 511.5L673.5 511.5" stroke="#000" stroke-width="1"/><path d="M673.5 511.5 L811.5 511.5" stroke="#f00" stroke-width="1" fill="none"/><path d="M616 510h3v3h-3z" fill="#f00"/><text x="442.0" y="498.8" fill="#000" stroke="#000" stroke-width="0.28" font-size="12" text-anchor="middle">C1</text><text x="441.0" y="532.3" fill="#000" stroke="#000" stroke-width="0.28" font-size="12" text-anchor="middle">220μF</text><text x="434" y="522" fill="#f00" font-size="11" text-anchor="middle">+</text><text x="491.0" y="503.3" fill="#000" stroke="#000" stroke-width="0.28" font-size="12" text-anchor="middle">R4</text><text x="492.0" y="527.4" fill="#000" stroke="#000" stroke-width="0.28" font-size="12" text-anchor="middle">2.4kΩ</text><text x="653.5" y="503.7" fill="#000" stroke="#000" stroke-width="0.28" font-size="12" text-anchor="middle">R14</text><text x="653.5" y="527.7" fill="#000" stroke="#000" stroke-width="0.28" font-size="12" text-anchor="middle">47kΩ</text><circle cx="309.5" cy="471" r="15" fill="none" stroke="#000"/><text x="309.5" y="465" font-size="11" text-anchor="middle">+</text><text x="309.5" y="485" font-size="11" text-anchor="middle">–</text><path d="M303 472q3-4 6 0t6 0" stroke="#000" fill="none"/><path d="M309.5 447.0L309.5 456.0" stroke="#000" stroke-width="1"/><path d="M309.5 486.0L309.5 495.5" stroke="#000" stroke-width="1"/><path d="M309.5 495.5 L309.5 552.5" stroke="#f00" stroke-width="1" fill="none"/><path d="M309.5 552.5 L414.5 552.5" stroke="#f00" stroke-width="1" fill="none"/><text x="327.0" y="460.6" fill="#000" stroke="#000" stroke-width="0.28" font-size="12" text-anchor="start">1Vrms</text><text x="327.0" y="474.3" fill="#000" stroke="#000" stroke-width="0.28" font-size="12" text-anchor="start">20kHz</text><text x="327.0" y="487.3" fill="#000" stroke="#000" stroke-width="0.28" font-size="12" text-anchor="start">0°</text><path d="M365.5 568.5L374.5 568.5" stroke="#000" stroke-width="1"/><path d="M365.5 560.5L365.5 576.5" stroke="#000" stroke-width="1"/><path d="M362.5 563.5L362.5 573.5" stroke="#000" stroke-width="1"/><path d="M360.5 566.5L360.5 570.5" stroke="#000" stroke-width="1"/><path d="M374.5 568.5 L446.5 568.5" stroke="#f00" stroke-width="1" fill="none"/><path d="M446.5 568.5L454.6 568.5" stroke="#000" stroke-width="1"/><path d="M454.6 568.5 L457.3 564.2 L461.4 574.0 L465.3 564.2 L469.2 574.0 L473.2 564.2 L477.3 574.0 L479.2 568.5" stroke="#000" stroke-width="1" fill="none"/><path d="M479.2 568.5L487.5 568.5" stroke="#000" stroke-width="1"/><path d="M487.5 568.5 L633.5 568.5" stroke="#f00" stroke-width="1" fill="none"/><path d="M633.5 568.5 L633.5 609.5" stroke="#f00" stroke-width="1" fill="none"/><text x="466.5" y="560.1" fill="#000" stroke="#000" stroke-width="0.28" font-size="12" text-anchor="middle">R5</text><text x="467.5" y="583.7" fill="#000" stroke="#000" stroke-width="0.28" font-size="12" text-anchor="middle">22kΩ</text><path d="M519.5 374.5 L519.5 341.5" stroke="#f00" stroke-width="1" fill="none"/><path d="M519.5 439.5L519.5 417.0" stroke="#00f" stroke-width="1"/><path d="M519.5 439.5 L519.5 447.5" stroke="#f00" stroke-width="1" fill="none"/><path d="M519.5 447.5L519.5 455.6" stroke="#000" stroke-width="1"/><path d="M519.5 455.6 L525.0 458.3 L515.2 462.4 L525.0 466.3 L515.2 470.2 L525.0 474.2 L515.2 478.3 L519.5 480.2" stroke="#000" stroke-width="1" fill="none"/><path d="M519.5 480.2L519.5 487.5" stroke="#000" stroke-width="1"/><path d="M519.5 487.5 L519.5 520.5" stroke="#f00" stroke-width="1" fill="none"/><path d="M519.5 520.5L519.5 528.6" stroke="#000" stroke-width="1"/><path d="M519.5 528.6 L525.0 531.3 L515.2 535.4 L525.0 539.3 L515.2 543.2 L525.0 547.2 L515.2 551.3 L519.5 553.2" stroke="#000" stroke-width="1" fill="none"/><path d="M519.5 553.2L519.5 560.5" stroke="#000" stroke-width="1"/><path d="M519.5 560.5 L519.5 576.5" stroke="#f00" stroke-width="1" fill="none"/><path d="M519.5 576.5L519.5 598.0" stroke="#00f" stroke-width="1"/><path d="M519.5 598.0L524.0 601.0" stroke="#00f" stroke-width="1"/><path d="M530.5 598.0L530.5 601.0" stroke="#00f" stroke-width="1.6"/><path d="M518 494h3v3h-3z" fill="#f00"/><path d="M584.5 439.5L584.5 417.0" stroke="#00f" stroke-width="1"/><path d="M584.5 439.5 L584.5 447.5" stroke="#f00" stroke-width="1" fill="none"/><path d="M584.5 447.5L584.5 455.6" stroke="#000" stroke-width="1"/><path d="M584.5 455.6 L590.0 458.3 L580.2 462.4 L590.0 466.3 L580.2 470.2 L590.0 474.2 L580.2 478.3 L584.5 480.2" stroke="#000" stroke-width="1" fill="none"/><path d="M584.5 480.2L584.5 487.5" stroke="#000" stroke-width="1"/><path d="M584.5 487.5 L584.5 495.5" stroke="#f00" stroke-width="1" fill="none"/><path d="M519.5 495.5 L584.5 495.5" stroke="#f00" stroke-width="1" fill="none"/><text x="526.0" y="457.7" fill="#000" stroke="#000" stroke-width="0.28" font-size="12" text-anchor="start">R1</text><text x="526.0" y="471.1" fill="#000" stroke="#000" stroke-width="0.28" font-size="12" text-anchor="start">100Ω</text><text x="591.0" y="457.7" fill="#000" stroke="#000" stroke-width="0.28" font-size="12" text-anchor="start">R2</text><text x="591.0" y="471.1" fill="#000" stroke="#000" stroke-width="0.28" font-size="12" text-anchor="start">100Ω</text><text x="526.0" y="531.0" fill="#000" stroke="#000" stroke-width="0.28" font-size="12" text-anchor="start">R3</text><text x="526.0" y="543.5" fill="#000" stroke="#000" stroke-width="0.28" font-size="12" text-anchor="start">15kΩ</text><text x="538.0" y="589.0" fill="#00f" stroke="#00f" stroke-width="0.28" font-size="12" text-anchor="start">Q5</text><text x="572.0" y="600.3" fill="#000" stroke="#000" stroke-width="0.28" font-size="12" text-anchor="start">R7</text><text x="686.0" y="599.5" fill="#000" stroke="#000" stroke-width="0.28" font-size="12" text-anchor="start">R8</text><text x="765.0" y="588.7" fill="#000" stroke="#000" stroke-width="0.28" font-size="12" text-anchor="start">U2</text><path d="M509.6 395.4L509.6 417.0" stroke="#00f" stroke-width="1.6"/><path d="M509.6 401.0L519.5 395.7" stroke="#00f" stroke-width="1"/><path d="M509.6 411.4L519.5 416.7" stroke="#00f" stroke-width="1"/><path d="M519.5 416.7L513.9 416.6L516.3 412.0Z" fill="#00f"/><path d="M519.5 395.7L519.5 374.5" stroke="#00f" stroke-width="1"/><path d="M594.4 395.4L594.4 417.0" stroke="#00f" stroke-width="1.6"/><path d="M594.4 401.0L584.5 395.7" stroke="#00f" stroke-width="1"/><path d="M594.4 411.4L584.5 416.7" stroke="#00f" stroke-width="1"/><path d="M584.5 416.7L587.7 412.0L590.1 416.6Z" fill="#00f"/><path d="M584.5 395.7L584.5 374.5" stroke="#00f" stroke-width="1"/><path d="M596.0 406.5L608.5 406.5" stroke="#00f" stroke-width="1"/><path d="M608.5 406.5 L617.5 406.5" stroke="#f00" stroke-width="1" fill="none"/><path d="M617.5 406.5 L617.5 511.5" stroke="#f00" stroke-width="1" fill="none"/><text x="497.0" y="370.3" fill="#00f" stroke="#00f" stroke-width="0.28" font-size="12" text-anchor="start">Q1</text><text x="465.0" y="386.3" fill="#00f" stroke="#00f" stroke-width="0.28" font-size="12" text-anchor="start">BC546BP</text><text x="562.0" y="394.3" fill="#00f" stroke="#00f" stroke-width="0.28" font-size="12" text-anchor="start">Q2</text><text x="530.0" y="410.3" fill="#00f" stroke="#00f" stroke-width="0.28" font-size="12" text-anchor="start">BC546BP</text><path d="M529.4 274.0L529.4 295.6" stroke="#00f" stroke-width="1.6"/><path d="M529.4 279.6L519.5 274.3" stroke="#00f" stroke-width="1"/><path d="M529.4 290.0L519.5 295.3" stroke="#00f" stroke-width="1"/><path d="M529.4 279.6L523.8 279.5L526.2 274.9Z" fill="#00f"/><path d="M574.6 274.0L574.6 295.6" stroke="#00f" stroke-width="1.6"/><path d="M574.6 279.6L584.5 274.3" stroke="#00f" stroke-width="1"/><path d="M574.6 290.0L584.5 295.3" stroke="#00f" stroke-width="1"/><path d="M574.6 279.6L577.8 274.9L580.2 279.5Z" fill="#00f"/><path d="M519.5 274.3L519.5 252.5" stroke="#00f" stroke-width="1"/><path d="M584.5 274.3L584.5 252.5" stroke="#00f" stroke-width="1"/><path d="M519.5 295.3L519.5 317.5" stroke="#00f" stroke-width="1"/><path d="M584.5 295.3L584.5 317.5" stroke="#00f" stroke-width="1"/><path d="M519.5 317.5 L519.5 374.5" stroke="#f00" stroke-width="1" fill="none"/><path d="M584.5 317.5 L584.5 374.5" stroke="#f00" stroke-width="1" fill="none"/><path d="M519.5 252.5 L519.5 244.5" stroke="#f00" stroke-width="1" fill="none"/><path d="M584.5 252.5 L584.5 244.5" stroke="#f00" stroke-width="1" fill="none"/><path d="M519.5 244.5 L536.5 244.5" stroke="#f00" stroke-width="1" fill="none"/><path d="M536.5 244.5L544.6 244.5" stroke="#000" stroke-width="1"/><path d="M544.6 244.5 L547.3 240.2 L551.4 250.0 L555.3 240.2 L559.2 250.0 L563.2 240.2 L567.3 250.0 L569.2 244.5" stroke="#000" stroke-width="1" fill="none"/><path d="M569.2 244.5L576.5 244.5" stroke="#000" stroke-width="1"/><path d="M576.5 244.5 L584.5 244.5" stroke="#f00" stroke-width="1" fill="none"/><path d="M530.5 285.5L544.5 285.5" stroke="#00f" stroke-width="1"/><path d="M544.5 285.5 L568.5 285.5" stroke="#f00" stroke-width="1" fill="none"/><path d="M568.5 285.5L574.0 285.5" stroke="#00f" stroke-width="1"/><path d="M551 284h3v3h-3z" fill="#f00"/><path d="M552.5 285.5 L552.5 325.5" stroke="#f00" stroke-width="1" fill="none"/><path d="M552.5 325.5 L584.5 325.5" stroke="#f00" stroke-width="1" fill="none"/><path d="M583 324h3v3h-3z" fill="#f00"/><path d="M560.5 212.5 L560.5 220.5" stroke="#f00" stroke-width="1" fill="none"/><path d="M560.5 220.5L560.5 229.0" stroke="#000" stroke-width="1"/><path d="M560.5 229.0L555.5 242.0" stroke="#000" stroke-width="1"/><path d="M555.0 244.5L554.5 238.9L559.3 240.9Z" fill="#000"/><text x="452.0" y="217.1" fill="#000" stroke="#000" stroke-width="0.28" font-size="12" text-anchor="start">50 %220Ω</text><text x="479.0" y="230.2" fill="#000" stroke="#000" stroke-width="0.28" font-size="12" text-anchor="start">Key=A</text><text x="545.0" y="261.1" fill="#000" stroke="#000" stroke-width="0.28" font-size="12" text-anchor="start">R12</text><text x="489.0" y="273.0" fill="#00f" stroke="#00f" stroke-width="0.28" font-size="12" text-anchor="start">Q4</text><text x="465.0" y="288.8" fill="#00f" stroke="#00f" stroke-width="0.28" font-size="12" text-anchor="start">BC556B</text><text x="586.5" y="264.1" fill="#00f" stroke="#00f" stroke-width="0.28" font-size="12" text-anchor="start">Q3</text><text x="586.5" y="280.7" fill="#00f" stroke="#00f" stroke-width="0.28" font-size="12" text-anchor="start">BC556B</text><path d="M560.5 212.5 L787.5 212.5" stroke="#f00" stroke-width="1" fill="none"/><path d="M787.5 212.5L795.6 212.5" stroke="#000" stroke-width="1"/><path d="M795.6 212.5 L798.3 208.2 L802.4 218.0 L806.3 208.2 L810.2 218.0 L814.2 208.2 L818.3 218.0 L820.2 212.5" stroke="#000" stroke-width="1" fill="none"/><path d="M820.2 212.5L827.5 212.5" stroke="#000" stroke-width="1"/><path d="M827.5 212.5 L851.5 212.5" stroke="#f00" stroke-width="1" fill="none"/><path d="M672 211h3v3h-3z" fill="#f00"/><path d="M705 211h3v3h-3z" fill="#f00"/><path d="M761 211h3v3h-3z" fill="#f00"/><text x="806.0" y="203.5" fill="#000" stroke="#000" stroke-width="0.28" font-size="12" text-anchor="middle">R17</text><text x="806.0" y="228.6" fill="#000" stroke="#000" stroke-width="0.28" font-size="12" text-anchor="middle">22Ω</text><path d="M673.5 212.5 L673.5 268.5" stroke="#f00" stroke-width="1" fill="none"/><path d="M673.5 268.5L673.5 276.6" stroke="#000" stroke-width="1"/><path d="M673.5 276.6 L679.0 279.3 L669.2 283.4 L679.0 287.3 L669.2 291.2 L679.0 295.2 L669.2 299.3 L673.5 301.2" stroke="#000" stroke-width="1" fill="none"/><path d="M673.5 301.2L673.5 309.5" stroke="#000" stroke-width="1"/><path d="M673.5 309.5 L673.5 398.5" stroke="#f00" stroke-width="1" fill="none"/><path d="M672 397h3v3h-3z" fill="#f00"/><text x="680.0" y="280.3" fill="#000" stroke="#000" stroke-width="0.28" font-size="12" text-anchor="start">R11</text><text x="679.0" y="292.9" fill="#000" stroke="#000" stroke-width="0.28" font-size="12" text-anchor="start">820Ω</text><path d="M706.5 212.5 L706.5 236.5" stroke="#f00" stroke-width="1" fill="none"/><path d="M706.5 236.5L706.5 244.6" stroke="#000" stroke-width="1"/><path d="M706.5 244.6 L712.0 247.3 L702.2 251.4 L712.0 255.3 L702.2 259.2 L712.0 263.2 L702.2 267.3 L706.5 269.2" stroke="#000" stroke-width="1" fill="none"/><path d="M706.5 269.2L706.5 277.5" stroke="#000" stroke-width="1"/><path d="M706.5 277.5 L706.5 301.5" stroke="#f00" stroke-width="1" fill="none"/><path d="M705 300h3v3h-3z" fill="#f00"/><path d="M706.5 309.5L706.5 331.0" stroke="#00f" stroke-width="1"/><path d="M706.5 301.5 L738.5 301.5" stroke="#f00" stroke-width="1" fill="none"/><path d="M738.5 301.5L752.5 301.5" stroke="#000" stroke-width="1"/><text x="712.0" y="247.4" fill="#000" stroke="#000" stroke-width="0.28" font-size="12" text-anchor="start">R9</text><text x="712.0" y="260.3" fill="#000" stroke="#000" stroke-width="0.28" font-size="12" text-anchor="start">510Ω</text><path d="M762.5 212.5 L762.5 220.5" stroke="#f00" stroke-width="1" fill="none"/><path d="M762.5 220.5L762.5 228.6" stroke="#000" stroke-width="1"/><path d="M762.5 228.6 L768.0 231.3 L758.2 235.4 L768.0 239.3 L758.2 243.2 L768.0 247.2 L758.2 251.3 L762.5 253.2" stroke="#000" stroke-width="1" fill="none"/><path d="M762.5 253.2L762.5 260.5" stroke="#000" stroke-width="1"/><path d="M762.5 260.5 L762.5 268.5" stroke="#f00" stroke-width="1" fill="none"/><path d="M762.5 268.5L762.5 291.0" stroke="#000" stroke-width="1"/><path d="M752.6 290.7L752.6 312.3" stroke="#000" stroke-width="1.6"/><path d="M752.6 296.3L762.5 291.0" stroke="#000" stroke-width="1"/><path d="M752.6 306.7L762.5 312.0" stroke="#000" stroke-width="1"/><path d="M752.6 296.3L755.8 291.6L758.2 296.2Z" fill="#000"/><path d="M762.5 312.0L762.5 333.0" stroke="#000" stroke-width="1"/><path d="M762.5 333.0L762.5 568.5" stroke="#f00" stroke-width="1"/><path d="M762.5 576.5L762.5 601.0" stroke="#000" stroke-width="1"/><text x="769.0" y="231.1" fill="#000" stroke="#000" stroke-width="0.28" font-size="12" text-anchor="start">R10</text><text x="769.0" y="244.4" fill="#000" stroke="#000" stroke-width="0.28" font-size="12" text-anchor="start">15Ω</text><text x="765.0" y="280.9" fill="#000" stroke="#000" stroke-width="0.28" font-size="12" text-anchor="start">U1</text><path d="M762.5 422.5L762.5 430.6" stroke="#000" stroke-width="1"/><path d="M762.5 430.6 L768.0 433.3 L758.2 437.4 L768.0 441.3 L758.2 445.2 L768.0 449.2 L758.2 453.3 L762.5 455.2" stroke="#000" stroke-width="1" fill="none"/><path d="M762.5 455.2L762.5 463.5" stroke="#000" stroke-width="1"/><path d="M762.5 520.5L762.5 528.6" stroke="#000" stroke-width="1"/><path d="M762.5 528.6 L768.0 531.3 L758.2 535.4 L768.0 539.3 L758.2 543.2 L768.0 547.2 L758.2 551.3 L762.5 553.2" stroke="#000" stroke-width="1" fill="none"/><path d="M762.5 553.2L762.5 560.5" stroke="#000" stroke-width="1"/><path d="M761 397h3v3h-3z" fill="#f00"/><path d="M761 413h3v3h-3z" fill="#f00"/><path d="M761 470h3v3h-3z" fill="#f00"/><path d="M761 567h3v3h-3z" fill="#f00"/><text x="769.0" y="433.6" fill="#000" stroke="#000" stroke-width="0.28" font-size="12" text-anchor="start">R15</text><text x="769.0" y="445.5" fill="#000" stroke="#000" stroke-width="0.28" font-size="12" text-anchor="start">2.4kΩ</text><text x="769.0" y="530.7" fill="#000" stroke="#000" stroke-width="0.28" font-size="12" text-anchor="start">R16</text><text x="769.0" y="543.8" fill="#000" stroke="#000" stroke-width="0.28" font-size="12" text-anchor="start">750Ω</text><path d="M762.5 341.5 L787.5 341.5" stroke="#f00" stroke-width="1" fill="none"/><path d="M787.5 341.5L795.6 341.5" stroke="#000" stroke-width="1"/><path d="M795.6 341.5 L798.3 337.2 L802.4 347.0 L806.3 337.2 L810.2 347.0 L814.2 337.2 L818.3 347.0 L820.2 341.5" stroke="#000" stroke-width="1" fill="none"/><path d="M820.2 341.5L827.5 341.5" stroke="#000" stroke-width="1"/><path d="M827.5 341.5L841.5 341.5" stroke="#000" stroke-width="1"/><path d="M842.0 331.0L842.0 351.0" stroke="#000" stroke-width="1.6"/><text x="764.6" y="329.6" fill="#000" stroke="#000" stroke-width="0.28" font-size="12" text-anchor="start">2SB649</text><text x="779.7" y="334.3" fill="#000" stroke="#000" stroke-width="0.28" font-size="12" text-anchor="start">R19</text><text x="809.3" y="334.3" fill="#000" stroke="#000" stroke-width="0.28" font-size="12" text-anchor="start">100Ω</text><path d="M779.5 358.5L795.5 358.5" stroke="#000" stroke-width="1"/><path d="M782.0 355.5L793.0 355.5" stroke="#000" stroke-width="1"/><path d="M785.5 352.5L789.5 352.5" stroke="#000" stroke-width="1"/><path d="M787.5 358.5L787.5 366.5" stroke="#000" stroke-width="1"/><path d="M787.5 366.5 L811.5 366.5" stroke="#f00" stroke-width="1" fill="none"/><path d="M811.5 366.5 L811.5 374.5" stroke="#f00" stroke-width="1" fill="none"/><path d="M811.5 374.5L811.5 391.4" stroke="#000" stroke-width="1"/><path d="M811.5 397.6L811.5 414.5" stroke="#000" stroke-width="1"/><path d="M803.5 391.4L819.5 391.4" stroke="#000" stroke-width="2"/><path d="M803.5 397.6L819.5 397.6" stroke="#000" stroke-width="2"/><path d="M811.5 414.5 L811.5 422.5" stroke="#f00" stroke-width="1" fill="none"/><path d="M811.5 422.5L811.5 430.6" stroke="#000" stroke-width="1"/><path d="M811.5 430.6 L817.0 433.3 L807.2 437.4 L817.0 441.3 L807.2 445.2 L817.0 449.2 L807.2 453.3 L811.5 455.2" stroke="#000" stroke-width="1" fill="none"/><path d="M811.5 455.2L811.5 463.5" stroke="#000" stroke-width="1"/><path d="M811.5 463.5 L811.5 511.5" stroke="#f00" stroke-width="1" fill="none"/><path d="M810 470h3v3h-3z" fill="#f00"/><path d="M811.5 471.5 L843.5 471.5" stroke="#f00" stroke-width="1" fill="none"/><text x="781.0" y="401.5" fill="#000" stroke="#000" stroke-width="0.28" font-size="12" text-anchor="start">C7</text><text x="773.0" y="413.9" fill="#000" stroke="#000" stroke-width="0.28" font-size="12" text-anchor="start">100nF</text><text x="817.0" y="433.6" fill="#000" stroke="#000" stroke-width="0.28" font-size="12" text-anchor="start">R29</text><text x="817.0" y="445.5" fill="#000" stroke="#000" stroke-width="0.28" font-size="12" text-anchor="start">10Ω</text><path d="M696.6 331.0L696.6 352.6" stroke="#00f" stroke-width="1.6"/><path d="M696.6 336.6L706.5 331.3" stroke="#00f" stroke-width="1"/><path d="M696.6 347.0L706.5 352.3" stroke="#00f" stroke-width="1"/><path d="M696.6 336.6L699.8 331.9L702.2 336.5Z" fill="#00f"/><path d="M706.5 352.3L706.5 374.5" stroke="#00f" stroke-width="1"/><path d="M706.5 374.5 L706.5 406.5" stroke="#f00" stroke-width="1" fill="none"/><path d="M519.5 341.5 L681.5 341.5" stroke="#f00" stroke-width="1" fill="none"/><path d="M681.5 341.5L695.8 341.5" stroke="#00f" stroke-width="1"/><path d="M632 340h3v3h-3z" fill="#f00"/><text x="708.0" y="321.3" fill="#00f" stroke="#00f" stroke-width="0.28" font-size="12" text-anchor="start">Q7</text><text x="708.0" y="337.3" fill="#00f" stroke="#00f" stroke-width="0.28" font-size="12" text-anchor="start">BC556B</text><path d="M633.5 341.5 L633.5 349.5" stroke="#f00" stroke-width="1" fill="none"/><path d="M633.5 349.5L633.5 366.9" stroke="#000" stroke-width="1"/><path d="M633.5 373.1L633.5 390.5" stroke="#000" stroke-width="1"/><path d="M625.5 366.9L641.5 366.9" stroke="#000" stroke-width="2"/><path d="M625.5 373.1L641.5 373.1" stroke="#000" stroke-width="2"/><path d="M633.5 390.5 L633.5 398.5" stroke="#f00" stroke-width="1" fill="none"/><path d="M633.5 398.5 L714.5 398.5" stroke="#f00" stroke-width="1" fill="none"/><path d="M714.5 398.5L731.8 398.5" stroke="#000" stroke-width="1"/><path d="M737.2 398.5L754.5 398.5" stroke="#000" stroke-width="1"/><path d="M731.8 390.5L731.8 406.5" stroke="#000" stroke-width="2"/><path d="M737.2 390.5L737.2 406.5" stroke="#000" stroke-width="2"/><path d="M754.5 398.5 L762.5 398.5" stroke="#f00" stroke-width="1" fill="none"/><text x="643.0" y="361.1" fill="#000" stroke="#000" stroke-width="0.28" font-size="12" text-anchor="start">C2</text><text x="642.0" y="373.6" fill="#000" stroke="#000" stroke-width="0.28" font-size="12" text-anchor="start">22pF</text><text x="741.0" y="368.5" fill="#000" stroke="#000" stroke-width="0.28" font-size="12" text-anchor="end">C3</text><text x="720.0" y="379.1" fill="#000" stroke="#000" stroke-width="0.28" font-size="12" text-anchor="start">220pF</text><path d="M649.5 406.5 L706.5 406.5" stroke="#f00" stroke-width="1" fill="none"/><path d="M649.5 406.5 L649.5 422.5" stroke="#f00" stroke-width="1" fill="none"/><path d="M649.5 422.5L649.5 430.6" stroke="#000" stroke-width="1"/><path d="M649.5 430.6 L655.0 433.3 L645.2 437.4 L655.0 441.3 L645.2 445.2 L655.0 449.2 L645.2 453.3 L649.5 455.2" stroke="#000" stroke-width="1" fill="none"/><path d="M649.5 455.2L649.5 463.5" stroke="#000" stroke-width="1"/><path d="M649.5 463.5 L649.5 471.5" stroke="#f00" stroke-width="1" fill="none"/><path d="M649.5 471.5L649.5 479.0" stroke="#000" stroke-width="1"/><path d="M641.5 479.5L657.5 479.5" stroke="#000" stroke-width="1"/><path d="M644.5 483.5L654.5 483.5" stroke="#000" stroke-width="1"/><path d="M647.5 487.5L651.5 487.5" stroke="#000" stroke-width="1"/><text x="655.0" y="433.6" fill="#000" stroke="#000" stroke-width="0.28" font-size="12" text-anchor="start">R30</text><text x="655.0" y="445.5" fill="#000" stroke="#000" stroke-width="0.28" font-size="12" text-anchor="start">2.4kΩ</text><path d="M689.5 414.5 L762.5 414.5" stroke="#f00" stroke-width="1" fill="none"/><path d="M705 413h3v3h-3z" fill="#f00"/><path d="M689.5 414.5 L689.5 447.5" stroke="#f00" stroke-width="1" fill="none"/><path d="M689.5 447.5L689.5 464.5" stroke="#000" stroke-width="1"/><path d="M689.5 470.5L689.5 487.5" stroke="#000" stroke-width="1"/><path d="M681.5 464.5L697.5 464.5" stroke="#000" stroke-width="2"/><path d="M681.5 470.5L697.5 470.5" stroke="#000" stroke-width="2"/><path d="M689.5 487.5 L689.5 568.5" stroke="#f00" stroke-width="1" fill="none"/><path d="M689.5 568.5 L779.5 568.5" stroke="#f00" stroke-width="1" fill="none"/><path d="M705 567h3v3h-3z" fill="#f00"/><text x="668.0" y="458.1" fill="#000" stroke="#000" stroke-width="0.28" font-size="12" text-anchor="start">C4</text><text x="652.0" y="471.4" fill="#000" stroke="#000" stroke-width="0.28" font-size="12" text-anchor="start">1μF</text><path d="M706.5 414.5 L706.5 439.5" stroke="#f00" stroke-width="1" fill="none"/><path d="M706.5 439.5L706.5 460.5" stroke="#00f" stroke-width="1"/><path d="M716.4 460.4L716.4 482.0" stroke="#00f" stroke-width="1.6"/><path d="M716.4 466.0L706.5 460.7" stroke="#00f" stroke-width="1"/><path d="M716.4 476.4L706.5 481.7" stroke="#00f" stroke-width="1"/><path d="M706.5 481.7L709.7 477.0L712.1 481.6Z" fill="#00f"/><path d="M706.5 482.0L706.5 503.5" stroke="#00f" stroke-width="1"/><path d="M706.5 503.5 L706.5 568.5" stroke="#f00" stroke-width="1" fill="none"/><path d="M716.5 471.5L730.5 471.5" stroke="#00f" stroke-width="1"/><path d="M730.5 471.5 L762.5 471.5" stroke="#f00" stroke-width="1" fill="none"/><text x="724.0" y="450.9" fill="#00f" stroke="#00f" stroke-width="0.28" font-size="12" text-anchor="start">Q8</text><text x="724.0" y="466.6" fill="#00f" stroke="#00f" stroke-width="0.28" font-size="12" text-anchor="start">BD139</text><path d="M779.5 568.5L787.6 568.5" stroke="#000" stroke-width="1"/><path d="M787.6 568.5 L790.3 564.2 L794.4 574.0 L798.3 564.2 L802.2 574.0 L806.2 564.2 L810.3 574.0 L812.2 568.5" stroke="#000" stroke-width="1" fill="none"/><path d="M812.2 568.5L819.5 568.5" stroke="#000" stroke-width="1"/><path d="M819.5 568.5L827.5 568.5" stroke="#ff9933" stroke-width="1"/><path d="M827.5 568.5L841.5 568.5" stroke="#000" stroke-width="1"/><text x="798.5" y="561.0" fill="#000" stroke="#000" stroke-width="0.28" font-size="12" text-anchor="middle">R20</text><text x="798.5" y="584.8" fill="#000" stroke="#000" stroke-width="0.28" font-size="12" text-anchor="middle">100Ω</text><path d="M851.5 440.0L851.5 455.0" stroke="#000" stroke-width="1"/><path d="M851.5 430.0 L857.0 432.7 L847.2 436.8 L857.0 440.7 L847.2 444.6 L857.0 448.6 L847.2 452.7 L851.5 454.6" stroke="#000" stroke-width="1" fill="none"/><path d="M851.5 455.0L851.5 463.5" stroke="#000" stroke-width="1"/><path d="M851.5 463.5 L851.5 536.5" stroke="#f00" stroke-width="1" fill="none"/><path d="M851.5 536.5L851.5 557.0" stroke="#000" stroke-width="1"/><path d="M841.6 557.7L841.6 579.3" stroke="#000" stroke-width="1.6"/><path d="M841.6 563.3L851.5 558.0" stroke="#000" stroke-width="1"/><path d="M841.6 573.7L851.5 579.0" stroke="#000" stroke-width="1"/><path d="M841.6 563.3L844.8 558.6L847.2 563.2Z" fill="#000"/><path d="M851.5 579.0L851.5 601.0" stroke="#000" stroke-width="1"/><path d="M850 527h3v3h-3z" fill="#f00"/><path d="M851.5 528.5 L868.5 528.5" stroke="#f00" stroke-width="1" fill="none"/><path d="M868.5 528.5L876.6 528.5" stroke="#000" stroke-width="1"/><path d="M876.6 528.5 L879.3 524.2 L883.4 534.0 L887.3 524.2 L891.2 534.0 L895.2 524.2 L899.3 534.0 L901.2 528.5" stroke="#000" stroke-width="1" fill="none"/><path d="M901.2 528.5L908.5 528.5" stroke="#000" stroke-width="1"/><path d="M908.5 528.5 L916.5 528.5" stroke="#f00" stroke-width="1" fill="none"/><path d="M916.5 528.5 L916.5 568.5" stroke="#f00" stroke-width="1" fill="none"/><path d="M916.5 568.5L930.6 568.5" stroke="#000" stroke-width="1"/><path d="M859 527h3v3h-3z" fill="#f00"/><path d="M860.5 528.5 L860.5 609.5" stroke="#f00" stroke-width="1" fill="none"/><text x="887.5" y="520.2" fill="#000" stroke="#000" stroke-width="0.28" font-size="12" text-anchor="middle">R23</text><text x="887.5" y="544.3" fill="#000" stroke="#000" stroke-width="0.28" font-size="12" text-anchor="middle">3.3Ω</text><path d="M941.5 430.0 L947.0 432.7 L937.2 436.8 L947.0 440.7 L937.2 444.6 L947.0 448.6 L937.2 452.7 L941.5 454.6" stroke="#000" stroke-width="1" fill="none"/><path d="M941.5 455.0L941.5 463.5" stroke="#000" stroke-width="1"/><path d="M941.5 463.5 L941.5 479.5" stroke="#f00" stroke-width="1" fill="none"/><path d="M941.5 479.5L941.5 487.6" stroke="#000" stroke-width="1"/><path d="M941.5 487.6 L947.0 490.3 L937.2 494.4 L947.0 498.3 L937.2 502.2 L947.0 506.2 L937.2 510.3 L941.5 512.2" stroke="#000" stroke-width="1" fill="none"/><path d="M941.5 512.2L941.5 520.5" stroke="#000" stroke-width="1"/><path d="M941.5 520.5 L941.5 536.5" stroke="#f00" stroke-width="1" fill="none"/><path d="M941.5 536.5L941.5 557.0" stroke="#000" stroke-width="1"/><path d="M931.6 557.7L931.6 579.3" stroke="#000" stroke-width="1.6"/><path d="M931.6 563.3L941.5 558.0" stroke="#000" stroke-width="1"/><path d="M931.6 573.7L941.5 579.0" stroke="#000" stroke-width="1"/><path d="M931.6 563.3L934.8 558.6L937.2 563.2Z" fill="#000"/><path d="M941.5 579.0L941.5 601.5" stroke="#000" stroke-width="1"/><path d="M941.5 601.5 L941.5 625.5" stroke="#f00" stroke-width="1" fill="none"/><path d="M843.5 471.5 L1046.5 471.5" stroke="#f00" stroke-width="1" fill="none"/><path d="M940 470h3v3h-3z" fill="#f00"/><text x="947.0" y="490.3" fill="#000" stroke="#000" stroke-width="0.28" font-size="12" text-anchor="start">R24</text><text x="947.0" y="503.0" fill="#000" stroke="#000" stroke-width="0.28" font-size="12" text-anchor="start">220mΩ</text><text x="943.0" y="580.1" fill="#000" stroke="#000" stroke-width="0.28" font-size="12" text-anchor="start">U6</text><text x="943.0" y="596.8" fill="#000" stroke="#000" stroke-width="0.28" font-size="12" text-anchor="start">2SA1302</text><text x="866.0" y="447.3" fill="#000" stroke="#000" stroke-width="0.28" font-size="12" text-anchor="middle">51Ω</text><text x="965.0" y="447.3" fill="#000" stroke="#000" stroke-width="0.28" font-size="12" text-anchor="middle">220mΩ</text><path d="M893.0 625.5L908.0 625.5" stroke="#000" stroke-width="1"/><path d="M908.0 625.5 L910.7 621.2 L914.8 631.0 L918.7 621.2 L922.6 631.0 L926.6 621.2 L930.7 631.0 L932.6 625.5" stroke="#000" stroke-width="1" fill="none"/><path d="M932.6 625.5L932.5 625.5" stroke="#000" stroke-width="1"/><path d="M932.5 625.5 L1022.5 625.5" stroke="#f00" stroke-width="1" fill="none"/><path d="M1022.5 625.5L1035.3 625.5" stroke="#000" stroke-width="1"/><path d="M1036.6 614.7L1036.6 636.3" stroke="#000" stroke-width="1.6"/><path d="M1036.6 620.3L1046.5 615.0" stroke="#000" stroke-width="1"/><path d="M1036.6 630.7L1046.5 636.0" stroke="#000" stroke-width="1"/><path d="M1036.6 620.3L1039.8 615.6L1042.2 620.2Z" fill="#000"/><path d="M1046.5 615.0L1046.5 592.0" stroke="#000" stroke-width="1"/><path d="M1046.5 592.0L1046.5 570.0" stroke="#f00" stroke-width="1"/><path d="M1208.5 552.5 L1208.5 601.5" stroke="#f00" stroke-width="1" fill="none"/><path d="M1208.5 601.5 L1248.5 601.5" stroke="#f00" stroke-width="1" fill="none"/><text x="903.0" y="617.0" fill="#000" stroke="#000" stroke-width="0.28" font-size="12" text-anchor="start">R34</text><text x="910.0" y="641.2" fill="#000" stroke="#000" stroke-width="0.28" font-size="12" text-anchor="start">3Ω</text><text x="913.0" y="681.3" fill="#000" stroke="#000" stroke-width="0.28" font-size="12" text-anchor="start">V2</text><text x="908.0" y="693.9" fill="#000" stroke="#000" stroke-width="0.28" font-size="12" text-anchor="start">40V</text><path d="M908.0 686.0L912.0 686.0" stroke="#000" stroke-width="1"/><path d="M908.0 703.0L912.0 703.0" stroke="#000" stroke-width="1"/><path d="M908.5 722.5 L941.5 722.5" stroke="#f00" stroke-width="1" fill="none"/><path d="M908.5 738.5 L941.5 738.5" stroke="#f00" stroke-width="1" fill="none"/><path d="M908.5 754.5 L941.5 754.5" stroke="#f00" stroke-width="1" fill="none"/></svg>
<div class="b" style="left:845px;top:0px;width:382px;height:441px;background:#f0f0f0;box-shadow:0 0 7px 1px rgba(0,0,0,.28)"></div>
<div class="b" style="left:845px;top:0px;width:382px;height:27px;background:#fff"></div>
<div class="t" style="left:853px;top:5px;color:#9c999c;font-size:11.7px;line-height:15px">Осциллограф-XSC1</div>
<div class="b" style="left:845px;top:27px;width:382px;height:1px;background:#707070"></div>
<div class="b" style="left:845px;top:28px;width:382px;height:1px;background:#a8a8a8"></div>
<div class="b" style="left:845px;top:29px;width:382px;height:1px;background:#7a7a7a"></div>
<div class="b" style="left:845px;top:27px;width:1px;height:245px;background:#707070"></div>
<div class="b" style="left:846px;top:28px;width:1px;height:244px;background:#a8a8a8"></div>
<div class="b" style="left:847px;top:29px;width:1px;height:243px;background:#7a7a7a"></div>
<div class="b" style="left:848px;top:30px;width:379px;height:242px;background:#fff"></div>
<div class="b" style="left:848px;top:272px;width:379px;height:2px;background:#a0a0a0"></div>
<svg width="1227" height="895"><path d="M911.5 39V268" stroke="#a0a0a0" stroke-dasharray="3 3"/><path d="M966.5 39V268" stroke="#a0a0a0" stroke-dasharray="3 3"/><path d="M1021.5 39V268" stroke="#a0a0a0" stroke-dasharray="3 3"/><path d="M1076.5 39V268" stroke="#a0a0a0" stroke-dasharray="3 3"/><path d="M1131.5 39V268" stroke="#a0a0a0" stroke-dasharray="3 3"/><path d="M1186.5 39V268" stroke="#a0a0a0" stroke-dasharray="3 3"/><path d="M857 76.5H1227" stroke="#a0a0a0" stroke-dasharray="3 3"/><path d="M857 114.5H1227" stroke="#a0a0a0" stroke-dasharray="3 3"/><path d="M857 191.5H1227" stroke="#a0a0a0" stroke-dasharray="3 3"/><path d="M857 229.5H1227" stroke="#a0a0a0" stroke-dasharray="3 3"/><path d="M857 38.5H1227M857 153.5H1227M857 268.5H1227" stroke="#000" stroke-width="1"/><path d="M867.5 153V156M878.5 153V156M889.5 153V156M900.5 153V156M911.5 153V156M922.5 153V156M933.5 153V156M944.5 153V156M955.5 153V156M966.5 153V156M977.5 153V156M988.5 153V156M999.5 153V156M1010.5 153V156M1021.5 153V156M1032.5 153V156M1043.5 153V156M1054.5 153V156M1065.5 153V156M1076.5 153V156M1087.5 153V156M1098.5 153V156M1109.5 153V156M1120.5 153V156M1131.5 153V156M1142.5 153V156M1153.5 153V156M1164.5 153V156M1175.5 153V156M1186.5 153V156M1197.5 153V156M1208.5 153V156M1219.5 153V156" stroke="#000"/><path d="M1131.5 34V38" stroke="#000"/><path d="M856.0 151.3 L856.5 149.2 L857.0 147.1 L857.5 145.0 L858.0 142.9 L858.5 140.9 L859.0 138.8 L859.5 136.8 L860.0 134.8 L860.5 132.8 L861.0 130.9 L861.5 129.0 L862.0 127.1 L862.5 125.3 L863.0 123.5 L863.5 121.7 L864.0 119.9 L864.5 118.2 L865.0 116.6 L865.5 115.0 L866.0 113.4 L866.5 111.9 L867.0 110.4 L867.5 108.9 L868.0 107.6 L868.5 106.2 L869.0 104.9 L869.5 103.7 L870.0 102.6 L870.5 101.4 L871.0 100.4 L871.5 99.4 L872.0 98.5 L872.5 97.6 L873.0 96.8 L873.5 96.0 L874.0 95.3 L874.5 94.7 L875.0 94.1 L875.5 93.6 L876.0 93.2 L876.5 92.8 L877.0 92.5 L877.5 92.3 L878.0 92.1 L878.5 92.0 L879.0 92.0 L879.5 92.0 L880.0 92.1 L880.5 92.2 L881.0 92.4 L881.5 92.6 L882.0 92.8 L882.5 93.1 L883.0 93.5 L883.5 93.9 L884.0 94.3 L884.5 94.8 L885.0 95.3 L885.5 95.9 L886.0 96.5 L886.5 97.2 L887.0 97.9 L887.5 98.6 L888.0 99.4 L888.5 100.3 L889.0 101.1 L889.5 102.1 L890.0 103.0 L890.5 104.0 L891.0 105.0 L891.5 106.1 L892.0 107.2 L892.5 108.3 L893.0 109.5 L893.5 110.7 L894.0 112.0 L894.5 113.2 L895.0 114.6 L895.5 115.9 L896.0 117.3 L896.5 118.7 L897.0 120.1 L897.5 121.6 L898.0 123.0 L898.5 124.5 L899.0 126.1 L899.5 127.6 L900.0 129.2 L900.5 130.8 L901.0 132.4 L901.5 134.1 L902.0 135.7 L902.5 137.4 L903.0 139.1 L903.5 140.8 L904.0 142.5 L904.5 144.2 L905.0 146.0 L905.5 147.7 L906.0 149.5 L906.5 151.3 L907.0 153.0 L907.5 154.8 L908.0 156.6 L908.5 158.4 L909.0 160.2 L909.5 162.0 L910.0 163.8 L910.5 165.6 L911.0 167.4 L911.5 169.1 L912.0 170.9 L912.5 172.7 L913.0 174.5 L913.5 176.2 L914.0 178.0 L914.5 179.8 L915.0 181.5 L915.5 183.2 L916.0 184.9 L916.5 186.6 L917.0 188.3 L917.5 190.0 L918.0 191.7 L918.5 193.3 L919.0 194.9 L919.5 196.6 L920.0 198.1 L920.5 199.7 L921.0 201.3 L921.5 202.8 L922.0 204.3 L922.5 205.8 L923.0 207.3 L923.5 208.7 L924.0 210.1 L924.5 211.5 L925.0 212.9 L925.5 214.2 L926.0 215.5 L926.5 216.8 L927.0 218.1 L927.5 219.3 L928.0 220.5 L928.5 221.7 L929.0 222.8 L929.5 221.4 L930.0 220.0 L930.5 218.6 L931.0 217.1 L931.5 215.5 L932.0 214.0 L932.5 212.4 L933.0 210.7 L933.5 209.0 L934.0 207.3 L934.5 205.6 L935.0 203.8 L935.5 202.0 L936.0 200.1 L936.5 198.2 L937.0 196.3 L937.5 194.4 L938.0 192.5 L938.5 190.5 L939.0 188.5 L939.5 186.4 L940.0 184.4 L940.5 182.3 L941.0 180.3 L941.5 178.2 L942.0 176.1 L942.5 174.0 L943.0 171.8 L943.5 169.7 L944.0 167.6 L944.5 165.4 L945.0 163.3 L945.5 161.1 L946.0 159.0 L946.5 156.8 L947.0 154.7 L947.5 152.6 L948.0 150.4 L948.5 148.3 L949.0 146.2 L949.5 144.2 L950.0 142.1 L950.5 140.0 L951.0 138.0 L951.5 136.0 L952.0 134.0 L952.5 132.1 L953.0 130.1 L953.5 128.2 L954.0 126.4 L954.5 124.5 L955.0 122.7 L955.5 121.0 L956.0 119.2 L956.5 117.6 L957.0 115.9 L957.5 114.3 L958.0 112.8 L958.5 111.3 L959.0 109.8 L959.5 108.4 L960.0 107.0 L960.5 105.7 L961.0 104.5 L961.5 103.2 L962.0 102.1 L962.5 101.0 L963.0 100.0 L963.5 99.0 L964.0 98.1 L964.5 97.2 L965.0 96.5 L965.5 95.7 L966.0 95.1 L966.5 94.5 L967.0 93.9 L967.5 93.5 L968.0 93.0 L968.5 92.7 L969.0 92.4 L969.5 92.2 L970.0 92.1 L970.5 92.0 L971.0 92.0 L971.5 92.0 L972.0 92.1 L972.5 92.3 L973.0 92.5 L973.5 92.7 L974.0 93.0 L974.5 93.3 L975.0 93.6 L975.5 94.1 L976.0 94.5 L976.5 95.0 L977.0 95.6 L977.5 96.2 L978.0 96.8 L978.5 97.5 L979.0 98.2 L979.5 99.0 L980.0 99.8 L980.5 100.6 L981.0 101.5 L981.5 102.4 L982.0 103.4 L982.5 104.4 L983.0 105.5 L983.5 106.5 L984.0 107.7 L984.5 108.8 L985.0 110.0 L985.5 111.2 L986.0 112.5 L986.5 113.8 L987.0 115.1 L987.5 116.4 L988.0 117.8 L988.5 119.2 L989.0 120.7 L989.5 122.1 L990.0 123.6 L990.5 125.2 L991.0 126.7 L991.5 128.3 L992.0 129.8 L992.5 131.5 L993.0 133.1 L993.5 134.7 L994.0 136.4 L994.5 138.1 L995.0 139.8 L995.5 141.5 L996.0 143.2 L996.5 144.9 L997.0 146.7 L997.5 148.4 L998.0 150.2 L998.5 152.0 L999.0 153.7 L999.5 155.5 L1000.0 157.3 L1000.5 159.1 L1001.0 160.9 L1001.5 162.7 L1002.0 164.5 L1002.5 166.3 L1003.0 168.1 L1003.5 169.9 L1004.0 171.6 L1004.5 173.4 L1005.0 175.2 L1005.5 177.0 L1006.0 178.7 L1006.5 180.5 L1007.0 182.2 L1007.5 183.9 L1008.0 185.6 L1008.5 187.3 L1009.0 189.0 L1009.5 190.7 L1010.0 192.3 L1010.5 194.0 L1011.0 195.6 L1011.5 197.2 L1012.0 198.8 L1012.5 200.3 L1013.0 201.9 L1013.5 203.4 L1014.0 204.9 L1014.5 206.4 L1015.0 207.8 L1015.5 209.3 L1016.0 210.7 L1016.5 212.0 L1017.0 213.4 L1017.5 214.7 L1018.0 216.0 L1018.5 217.3 L1019.0 218.5 L1019.5 219.8 L1020.0 221.0 L1020.5 222.1 L1021.0 222.3 L1021.5 220.9 L1022.0 219.4 L1022.5 218.0 L1023.0 216.5 L1023.5 214.9 L1024.0 213.3 L1024.5 211.7 L1025.0 210.0 L1025.5 208.3 L1026.0 206.6 L1026.5 204.8 L1027.0 203.1 L1027.5 201.2 L1028.0 199.4 L1028.5 197.5 L1029.0 195.6 L1029.5 193.6 L1030.0 191.7 L1030.5 189.7 L1031.0 187.7 L1031.5 185.6 L1032.0 183.6 L1032.5 181.5 L1033.0 179.4 L1033.5 177.3 L1034.0 175.2 L1034.5 173.1 L1035.0 171.0 L1035.5 168.8 L1036.0 166.7 L1036.5 164.6 L1037.0 162.4 L1037.5 160.3 L1038.0 158.1 L1038.5 156.0 L1039.0 153.8 L1039.5 151.7 L1040.0 149.6 L1040.5 147.5 L1041.0 145.4 L1041.5 143.3 L1042.0 141.3 L1042.5 139.2 L1043.0 137.2 L1043.5 135.2 L1044.0 133.2 L1044.5 131.3 L1045.0 129.4 L1045.5 127.5 L1046.0 125.6 L1046.5 123.8 L1047.0 122.0 L1047.5 120.3 L1048.0 118.6 L1048.5 116.9 L1049.0 115.3 L1049.5 113.7 L1050.0 112.2 L1050.5 110.7 L1051.0 109.2 L1051.5 107.8 L1052.0 106.5 L1052.5 105.2 L1053.0 104.0 L1053.5 102.8 L1054.0 101.7 L1054.5 100.6 L1055.0 99.6 L1055.5 98.6 L1056.0 97.7 L1056.5 96.9 L1057.0 96.2 L1057.5 95.5 L1058.0 94.8 L1058.5 94.2 L1059.0 93.7 L1059.5 93.3 L1060.0 92.9 L1060.5 92.6 L1061.0 92.3 L1061.5 92.2 L1062.0 92.0 L1062.5 92.0 L1063.0 92.0 L1063.5 92.1 L1064.0 92.2 L1064.5 92.3 L1065.0 92.5 L1065.5 92.8 L1066.0 93.1 L1066.5 93.4 L1067.0 93.8 L1067.5 94.2 L1068.0 94.7 L1068.5 95.2 L1069.0 95.8 L1069.5 96.4 L1070.0 97.1 L1070.5 97.8 L1071.0 98.5 L1071.5 99.3 L1072.0 100.1 L1072.5 101.0 L1073.0 101.9 L1073.5 102.8 L1074.0 103.8 L1074.5 104.8 L1075.0 105.9 L1075.5 107.0 L1076.0 108.1 L1076.5 109.3 L1077.0 110.5 L1077.5 111.7 L1078.0 113.0 L1078.5 114.3 L1079.0 115.6 L1079.5 117.0 L1080.0 118.4 L1080.5 119.8 L1081.0 121.3 L1081.5 122.7 L1082.0 124.2 L1082.5 125.8 L1083.0 127.3 L1083.5 128.9 L1084.0 130.5 L1084.5 132.1 L1085.0 133.7 L1085.5 135.4 L1086.0 137.1 L1086.5 138.7 L1087.0 140.4 L1087.5 142.2 L1088.0 143.9 L1088.5 145.6 L1089.0 147.4 L1089.5 149.1 L1090.0 150.9 L1090.5 152.7 L1091.0 154.5 L1091.5 156.2 L1092.0 158.0 L1092.5 159.8 L1093.0 161.6 L1093.5 163.4 L1094.0 165.2 L1094.5 167.0 L1095.0 168.8 L1095.5 170.6 L1096.0 172.4 L1096.5 174.1 L1097.0 175.9 L1097.5 177.7 L1098.0 179.4 L1098.5 181.2 L1099.0 182.9 L1099.5 184.6 L1100.0 186.3 L1100.5 188.0 L1101.0 189.7 L1101.5 191.3 L1102.0 193.0 L1102.5 194.6 L1103.0 196.2 L1103.5 197.8 L1104.0 199.4 L1104.5 201.0 L1105.0 202.5 L1105.5 204.0 L1106.0 205.5 L1106.5 207.0 L1107.0 208.4 L1107.5 209.8 L1108.0 211.2 L1108.5 212.6 L1109.0 213.9 L1109.5 215.2 L1110.0 216.5 L1110.5 217.8 L1111.0 219.0 L1111.5 220.2 L1112.0 221.4 L1112.5 222.6 L1113.0 221.7 L1113.5 220.3 L1114.0 218.9 L1114.5 217.4 L1115.0 215.8 L1115.5 214.3 L1116.0 212.7 L1116.5 211.0 L1117.0 209.4 L1117.5 207.7 L1118.0 205.9 L1118.5 204.1 L1119.0 202.3 L1119.5 200.5 L1120.0 198.6 L1120.5 196.7 L1121.0 194.8 L1121.5 192.8 L1122.0 190.9 L1122.5 188.9 L1123.0 186.9 L1123.5 184.8 L1124.0 182.8 L1124.5 180.7 L1125.0 178.6 L1125.5 176.5 L1126.0 174.4 L1126.5 172.3 L1127.0 170.1 L1127.5 168.0 L1128.0 165.8 L1128.5 163.7 L1129.0 161.6 L1129.5 159.4 L1130.0 157.3 L1130.5 155.1 L1131.0 153.0 L1131.5 150.9 L1132.0 148.8 L1132.5 146.7 L1133.0 144.6 L1133.5 142.5 L1134.0 140.4 L1134.5 138.4 L1135.0 136.4 L1135.5 134.4 L1136.0 132.5 L1136.5 130.5 L1137.0 128.6 L1137.5 126.7 L1138.0 124.9 L1138.5 123.1 L1139.0 121.3 L1139.5 119.6 L1140.0 117.9 L1140.5 116.2 L1141.0 114.6 L1141.5 113.1 L1142.0 111.6 L1142.5 110.1 L1143.0 108.7 L1143.5 107.3 L1144.0 106.0 L1144.5 104.7 L1145.0 103.5 L1145.5 102.3 L1146.0 101.2 L1146.5 100.2 L1147.0 99.2 L1147.5 98.3 L1148.0 97.4 L1148.5 96.6 L1149.0 95.9 L1149.5 95.2 L1150.0 94.6 L1150.5 94.0 L1151.0 93.5 L1151.5 93.1 L1152.0 92.8 L1152.5 92.5 L1153.0 92.3 L1153.5 92.1 L1154.0 92.0 L1154.5 92.0 L1155.0 92.0 L1155.5 92.1 L1156.0 92.2 L1156.5 92.4 L1157.0 92.6 L1157.5 92.9 L1158.0 93.2 L1158.5 93.6 L1159.0 94.0 L1159.5 94.4 L1160.0 94.9 L1160.5 95.5 L1161.0 96.0 L1161.5 96.7 L1162.0 97.3 L1162.5 98.0 L1163.0 98.8 L1163.5 99.6 L1164.0 100.4 L1164.5 101.3 L1165.0 102.2 L1165.5 103.2 L1166.0 104.2 L1166.5 105.2 L1167.0 106.3 L1167.5 107.4 L1168.0 108.6 L1168.5 109.8 L1169.0 111.0 L1169.5 112.2 L1170.0 113.5 L1170.5 114.8 L1171.0 116.2 L1171.5 117.5 L1172.0 119.0 L1172.5 120.4 L1173.0 121.8 L1173.5 123.3 L1174.0 124.8 L1174.5 126.4 L1175.0 127.9 L1175.5 129.5 L1176.0 131.1 L1176.5 132.8 L1177.0 134.4 L1177.5 136.1 L1178.0 137.7 L1178.5 139.4 L1179.0 141.1 L1179.5 142.8 L1180.0 144.6 L1180.5 146.3 L1181.0 148.1 L1181.5 149.8 L1182.0 151.6 L1182.5 153.4 L1183.0 155.2 L1183.5 157.0 L1184.0 158.7 L1184.5 160.5 L1185.0 162.3 L1185.5 164.1 L1186.0 165.9 L1186.5 167.7 L1187.0 169.5 L1187.5 171.3 L1188.0 173.1 L1188.5 174.8 L1189.0 176.6 L1189.5 178.4 L1190.0 180.1 L1190.5 181.8 L1191.0 183.6 L1191.5 185.3 L1192.0 187.0 L1192.5 188.7 L1193.0 190.4 L1193.5 192.0 L1194.0 193.6 L1194.5 195.3 L1195.0 196.9 L1195.5 198.5 L1196.0 200.0 L1196.5 201.6 L1197.0 203.1 L1197.5 204.6 L1198.0 206.1 L1198.5 207.5 L1199.0 209.0 L1199.5 210.4 L1200.0 211.8 L1200.5 213.1 L1201.0 214.5 L1201.5 215.8 L1202.0 217.0 L1202.5 218.3 L1203.0 219.5 L1203.5 220.7 L1204.0 221.9 L1204.5 222.5 L1205.0 221.1 L1205.5 219.7 L1206.0 218.3 L1206.5 216.8 L1207.0 215.2 L1207.5 213.6 L1208.0 212.0 L1208.5 210.4 L1209.0 208.7 L1209.5 207.0 L1210.0 205.2 L1210.5 203.4 L1211.0 201.6 L1211.5 199.7 L1212.0 197.9 L1212.5 196.0 L1213.0 194.0 L1213.5 192.1 L1214.0 190.1 L1214.5 188.1 L1215.0 186.0 L1215.5 184.0 L1216.0 181.9 L1216.5 179.9 L1217.0 177.8 L1217.5 175.6 L1218.0 173.5 L1218.5 171.4 L1219.0 169.3 L1219.5 167.1 L1220.0 165.0 L1220.5 162.8 L1221.0 160.7 L1221.5 158.5 L1222.0 156.4 L1222.5 154.3 L1223.0 152.1 L1223.5 150.0 L1224.0 147.9 L1224.5 145.8 L1225.0 143.7 L1225.5 141.7 L1226.0 139.6 L1226.5 137.6 L1227.0 135.6 L1227.5 133.6" stroke="#f00" stroke-width="1.1" fill="none"/><path d="M856.5 38V268" stroke="#f0f" stroke-width="1.2"/><path d="M848 30H865L856.5 38.5Z" fill="#0f0"/><path d="M848 30H865L863 32.5H850Z" fill="#f00"/><circle cx="856.5" cy="153" r="3" fill="none" stroke="#0c0"/></svg>
<div class="b" style="left:848px;top:278px;width:379px;height:13px;background:#f0f0f0"></div>
<div class="b" style="left:861px;top:279px;width:366px;height:11px;background:#cdcdcd"></div>
<div class="t" style="left:850px;top:277px;font-size:11px"><b style="font-weight:normal;color:#606060;font-size:13px">&lsaquo;</b></div>
<div class="b" style="left:846px;top:295px;width:58px;height:58px;border:1px solid #d8d8d8;border-left:1px solid #fff"></div>
<div class="t" style="left:851px;top:303px;font-size:12px">T1</div>
<div class="t" style="left:851px;top:317px;font-size:12px">T2</div>
<div class="t" style="left:851px;top:337px;font-size:12px">T2-T1</div>
<div class="btn" style="left:871px;top:302px;width:13px;height:15px;line-height:12px;background:#e6e6e6;border-color:#c8c8c8"><svg style="position:relative;left:0;top:1px" width="11" height="10"><path d="M0 5L5.5 0V3H11V7H5.5V10Z"/></svg></div>
<div class="btn" style="left:888px;top:302px;width:13px;height:15px;line-height:12px;background:#e6e6e6;border-color:#c8c8c8"><svg style="position:relative;left:0;top:1px" width="11" height="10"><path d="M11 5L5.5 0V3H0V7H5.5V10Z"/></svg></div>
<div class="btn" style="left:871px;top:320px;width:13px;height:15px;line-height:12px;background:#e6e6e6;border-color:#c8c8c8"><svg style="position:relative;left:0;top:1px" width="11" height="10"><path d="M0 5L5.5 0V3H11V7H5.5V10Z"/></svg></div>
<div class="btn" style="left:888px;top:320px;width:13px;height:15px;line-height:12px;background:#e6e6e6;border-color:#c8c8c8"><svg style="position:relative;left:0;top:1px" width="11" height="10"><path d="M11 5L5.5 0V3H0V7H5.5V10Z"/></svg></div>
<div class="b" style="left:905px;top:295px;width:322px;height:59px;background:#fff;border-top:2px solid #a0a0a0;border-left:2px solid #a0a0a0"></div>
<div class="t" style="left:921px;top:297px;">Время</div>
<div class="t" style="left:995px;top:297px;">Канал_A</div>
<div class="t" style="left:1075px;top:297px;">Канал_B</div>
<div class="t" style="left:921px;top:310px;">0.000 s</div>
<div class="t" style="left:1001px;top:310px;">0.000 V</div>
<div class="t" style="left:921px;top:323px;">0.000 s</div>
<div class="t" style="left:1001px;top:323px;">0.000 V</div>
<div class="t" style="left:921px;top:336px;">0.000 s</div>
<div class="t" style="left:1001px;top:336px;">0.000 V</div>
<div class="grp" style="left:846px;top:367px;width:133px;height:72px"></div>
<div class="t" style="left:853px;top:361px;background:#f0f0f0;padding:0 2px">Развертка</div>
<div class="grp" style="left:980px;top:367px;width:128px;height:72px"></div>
<div class="t" style="left:986px;top:361px;background:#f0f0f0;padding:0 2px">Канал А</div>
<div class="grp" style="left:1109px;top:367px;width:130px;height:72px"></div>
<div class="t" style="left:1116px;top:361px;background:#f0f0f0;padding:0 2px">Канал B</div>
<div class="t" style="left:848px;top:378px;">Шкала:</div>
<div class="inp" style="left:891px;top:374px;width:83px;height:20px;line-height:18px;">2 us/Div</div>
<div class="t" style="left:848px;top:399px;">задержка X</div>
<div class="inp" style="left:912px;top:395px;width:62px;height:20px;line-height:18px;">0</div>
<div class="btn sel" style="left:853px;top:419px;width:25px;height:18px;line-height:16px;">Y/T</div>
<div class="btn " style="left:880px;top:419px;width:27px;height:18px;line-height:16px;">Add</div>
<div class="btn " style="left:910px;top:419px;width:28px;height:18px;line-height:16px;">B/A</div>
<div class="btn " style="left:940px;top:419px;width:28px;height:18px;line-height:16px;">A/B</div>
<div class="t" style="left:983px;top:378px;">Шкала</div>
<div class="inp" style="left:1021px;top:374px;width:85px;height:20px;line-height:18px;">10&nbsp; V/Div</div>
<div class="t" style="left:983px;top:399px;">смещение Y</div>
<div class="inp" style="left:1046px;top:395px;width:60px;height:20px;line-height:18px;">0</div>
<div class="btn " style="left:986px;top:419px;width:24px;height:18px;line-height:16px;">AC</div>
<div class="btn " style="left:1012px;top:419px;width:22px;height:18px;line-height:16px;">0</div>
<div class="btn sel" style="left:1037px;top:419px;width:26px;height:18px;line-height:16px;">DC</div>
<div class="b" style="left:1088px;top:420px;width:13px;height:13px;border-radius:50%;background:#fff;border:1px solid #d0d0d0"></div>
<div class="b" style="left:1091px;top:423px;width:7px;height:7px;border-radius:50%;background:#cfcfcf"></div>
<div class="t" style="left:1112px;top:378px;">Шкала</div>
<div class="inp" style="left:1152px;top:374px;width:80px;height:20px;line-height:18px;">5&nbsp; V/Div</div>
<div class="t" style="left:1112px;top:399px;">смещение Y</div>
<div class="inp" style="left:1176px;top:395px;width:60px;height:20px;line-height:18px;">0</div>
<div class="btn " style="left:1114px;top:421px;width:24px;height:17px;line-height:15px;">AC</div>
<div class="btn " style="left:1140px;top:421px;width:22px;height:17px;line-height:15px;">0</div>
<div class="btn sel" style="left:1164px;top:421px;width:25px;height:17px;line-height:15px;">DC</div>
<div class="btn " style="left:1191px;top:421px;width:19px;height:17px;line-height:15px;">-</div>
<div class="b" style="left:1224px;top:422px;width:13px;height:13px;border-radius:50%;background:#fff;border:1px solid #d0d0d0"></div>
<div class="b" style="left:1227px;top:425px;width:7px;height:7px;border-radius:50%;background:#cfcfcf"></div>
<div class="b" style="left:0px;top:228px;width:186px;height:236px;background:#f0f0f0;box-shadow:0 0 7px 1px rgba(0,0,0,.28)"></div>
<div class="b" style="left:0px;top:228px;width:186px;height:29px;background:#fff"></div>
<div class="t" style="left:0px;top:235px;color:#9c999c;font-size:11.7px;line-height:15px">циональный генератор-X...</div>
<svg style="left:165px;top:236px" width="12" height="12"><path d="M0.5 0.5L11.5 11.5M11.5 0.5L0.5 11.5" stroke="#777" stroke-width="1.1"/></svg>
<div class="grp" style="left:-5px;top:266px;width:187px;height:155px"></div>
<div class="t" style="left:0px;top:259px;background:#f0f0f0;padding-right:2px">а сигнала</div>
<div class="btn sel" style="left:-2px;top:276px;width:42px;height:16px;line-height:14px;"></div>
<div class="btn " style="left:44px;top:276px;width:63px;height:16px;line-height:14px;"></div>
<div class="btn " style="left:111px;top:276px;width:65px;height:16px;line-height:14px;"></div>
<svg width="1227" height="895"><path d="M3 284q6 5 12 0t12-2" stroke="#000" fill="none"/><path d="M52 287L63 280L72 285L81 279L90 285L97 283" stroke="#000" fill="none"/><path d="M121.5 287.5H132.5V281.5H139.5V287.5H147.5V281.5H154.5V287.5H165" stroke="#000" fill="none"/></svg>
<div class="b" style="left:0px;top:301px;width:182px;height:1px;background:#dcdcdc"></div>
<div class="t" style="left:0px;top:295px;background:#f0f0f0;padding-right:2px">метры сигнала</div>
<div class="t" style="left:0px;top:314px;">тота</div>
<div class="inp" style="left:59px;top:311px;width:82px;height:20px;line-height:18px;">300</div>
<div class="inp" style="left:140px;top:311px;width:37px;height:20px;line-height:18px;padding-left:2px">kHz</div>
<div class="t" style="left:0px;top:334px;">тельность</div>
<div class="inp" style="left:59px;top:331px;width:82px;height:19px;line-height:17px;background:#f0f0f0;border-color:#d0d0d0;color:#888">50</div>
<div class="inp" style="left:140px;top:331px;width:37px;height:19px;line-height:17px;background:#f0f0f0;border-color:#d0d0d0;color:#888;text-align:center;padding:0">%</div>
<div class="t" style="left:0px;top:353px;">питуда</div>
<div class="inp" style="left:59px;top:350px;width:82px;height:20px;line-height:18px;">1.2</div>
<div class="inp" style="left:140px;top:350px;width:37px;height:20px;line-height:18px;padding-left:5px">Vp</div>
<div class="t" style="left:0px;top:372px;">щение</div>
<div class="inp" style="left:59px;top:369px;width:82px;height:20px;line-height:18px;">0</div>
<div class="inp" style="left:140px;top:369px;width:37px;height:20px;line-height:18px;padding-left:5px">V</div>
<div class="btn dis" style="left:7px;top:395px;width:129px;height:21px;line-height:19px;font-size:11px">Фронт/Спад</div>
<div class="t" style="left:45px;top:427px;">Общий</div>
<div class="b" style="left:53px;top:442px;width:13px;height:13px;border-radius:50%;background:#fff;border:1px solid #d0d0d0"></div>
<div class="b" style="left:56px;top:445px;width:7px;height:7px;border-radius:50%;background:#cfcfcf"></div>
<div class="b" style="left:150px;top:445px;width:13px;height:13px;border-radius:50%;background:#fff;border:1px solid #d0d0d0"></div>
<div class="t" style="left:152px;top:433px;font-size:11px">–</div>
<svg width="1227" height="895"><path fill="#a0a0a0" d="M181 451h2v2h-2zM181 455h2v2h-2zM181 459h2v2h-2zM177 455h2v2h-2zM177 459h2v2h-2zM173 459h2v2h-2z"/></svg>
<div class="b" style="left:1020px;top:441px;width:207px;height:130px;background:#f0f0f0;box-shadow:0 0 7px 1px rgba(0,0,0,.28)"></div>
<div class="b" style="left:1020px;top:448px;width:207px;height:32px;background:#f0f0f0;border-top:3px solid #c8c8c8;border-left:3px solid #c8c8c8;border-bottom:3px solid #fff"></div>
<div class="b" style="left:1024px;top:452px;width:203px;height:24px;background:#000"></div>
<div class="t" style="left:1110px;top:454px;color:#fff;font-size:16px;line-height:20px">15.875 W</div>
<div class="t" style="left:1026px;top:488px;font-size:10.8px;line-height:15px">Коэффициент мощности:</div>
<div class="b" style="left:1165px;top:486px;width:62px;height:18px;background:#000;border-top:2px solid #808080;border-left:2px solid #808080"></div>
<div class="t" style="left:1188px;top:488px;color:#fff;font-size:11px;line-height:15px">1.00000</div>
<div class="t" style="left:1034px;top:513px;font-size:10.8px;line-height:15px">Напряжение</div>
<div class="t" style="left:1195px;top:513px;font-size:10.8px;line-height:15px">Ток</div>
<div class="t" style="left:1031px;top:531px;font-size:14px">+</div>
<div class="t" style="left:1073px;top:531px;font-size:14px">–</div>
<div class="t" style="left:1191px;top:531px;font-size:14px">+</div>
<div class="b" style="left:1027px;top:545px;width:13px;height:13px;border-radius:50%;background:#fff;border:1px solid #d0d0d0"></div>
<div class="b" style="left:1030px;top:548px;width:7px;height:7px;border-radius:50%;background:#cfcfcf"></div>
<div class="b" style="left:1071px;top:545px;width:13px;height:13px;border-radius:50%;background:#fff;border:1px solid #d0d0d0"></div>
<div class="b" style="left:1074px;top:548px;width:7px;height:7px;border-radius:50%;background:#cfcfcf"></div>
<div class="b" style="left:1188px;top:545px;width:13px;height:13px;border-radius:50%;background:#fff;border:1px solid #d0d0d0"></div>
<div class="b" style="left:1191px;top:548px;width:7px;height:7px;border-radius:50%;background:#cfcfcf"></div>
<div class="b" style="left:1231px;top:545px;width:13px;height:13px;border-radius:50%;background:#fff;border:1px solid #d0d0d0"></div>
<div class="b" style="left:1234px;top:548px;width:7px;height:7px;border-radius:50%;background:#cfcfcf"></div>
<div class="b" style="left:0px;top:601px;width:908px;height:287px;background:#f0f0f0;border-top:1px solid #b8b8b8;box-shadow:0 0 7px 1px rgba(0,0,0,.28)"></div>
<div class="b" style="left:0px;top:601px;width:908px;height:31px;background:#fff"></div>
<div class="t" style="left:5px;top:608px;color:#9c999c;font-size:11.7px;line-height:15px">Плоттер Боде-XBP1</div>
<svg style="left:887px;top:609px" width="12" height="12"><path d="M0.5 0.5L11.5 11.5M11.5 0.5L0.5 11.5" stroke="#777" stroke-width="1.1"/></svg>
<div class="b" style="left:0px;top:632px;width:662px;height:2px;background:#808080"></div>
<div class="b" style="left:0px;top:634px;width:662px;height:231px;background:#000;border-right:2px solid #8a8a8a;border-bottom:1px solid #8a8a8a"></div>
<svg width="1227" height="895"><path d="M89.5 639V855" stroke="#ddd" stroke-dasharray="3 3"/><path d="M170.5 639V855" stroke="#ddd" stroke-dasharray="3 3"/><path d="M251.5 639V855" stroke="#ddd" stroke-dasharray="3 3"/><path d="M332.5 639V855" stroke="#ddd" stroke-dasharray="3 3"/><path d="M412.5 639V855" stroke="#ddd" stroke-dasharray="3 3"/><path d="M494.5 639V855" stroke="#ddd" stroke-dasharray="3 3"/><path d="M575.5 639V855" stroke="#ddd" stroke-dasharray="3 3"/><path d="M655.5 639V855" stroke="#ddd" stroke-dasharray="3 3"/><path d="M9 639.5H656" stroke="#ddd" stroke-dasharray="3 3"/><path d="M9 682.5H656" stroke="#ddd" stroke-dasharray="3 3"/><path d="M9 747.5H656" stroke="#ddd" stroke-dasharray="3 3"/><path d="M9 801.5H656" stroke="#ddd" stroke-dasharray="3 3"/><path d="M8.5 639V855.5H656" stroke="#fff" fill="none"/><path d="M4 682.5H9" stroke="#fff"/><path d="M8.5 669.5 L9.7 669.2 L11.4 668.9 L13.3 668.4 L15.5 668.0 L17.8 667.5 L20.2 667.0 L22.7 666.5 L25.0 666.0 L27.3 665.6 L29.6 665.1 L31.9 664.6 L34.3 664.1 L36.8 663.7 L39.4 663.3 L42.1 662.9 L45.0 662.5 L48.2 662.2 L51.7 661.9 L55.4 661.6 L59.2 661.3 L63.0 661.1 L66.6 660.9 L70.0 660.7 L73.0 660.6 L75.8 660.5 L78.4 660.5 L80.9 660.5 L83.2 660.5 L85.4 660.5 L87.2 660.6 L88.8 660.6 L90.0 660.6 L410.0 660.6 L411.2 660.6 L412.6 660.5 L414.4 660.5 L416.4 660.5 L418.6 660.4 L420.9 660.4 L423.4 660.5 L426.0 660.6 L428.7 660.7 L431.4 660.9 L434.3 661.1 L437.4 661.3 L440.6 661.6 L444.1 661.9 L447.9 662.3 L452.0 662.8 L456.5 663.3 L461.4 663.9 L466.5 664.4 L471.9 665.1 L477.5 665.8 L483.1 666.7 L488.6 667.7 L494.0 668.8 L499.4 670.1 L505.1 671.6 L510.8 673.2 L516.4 674.9 L522.0 676.7 L527.4 678.5 L532.4 680.5 L537.0 682.4 L541.2 684.4 L545.2 686.6 L548.9 688.8 L552.4 691.1 L555.6 693.4 L558.6 695.7 L561.4 697.9 L564.0 700.0 L566.2 701.9 L568.0 703.6 L569.5 705.2 L570.8 706.8 L572.0 708.5 L573.4 710.4 L575.0 712.6 L577.0 715.3 L579.4 718.5 L582.0 722.0 L584.8 725.9 L587.7 730.0 L590.7 734.3 L593.8 738.6 L596.9 742.9 L600.0 747.0 L603.1 751.1 L606.2 755.3 L609.4 759.5 L612.7 763.7 L615.9 767.9 L619.3 772.0 L622.6 776.0 L626.0 779.9 L629.6 783.8 L633.6 787.8 L637.8 791.9 L641.9 795.8 L645.8 799.4 L649.3 802.7 L652.3 805.4 L654.5 807.5" stroke="#f00" stroke-width="1.1" fill="none"/><path d="M452.5 634V855" stroke="#0dd"/><path d="M447 634H458L452.5 640Z" fill="#0dd"/><circle cx="452.5" cy="663" r="3" fill="none" stroke="#0dd"/></svg>
<div class="b" style="left:0px;top:864px;width:662px;height:2px;background:#fff"></div>
<div class="btn " style="left:-2px;top:869px;width:117px;height:14px;line-height:12px;"><svg style="position:relative;left:0;top:1px" width="12" height="11"><path d="M0 5.5L6 0V3.5H12V7.5H6V11Z"/></svg></div>
<div class="inp" style="left:117px;top:868px;width:212px;height:16px;line-height:14px;background:#f0f0f0;border-color:#dcdcdc;border-right:none;line-height:14px;font-size:11px;padding-left:12px;letter-spacing:-0.2px">308.997 kHz</div>
<div class="inp" style="left:330px;top:868px;width:210px;height:16px;line-height:14px;background:#f0f0f0;border-color:#dcdcdc;line-height:14px;padding-left:14px;letter-spacing:-0.1px">22.439 dB</div>
<div class="btn " style="left:541px;top:869px;width:120px;height:14px;line-height:12px;"><svg style="position:relative;left:0;top:1px" width="12" height="11"><path d="M12 5.5L6 0V3.5H0V7.5H6V11Z"/></svg></div>
<div class="grp" style="left:666px;top:638px;width:236px;height:161px"></div>
<div class="t" style="left:672px;top:631px;background:#f0f0f0;padding:0 2px">Режим</div>
<div class="btn sel" style="left:690px;top:649px;width:94px;height:18px;line-height:16px;">Амплитуда</div>
<div class="btn " style="left:787px;top:649px;width:94px;height:18px;line-height:16px;">Фаза</div>
<div class="b" style="left:667px;top:680px;width:234px;height:1px;background:#dcdcdc"></div>
<div class="b" style="left:785px;top:680px;width:1px;height:86px;background:#dcdcdc"></div>
<div class="b" style="left:667px;top:766px;width:234px;height:1px;background:#dcdcdc"></div>
<div class="t" style="left:672px;top:673px;background:#f0f0f0;padding:0 2px">По горизонтали</div>
<div class="t" style="left:789px;top:673px;background:#f0f0f0;padding:0 2px">По вертикали</div>
<div class="btn sel" style="left:679px;top:693px;width:43px;height:18px;line-height:16px;">Log</div>
<div class="btn " style="left:727px;top:693px;width:42px;height:18px;line-height:16px;">Лин</div>
<div class="btn sel" style="left:799px;top:693px;width:43px;height:18px;line-height:16px;">Log</div>
<div class="btn " style="left:846px;top:693px;width:42px;height:18px;line-height:16px;">Лин</div>
<div class="t" style="left:669px;top:716px;">F</div>
<div class="t" style="left:669px;top:736px;">I</div>
<div class="inp" style="left:678px;top:713px;width:63px;height:20px;line-height:18px;">100</div>
<div class="inp" style="left:741px;top:713px;width:36px;height:20px;line-height:18px;padding-left:2px">MHz</div>
<div class="inp" style="left:678px;top:733px;width:63px;height:19px;line-height:17px;">1</div>
<div class="inp" style="left:741px;top:733px;width:36px;height:19px;line-height:17px;padding-left:8px">Hz</div>
<div class="t" style="left:789px;top:716px;">F</div>
<div class="t" style="left:789px;top:736px;">I</div>
<div class="inp" style="left:798px;top:713px;width:63px;height:20px;line-height:18px;">50</div>
<div class="inp" style="left:861px;top:713px;width:36px;height:20px;line-height:18px;padding-left:5px">dB</div>
<div class="inp" style="left:798px;top:733px;width:63px;height:19px;line-height:17px;">-200</div>
<div class="inp" style="left:861px;top:733px;width:36px;height:19px;line-height:17px;padding-left:5px">dB</div>
<div class="t" style="left:672px;top:759px;background:#f0f0f0;padding:0 2px">Управление</div>
<div class="btn " style="left:688px;top:778px;width:61px;height:17px;line-height:15px;">Экран</div>
<div class="btn " style="left:753px;top:778px;width:61px;height:17px;line-height:15px;">Сохранить</div>
<div class="btn " style="left:817px;top:778px;width:61px;height:17px;line-height:15px;">Уст...</div>
<div class="t" style="left:685px;top:868px;font-size:13px">+</div>
<div class="b" style="left:696px;top:870px;width:13px;height:13px;border-radius:50%;background:#fff;border:1px solid #d0d0d0"></div>
<div class="b" style="left:699px;top:873px;width:7px;height:7px;border-radius:50%;background:#cfcfcf"></div>
<div class="t" style="left:719px;top:869px;">Вх</div>
<div class="b" style="left:740px;top:870px;width:13px;height:13px;border-radius:50%;background:#fff;border:1px solid #d0d0d0"></div>
<div class="b" style="left:743px;top:873px;width:7px;height:7px;border-radius:50%;background:#cfcfcf"></div>
<div class="t" style="left:758px;top:868px;font-size:13px">–</div>
<div class="t" style="left:796px;top:868px;font-size:13px">+</div>
<div class="b" style="left:807px;top:870px;width:13px;height:13px;border-radius:50%;background:#fff;border:1px solid #d0d0d0"></div>
<div class="b" style="left:810px;top:873px;width:7px;height:7px;border-radius:50%;background:#cfcfcf"></div>
<div class="t" style="left:828px;top:869px;">Вых</div>
<div class="b" style="left:854px;top:870px;width:13px;height:13px;border-radius:50%;background:#fff;border:1px solid #d0d0d0"></div>
<div class="b" style="left:857px;top:873px;width:7px;height:7px;border-radius:50%;background:#cfcfcf"></div>
<div class="t" style="left:872px;top:868px;font-size:13px">–</div>
<svg width="1227" height="895"><path fill="#a0a0a0" d="M903 876h2v2h-2zM903 880h2v2h-2zM899 880h2v2h-2zM903 872h2v2h-2zM899 876h2v2h-2zM895 880h2v2h-2z"/></svg>
<div class="b" style="left:936px;top:627px;width:291px;height:219px;background:#f0f0f0;box-shadow:0 0 7px 1px rgba(0,0,0,.28)"></div>
<div class="b" style="left:936px;top:627px;width:291px;height:29px;background:#fff"></div>
<div class="t" style="left:944px;top:634px;color:#9c999c;font-size:11.7px;line-height:15px;font-size:12px">Измеритель нелинейных искажений-XDA1</div>
<div class="t" style="left:998px;top:658px;font-size:10.8px;line-height:15px">Общие нелинейные искажения(THD)</div>
<div class="b" style="left:938px;top:676px;width:289px;height:31px;background:#f0f0f0;border-top:3px solid #c8c8c8;border-left:3px solid #c8c8c8;border-bottom:3px solid #fff"></div>
<div class="b" style="left:941px;top:679px;width:286px;height:25px;background:#000"></div>
<div class="t" style="left:1067px;top:680px;color:#fff;font-size:16px;line-height:20px">13.934 %</div>
<div class="b" style="left:993px;top:713px;width:240px;height:85px;border:1px solid #dcdcdc"></div>
<div class="btn sel" style="left:943px;top:727px;width:41px;height:24px;line-height:22px;font-size:11px">Старт</div>
<div class="btn " style="left:943px;top:760px;width:41px;height:24px;line-height:22px;font-size:11px">Стоп</div>
<div class="t" style="left:1000px;top:726px;font-size:11px;line-height:15px">Основная частота.</div>
<div class="inp" style="left:1107px;top:726px;width:94px;height:18px;line-height:16px;background:#f0f0f0;border-color:#d8d8d8;color:#888;text-align:center;padding:0">300</div>
<div class="inp" style="left:1202px;top:726px;width:30px;height:18px;line-height:16px;background:#f0f0f0;border-color:#d8d8d8;color:#888;padding-left:2px">kHz</div>
<div class="t" style="left:1030px;top:758px;font-size:11px;line-height:15px">Разрешение.</div>
<div class="b" style="left:1107px;top:754px;width:125px;height:21px;background:#cccccc;border:1px solid #c4c4c4"></div>
<div class="t" style="left:1111px;top:758px;color:#838383;font-size:11px;line-height:15px">25 kHz</div>
<div class="b" style="left:1107px;top:777px;width:125px;height:19px;background:#f0f0f0;border-left:1px solid #a0a0a0;border-top:1px solid #a0a0a0"></div>
<div class="t" style="left:1150px;top:779px;font-size:11px;line-height:15px">25 kHz</div>
<div class="grp" style="left:941px;top:810px;width:188px;height:31px"></div>
<div class="t" style="left:948px;top:803px;font-size:11px;line-height:15px;background:#f0f0f0;padding:0 2px">Управление</div>
<div class="grp" style="left:1129px;top:810px;width:66px;height:31px"></div>
<div class="t" style="left:1135px;top:803px;font-size:11px;line-height:15px;background:#f0f0f0;padding:0 2px">Экран</div>
<div class="btn sel" style="left:949px;top:818px;width:55px;height:18px;line-height:16px;font-size:11px">THD</div>
<div class="btn " style="left:1009px;top:818px;width:55px;height:18px;line-height:16px;font-size:11px">SINAD</div>
<div class="btn dis" style="left:1069px;top:818px;width:55px;height:18px;line-height:16px;font-size:11px">Уст...</div>
<div class="btn sel" style="left:1132px;top:818px;width:25px;height:18px;line-height:16px;font-size:11px">%</div>
<div class="btn " style="left:1162px;top:818px;width:25px;height:18px;line-height:16px;font-size:11px">dB</div>
<div class="t" style="left:1207px;top:824px;font-size:11px">Вх</div>
<div class="b" style="left:1224px;top:825px;width:13px;height:13px;border-radius:50%;background:#fff;border:1px solid #d0d0d0"></div>
<div class="b" style="left:1227px;top:828px;width:7px;height:7px;border-radius:50%;background:#cfcfcf"></div></body></html>
